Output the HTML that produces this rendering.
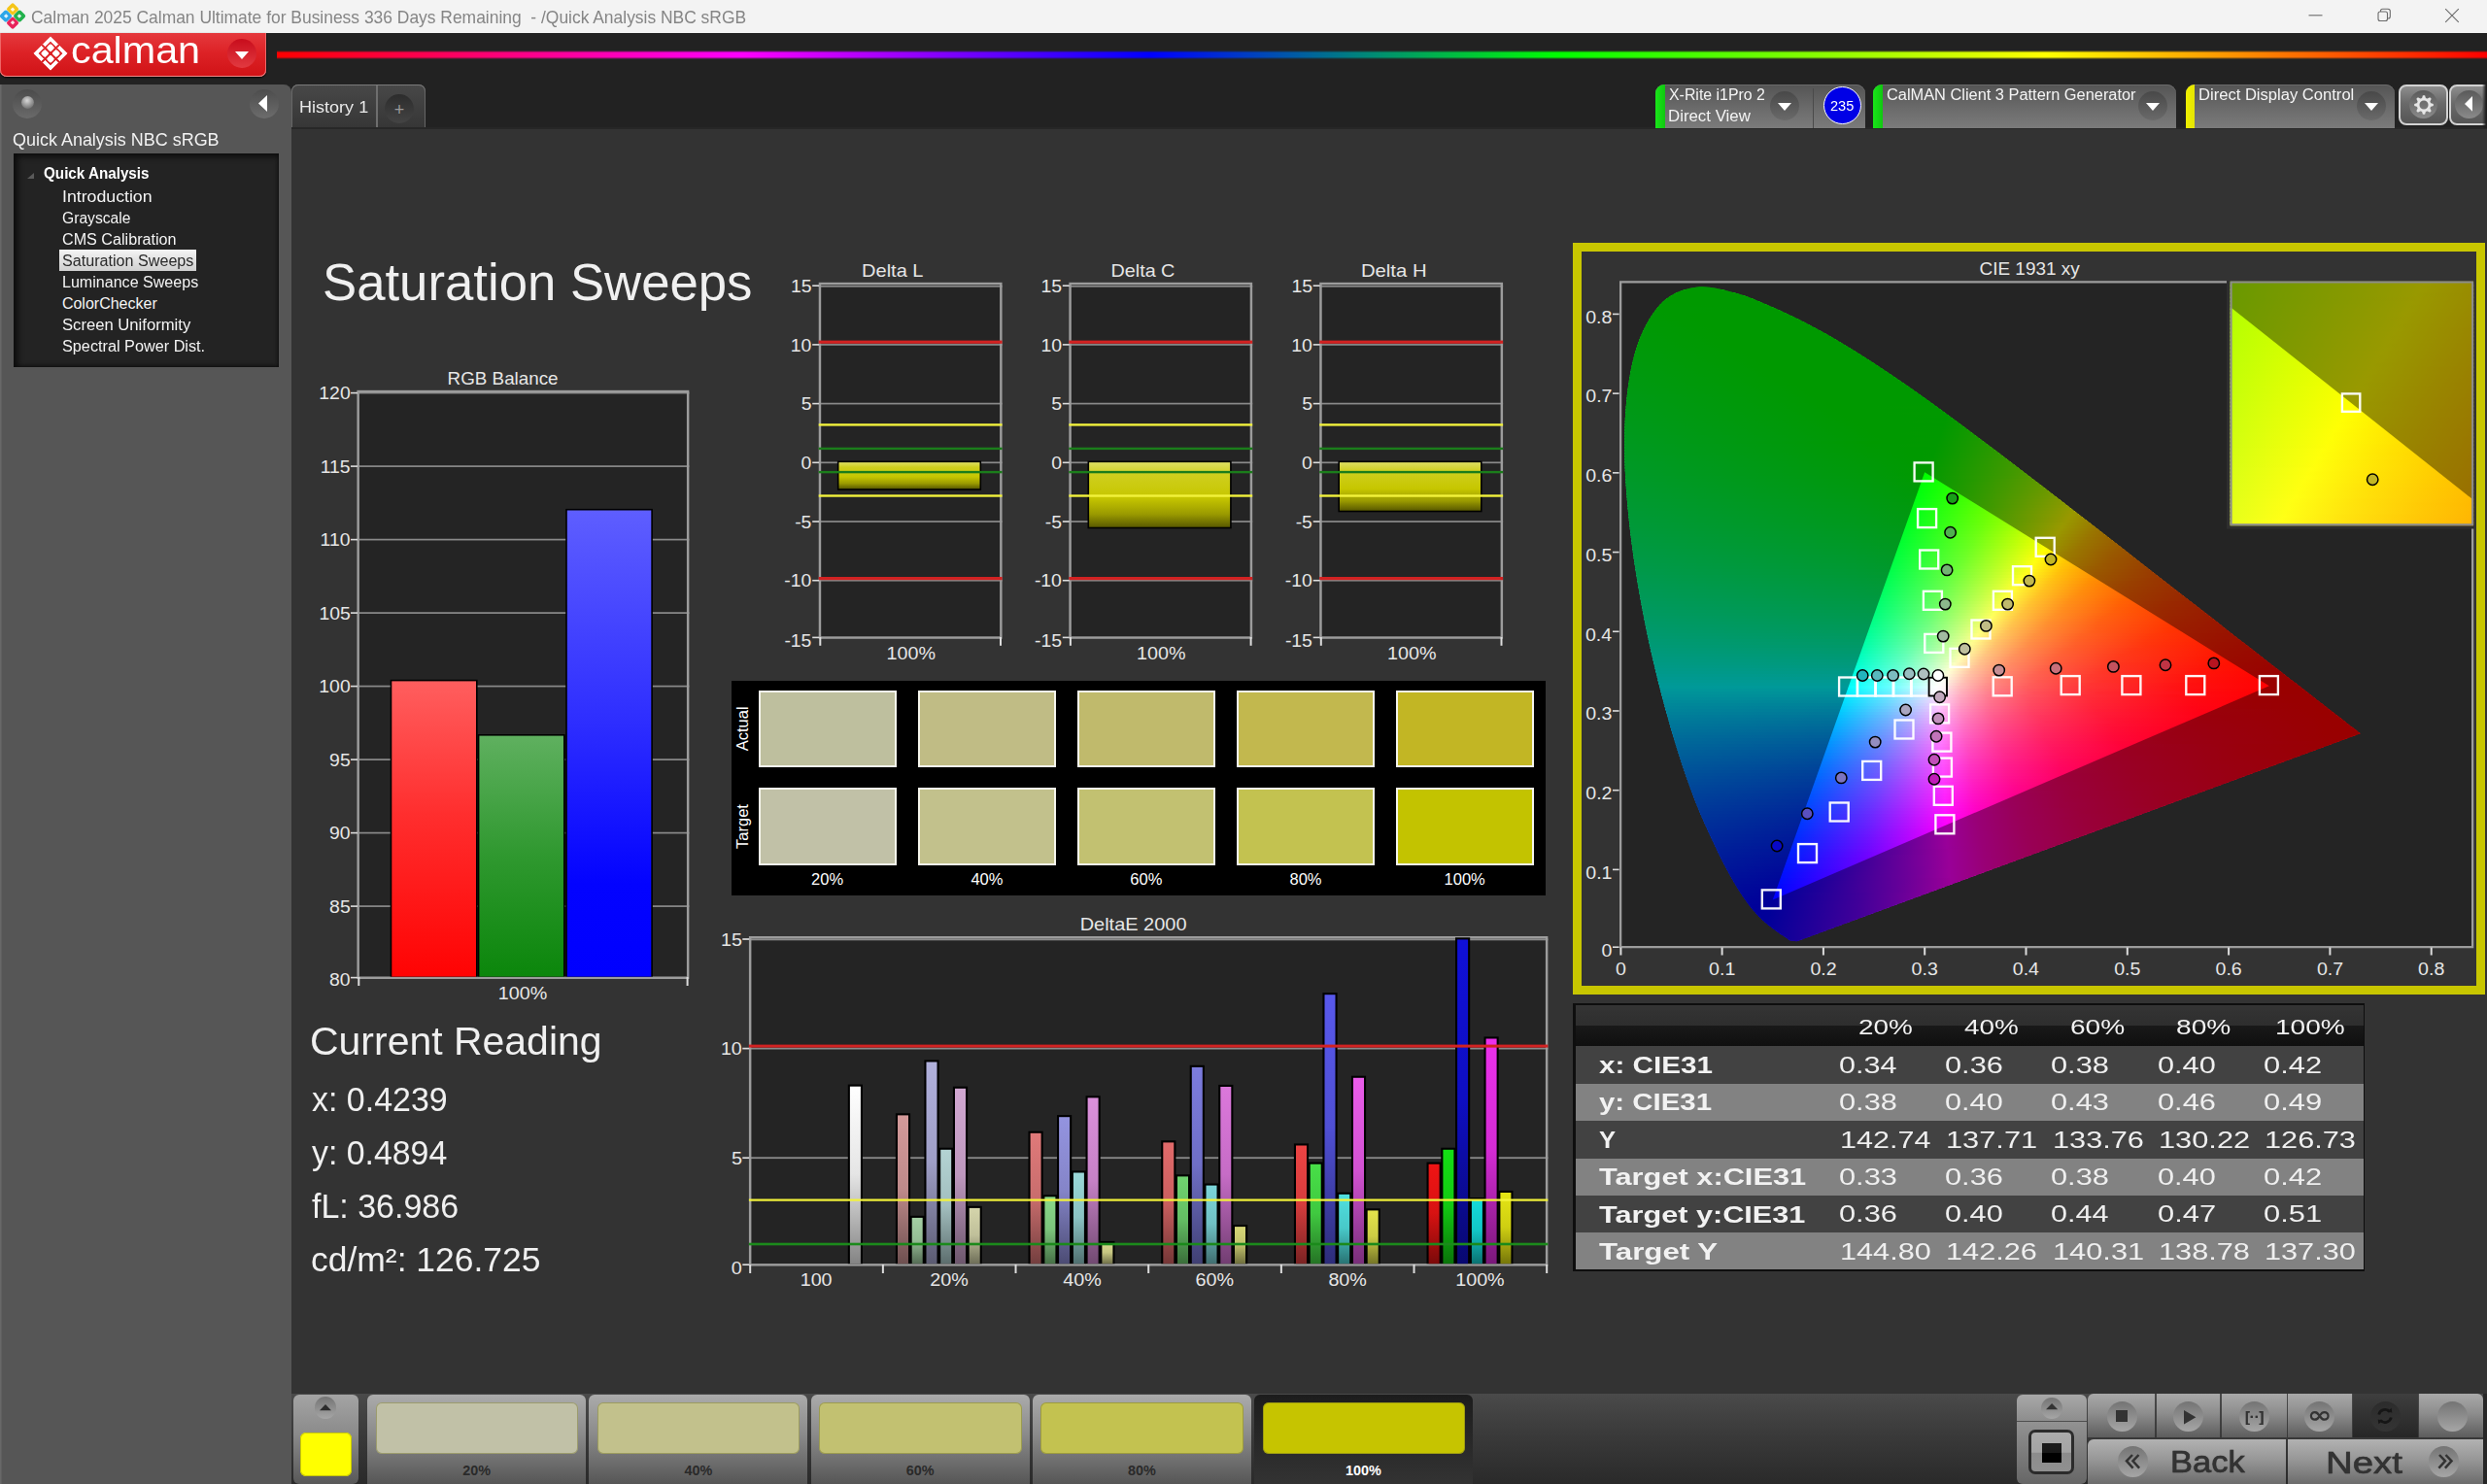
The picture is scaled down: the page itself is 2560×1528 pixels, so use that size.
<!DOCTYPE html>
<html lang="en"><head><meta charset="utf-8"><title>Calman 2025 - Quick Analysis NBC sRGB</title>
<style>
html,body{margin:0;padding:0;}
body{width:2560px;height:1528px;overflow:hidden;background:#333;font-family:"Liberation Sans",sans-serif;position:relative;}
div,.a,.t{position:absolute;box-sizing:border-box;}
.t{white-space:nowrap;transform-origin:0 50%;display:block;}
svg{overflow:visible;}
svg text{font-family:"Liberation Sans",sans-serif;}
</style></head><body>
<div style="left:0px;top:0px;width:2560px;height:34px;background:#f3f3f3;"></div>
<svg class="a" style="left:1px;top:4px" width="25" height="25" viewBox="0 0 28 28">
<g transform="translate(13.5,14) rotate(45)">
<rect x="-11" y="-11" width="10.8" height="10.8" rx="2.2" fill="#f5c518"/>
<rect x="0.2" y="-11" width="10.8" height="10.8" rx="2.2" fill="#22b14c"/>
<rect x="-11" y="0.2" width="10.8" height="10.8" rx="2.2" fill="#2ea6e8"/>
<rect x="0.2" y="0.2" width="10.8" height="10.8" rx="2.2" fill="#e8235a"/>
<rect x="-7.2" y="-7.2" width="3.6" height="3.6" fill="#fff" opacity=".85"/>
<rect x="3.6" y="-7.2" width="3.6" height="3.6" fill="#fff" opacity=".85"/>
<rect x="-7.2" y="3.6" width="3.6" height="3.6" fill="#fff" opacity=".85"/>
<rect x="3.6" y="3.6" width="3.6" height="3.6" fill="#fff" opacity=".85"/>
</g></svg>
<span class="t" style="left:32.1px;top:8.6px;font-size:18.5px;line-height:18.5px;color:#858585;transform:scaleX(0.942);white-space:pre;">Calman 2025 Calman Ultimate for Business 336 Days Remaining  - /Quick Analysis NBC sRGB</span>
<svg class="a" style="left:2360px;top:0" width="200" height="34" viewBox="0 0 200 34" fill="none" stroke="#6a6a6a" stroke-width="1.1">
<path d="M16.5 15.8h14"/>
<rect x="88" y="12" width="9.5" height="9.5" rx="2"/><path d="M90.5 12v-.8a2 2 0 0 1 2-2h5.5a2.3 2.3 0 0 1 2.3 2.3v5.5a2 2 0 0 1-2 2h-.8"/>
<path d="M157.2 9.2l13.6 13.6M170.8 9.2l-13.6 13.6"/></svg>
<div style="left:0px;top:34px;width:2560px;height:98px;background:#222;"></div>
<div style="left:285px;top:51.5px;width:2275px;height:9px;background:linear-gradient(90deg,#f00 0%,#f0f 21%,#00f 39.5%,#0f0 58%,#ff0 80%,#f00 100%);-webkit-mask-image:linear-gradient(180deg,transparent 0,#000 25%,#000 75%,transparent 100%);mask-image:linear-gradient(180deg,transparent 0,#000 25%,#000 75%,transparent 100%);"></div>
<div style="left:0px;top:34px;width:274px;height:44.5px;background:linear-gradient(180deg,#e5393d 0%,#dd2226 45%,#d01216 100%);border-radius:0 0 7px 7px;box-shadow:inset 0 -1px 0 #e88,inset 1px 0 0 #e66,inset -1px 0 0 #e66,0 1px 2px #000;"></div>
<svg class="a" style="left:31.7px;top:35.4px" width="40" height="40" viewBox="-20 -20 40 40"><g transform="rotate(45)" fill="#fff" stroke="#fff" stroke-width="0.9" stroke-linejoin="round"><path d="M-12.1 -12.1 L-1.3 -12.1 L-1.3 -9.1 L-9.1 -9.1 L-9.1 -1.3 L-12.1 -1.3z"/><rect x="-6.8" y="-6.8" width="5.5" height="5.5" rx="1.3"/><path d="M12.1 -12.1 L1.3 -12.1 L1.3 -9.1 L9.1 -9.1 L9.1 -1.3 L12.1 -1.3z"/><rect x="1.3" y="-6.8" width="5.5" height="5.5" rx="1.3"/><path d="M-12.1 12.1 L-1.3 12.1 L-1.3 9.1 L-9.1 9.1 L-9.1 1.3 L-12.1 1.3z"/><rect x="-6.8" y="1.3" width="5.5" height="5.5" rx="1.3"/><path d="M12.1 12.1 L1.3 12.1 L1.3 9.1 L9.1 9.1 L9.1 1.3 L12.1 1.3z"/><rect x="1.3" y="1.3" width="5.5" height="5.5" rx="1.3"/></g></svg>
<span class="t" style="left:72.9px;top:32.5px;font-size:38.8px;line-height:38.8px;color:#fff;transform:scaleX(1.064);letter-spacing:0;">calman</span>
<div style="left:234px;top:40px;width:30px;height:30px;border-radius:50%;background:linear-gradient(180deg,#c80d1c 0%,#e23a40 100%);"></div>
<svg class="a" style="left:242px;top:53px" width="14" height="8"><path d="M0 0h14l-7 8z" fill="#fff"/></svg>
<div style="left:0px;top:87px;width:300px;height:1441px;background:#565656;border-radius:0 8px 0 0;box-shadow:inset 1.5px 0 0 #686868;"></div>
<div style="left:13px;top:92px;width:30px;height:30px;border-radius:50%;background:linear-gradient(180deg,#4b4b4b,#6a6a6a);"></div>
<div style="left:21.5px;top:98.5px;width:13px;height:13px;border-radius:50%;background:radial-gradient(circle at 45% 35%,#d8d8d8 0,#9a9a9a 45%,#555 100%);"></div>
<div style="left:256.5px;top:92px;width:30px;height:30px;border-radius:50%;background:linear-gradient(180deg,#4d4d4d,#6c6c6c);"></div>
<svg class="a" style="left:266px;top:98px" width="9" height="17"><path d="M9 0v17l-9-8.5z" fill="#fff"/></svg>
<span class="t" style="left:13.2px;top:135.0px;font-size:18.6px;line-height:18.6px;color:#f2f2f2;transform:scaleX(0.966);">Quick Analysis NBC sRGB</span>
<div style="left:13.5px;top:157.5px;width:273.5px;height:220.5px;background:#232323;box-shadow:inset 3px 2px 6px 1px #0c0c0c,inset -1px -1px 3px 0 #141414;"></div>
<svg class="a" style="left:28px;top:178px" width="7" height="6"><path d="M7 0v6h-7z" fill="#5a5a5a"/></svg>
<span class="t" style="left:44.7px;top:171.2px;font-size:15.8px;line-height:15.8px;color:#fff;font-weight:700;transform:scaleX(0.963);">Quick Analysis</span>
<span class="t" style="left:64.0px;top:195.2px;font-size:16px;line-height:16px;color:#f4f4f4;transform:scaleX(1.107);">Introduction</span>
<span class="t" style="left:63.9px;top:217.1px;font-size:16px;line-height:16px;color:#f4f4f4;transform:scaleX(0.978);">Grayscale</span>
<span class="t" style="left:63.9px;top:239.0px;font-size:16px;line-height:16px;color:#f4f4f4;transform:scaleX(1.009);">CMS Calibration</span>
<div style="left:61px;top:257.3px;width:141px;height:22px;background:linear-gradient(180deg,#f4f4f4,#cfcfcf);"></div>
<span class="t" style="left:64.0px;top:260.9px;font-size:16px;line-height:16px;color:#2a2a2a;transform:scaleX(1.008);">Saturation Sweeps</span>
<span class="t" style="left:64.3px;top:282.9px;font-size:16px;line-height:16px;color:#f4f4f4;transform:scaleX(1.004);">Luminance Sweeps</span>
<span class="t" style="left:63.9px;top:304.8px;font-size:16px;line-height:16px;color:#f4f4f4;">ColorChecker</span>
<span class="t" style="left:64.0px;top:326.7px;font-size:16px;line-height:16px;color:#f4f4f4;transform:scaleX(1.040);">Screen Uniformity</span>
<span class="t" style="left:64.0px;top:348.7px;font-size:16px;line-height:16px;color:#f4f4f4;transform:scaleX(1.015);">Spectral Power Dist.</span>
<div style="left:300px;top:87px;width:138px;height:45px;background:linear-gradient(180deg,#484848,#363636);border-radius:7px 7px 0 0;box-shadow:inset 0 1px 0 #7a7a7a,inset 1px 0 0 #666,inset -1px 0 0 #666;"></div>
<div style="left:387px;top:88px;width:1.5px;height:44px;background:#6e6e6e;"></div>
<span class="t" style="left:308.4px;top:103.1px;font-size:16.8px;line-height:16.8px;color:#eaeaea;transform:scaleX(1.075);">History 1</span>
<div style="left:396px;top:97px;width:30px;height:30px;border-radius:50%;background:linear-gradient(180deg,#2c2c2c,#444);"></div>
<span class="t" style="left:405.8px;top:104.1px;font-size:18px;line-height:18px;color:#9a9a9a;">+</span>
<div style="left:300px;top:132.8px;width:2260px;height:1396px;background:#333;"></div>
<div style="left:300px;top:131.4px;width:2260px;height:1.5px;background:#272727;"></div>
<div style="left:1704px;top:87px;width:215.5px;height:45px;background:linear-gradient(180deg,#545454 0%,#6b6b6b 55%,#7b7b7b 100%);border-radius:9px 9px 0 0;box-shadow:inset 0 1px 0 #6a6a6a;overflow:hidden;"><div style="left:0;top:0;width:9.5px;height:45px;background:linear-gradient(90deg,#19e619,#10c810);"></div></div>
<span class="t" style="left:1718.4px;top:90.3px;font-size:16px;line-height:16px;color:#f4f4f4;transform:scaleX(0.993);">X-Rite i1Pro 2</span>
<span class="t" style="left:1717.4px;top:112.3px;font-size:16px;line-height:16px;color:#f4f4f4;transform:scaleX(1.052);">Direct View</span>
<div style="left:1821.8px;top:94px;width:30px;height:30px;border-radius:50%;background:linear-gradient(180deg,#484848,#6a6a6a);"></div>
<svg class="a" style="left:1829.8px;top:105.5px" width="14" height="8"><path d="M0 0h14l-7 8z" fill="#fff"/></svg>
<div style="left:1865.5px;top:91px;width:1.5px;height:41px;background:#4a4a4a;"></div>
<div style="left:1877px;top:89.3px;width:39px;height:39px;border-radius:50%;background:#0000e6;border:1.6px solid #fff;"></div>
<span class="t" style="left:1884.3px;top:102.0px;font-size:14.2px;line-height:14.2px;color:#fff;transform:scaleX(1.028);">235</span>
<div style="left:1928.2px;top:87px;width:311.8px;height:45px;background:linear-gradient(180deg,#545454 0%,#6b6b6b 55%,#7b7b7b 100%);border-radius:9px 9px 0 0;box-shadow:inset 0 1px 0 #6a6a6a;overflow:hidden;"><div style="left:0;top:0;width:9.5px;height:45px;background:linear-gradient(90deg,#19e619,#10c810);"></div></div>
<span class="t" style="left:1942.1px;top:90.3px;font-size:16px;line-height:16px;color:#f4f4f4;transform:scaleX(1.023);">CalMAN Client 3 Pattern Generator</span>
<div style="left:2200.7px;top:94px;width:30px;height:30px;border-radius:50%;background:linear-gradient(180deg,#484848,#6a6a6a);"></div>
<svg class="a" style="left:2208.7px;top:105.5px" width="14" height="8"><path d="M0 0h14l-7 8z" fill="#fff"/></svg>
<div style="left:2249.7px;top:87px;width:215px;height:45px;background:linear-gradient(180deg,#545454 0%,#6b6b6b 55%,#7b7b7b 100%);border-radius:9px 9px 0 0;box-shadow:inset 0 1px 0 #6a6a6a;overflow:hidden;"><div style="left:0;top:0;width:9.5px;height:45px;background:linear-gradient(90deg,#f0f000,#e6e600);"></div></div>
<span class="t" style="left:2263.1px;top:90.3px;font-size:16px;line-height:16px;color:#f4f4f4;transform:scaleX(1.036);">Direct Display Control</span>
<div style="left:2425.7px;top:94px;width:30px;height:30px;border-radius:50%;background:linear-gradient(180deg,#484848,#6a6a6a);"></div>
<svg class="a" style="left:2433.7px;top:105.5px" width="14" height="8"><path d="M0 0h14l-7 8z" fill="#fff"/></svg>
<div style="left:2469.2px;top:86.5px;width:51px;height:42.3px;background:linear-gradient(180deg,#8e8e8e 0%,#6a6a6a 45%,#555 100%);border:2px solid #d2d2d2;border-radius:8px;"></div>
<div style="left:2480.1px;top:93.3px;width:29px;height:29px;border-radius:50%;background:linear-gradient(180deg,#5a5a5a,#8a8a8a);"></div>
<svg class="a" style="left:2482.6px;top:95.5px" width="24" height="24" viewBox="-12 -12 24 24"><g fill="#e6e6e6"><path d="M-2.1 -6.6L-1.1 -9.8L1.1 -9.8L2.1 -6.6z" transform="rotate(0)"/><path d="M-2.1 -6.6L-1.1 -9.8L1.1 -9.8L2.1 -6.6z" transform="rotate(45)"/><path d="M-2.1 -6.6L-1.1 -9.8L1.1 -9.8L2.1 -6.6z" transform="rotate(90)"/><path d="M-2.1 -6.6L-1.1 -9.8L1.1 -9.8L2.1 -6.6z" transform="rotate(135)"/><path d="M-2.1 -6.6L-1.1 -9.8L1.1 -9.8L2.1 -6.6z" transform="rotate(180)"/><path d="M-2.1 -6.6L-1.1 -9.8L1.1 -9.8L2.1 -6.6z" transform="rotate(225)"/><path d="M-2.1 -6.6L-1.1 -9.8L1.1 -9.8L2.1 -6.6z" transform="rotate(270)"/><path d="M-2.1 -6.6L-1.1 -9.8L1.1 -9.8L2.1 -6.6z" transform="rotate(315)"/></g><circle r="5.9" fill="none" stroke="#e6e6e6" stroke-width="2.7"/></svg>
<div style="left:2520.6px;top:86.5px;width:45px;height:42.3px;background:linear-gradient(180deg,#8e8e8e 0%,#6a6a6a 45%,#555 100%);border:2px solid #d2d2d2;border-radius:8px;"></div>
<div style="left:2526.5px;top:93.3px;width:29px;height:29px;border-radius:50%;background:linear-gradient(180deg,#5a5a5a,#8a8a8a);"></div>
<svg class="a" style="left:2537.1px;top:99.1px" width="8" height="15.8"><path d="M8 0v15.8l-8-7.9z" fill="#fff"/></svg>
<div style="left:2555px;top:84px;width:5px;height:48px;background:linear-gradient(90deg,rgba(28,28,28,0),#1e1e1e 80%);"></div>
<span class="t" style="left:331.7px;top:264.3px;font-size:53.3px;line-height:53.3px;color:#f0f0f0;transform:scaleX(0.989);">Saturation Sweeps</span>
<span class="t" style="left:319.0px;top:1051.4px;font-size:41.5px;line-height:41.5px;color:#f0f0f0;transform:scaleX(0.987);">Current Reading</span>
<span class="t" style="left:320.7px;top:1114.6px;font-size:34.4px;line-height:34.4px;color:#f0f0f0;transform:scaleX(0.987);">x: 0.4239</span>
<span class="t" style="left:321.0px;top:1169.6px;font-size:34.4px;line-height:34.4px;color:#f0f0f0;transform:scaleX(0.984);">y: 0.4894</span>
<span class="t" style="left:320.7px;top:1224.6px;font-size:34.4px;line-height:34.4px;color:#f0f0f0;transform:scaleX(0.988);">fL: 36.986</span>
<span class="t" style="left:319.6px;top:1279.6px;font-size:34.4px;line-height:34.4px;color:#f0f0f0;transform:scaleX(1.031);">cd/m²: 126.725</span>
<svg class="a" style="left:310px;top:370px" width="420" height="680" viewBox="310 370 420 680"><defs>
<linearGradient id="gR" x1="0" y1="0" x2="0" y2="1"><stop offset="0" stop-color="#ff5e5e"/><stop offset="0.45" stop-color="#ff2e2e"/><stop offset="1" stop-color="#ff0303"/></linearGradient>
<linearGradient id="gG" x1="0" y1="0" x2="0" y2="1"><stop offset="0" stop-color="#5fb05f"/><stop offset="0.5" stop-color="#2f982f"/><stop offset="1" stop-color="#0b860b"/></linearGradient>
<linearGradient id="gB" x1="0" y1="0" x2="0" y2="1"><stop offset="0" stop-color="#5e5eff"/><stop offset="0.45" stop-color="#2e2eff"/><stop offset="0.8" stop-color="#0303ff"/><stop offset="1" stop-color="#0000ff"/></linearGradient>
</defs><rect x="367.4" y="401.8" width="342.0" height="606.2" fill="#242424"/><rect x="367.40" y="932.25" width="342.00" height="1.70" fill="#8a8a8a"/><rect x="367.40" y="856.75" width="342.00" height="1.70" fill="#8a8a8a"/><rect x="367.40" y="781.25" width="342.00" height="1.70" fill="#8a8a8a"/><rect x="367.40" y="705.75" width="342.00" height="1.70" fill="#8a8a8a"/><rect x="367.40" y="630.25" width="342.00" height="1.70" fill="#8a8a8a"/><rect x="367.40" y="554.75" width="342.00" height="1.70" fill="#8a8a8a"/><rect x="367.40" y="479.25" width="342.00" height="1.70" fill="#8a8a8a"/><rect x="367.40" y="403.75" width="342.00" height="1.70" fill="#8a8a8a"/><rect x="368.65" y="403.05" width="339.50" height="603.70" fill="none" stroke="#9c9c9c" stroke-width="2.5"/><rect x="401.7" y="699.8" width="89.9" height="305.8" fill="#000"/><rect x="403.3" y="701.4" width="86.7" height="304.2" fill="url(#gR)"/><rect x="491.8" y="756.0" width="89.8" height="249.6" fill="#000"/><rect x="493.4" y="757.6" width="86.6" height="248.0" fill="url(#gG)"/><rect x="582.2" y="523.9" width="89.7" height="481.7" fill="#000"/><rect x="583.8" y="525.5" width="86.5" height="480.1" fill="url(#gB)"/><rect x="361.00" y="1005.80" width="7.00" height="1.60" fill="#dcdcdc"/><text x="339.0" y="1015.1" font-size="18.3" fill="#e6e6e6" textLength="21.6" lengthAdjust="spacingAndGlyphs">80</text><rect x="361.00" y="932.30" width="7.00" height="1.60" fill="#dcdcdc"/><text x="339.1" y="939.6" font-size="18.3" fill="#e6e6e6" textLength="21.6" lengthAdjust="spacingAndGlyphs">85</text><rect x="361.00" y="856.80" width="7.00" height="1.60" fill="#dcdcdc"/><text x="339.0" y="864.1" font-size="18.3" fill="#e6e6e6" textLength="21.6" lengthAdjust="spacingAndGlyphs">90</text><rect x="361.00" y="781.30" width="7.00" height="1.60" fill="#dcdcdc"/><text x="339.1" y="788.6" font-size="18.3" fill="#e6e6e6" textLength="21.6" lengthAdjust="spacingAndGlyphs">95</text><rect x="361.00" y="705.80" width="7.00" height="1.60" fill="#dcdcdc"/><text x="328.3" y="713.1" font-size="18.3" fill="#e6e6e6" textLength="32.4" lengthAdjust="spacingAndGlyphs">100</text><rect x="361.00" y="630.30" width="7.00" height="1.60" fill="#dcdcdc"/><text x="328.4" y="637.6" font-size="18.3" fill="#e6e6e6" textLength="32.4" lengthAdjust="spacingAndGlyphs">105</text><rect x="361.00" y="554.80" width="7.00" height="1.60" fill="#dcdcdc"/><text x="329.6" y="562.1" font-size="18.3" fill="#e6e6e6" textLength="30.9" lengthAdjust="spacingAndGlyphs">110</text><rect x="361.00" y="479.30" width="7.00" height="1.60" fill="#dcdcdc"/><text x="329.7" y="486.6" font-size="18.3" fill="#e6e6e6" textLength="30.9" lengthAdjust="spacingAndGlyphs">115</text><rect x="361.00" y="403.80" width="7.00" height="1.60" fill="#dcdcdc"/><text x="328.3" y="411.1" font-size="18.3" fill="#e6e6e6" textLength="32.4" lengthAdjust="spacingAndGlyphs">120</text><rect x="368.30" y="1006.00" width="2.00" height="9.00" fill="#dcdcdc"/><rect x="706.60" y="1006.00" width="2.00" height="9.00" fill="#dcdcdc"/><text x="460.6" y="396.2" font-size="19" fill="#e6e6e6" textLength="114.0" lengthAdjust="spacingAndGlyphs">RGB Balance</text><text x="512.8" y="1028.5" font-size="18.6" fill="#e6e6e6" textLength="50.5" lengthAdjust="spacingAndGlyphs">100%</text></svg>
<svg class="a" style="left:797px;top:262px" width="250" height="430" viewBox="797 262 250 430"><defs><linearGradient id="dl" x1="0" y1="0" x2="0" y2="1"><stop offset="0" stop-color="#dede62"/><stop offset="0.18" stop-color="#cfcf1e"/><stop offset="0.55" stop-color="#c6c600"/><stop offset="0.8" stop-color="#9a9a00"/><stop offset="1" stop-color="#5a5a00"/></linearGradient></defs><rect x="842.7" y="290.8" width="188.9000000000001" height="366.99999999999994" fill="#242424"/><rect x="842.70" y="293.95" width="188.90" height="1.70" fill="#8a8a8a"/><rect x="842.70" y="354.05" width="188.90" height="1.70" fill="#8a8a8a"/><rect x="842.70" y="414.75" width="188.90" height="1.70" fill="#8a8a8a"/><rect x="842.70" y="475.45" width="188.90" height="1.70" fill="#8a8a8a"/><rect x="842.70" y="536.15" width="188.90" height="1.70" fill="#8a8a8a"/><rect x="842.70" y="596.85" width="188.90" height="1.70" fill="#8a8a8a"/><rect x="843.95" y="292.05" width="186.40" height="364.50" fill="none" stroke="#9c9c9c" stroke-width="2.5"/><rect x="861.9" y="474.6" width="148.2" height="30.2" fill="#000"/><rect x="863.5" y="476.1" width="145.0" height="27.1" fill="url(#dl)"/><rect x="842.70" y="350.60" width="188.90" height="3.20" fill="#d22222"/><rect x="842.70" y="594.00" width="188.90" height="3.20" fill="#d22222"/><rect x="842.70" y="436.20" width="188.90" height="2.40" fill="#f2f23c"/><rect x="842.70" y="509.30" width="188.90" height="2.40" fill="#f2f23c"/><rect x="842.70" y="460.70" width="188.90" height="2.40" fill="#1b7d1b"/><rect x="842.70" y="484.90" width="188.90" height="2.40" fill="#1b7d1b"/><rect x="836.20" y="293.40" width="6.90" height="1.60" fill="#dcdcdc"/><text x="813.9" y="300.8" font-size="18.3" fill="#e6e6e6" textLength="21.6" lengthAdjust="spacingAndGlyphs">15</text><rect x="836.20" y="354.10" width="6.90" height="1.60" fill="#dcdcdc"/><text x="813.8" y="361.5" font-size="18.3" fill="#e6e6e6" textLength="21.6" lengthAdjust="spacingAndGlyphs">10</text><rect x="836.20" y="414.80" width="6.90" height="1.60" fill="#dcdcdc"/><text x="824.7" y="422.2" font-size="18.3" fill="#e6e6e6" textLength="10.8" lengthAdjust="spacingAndGlyphs">5</text><rect x="836.20" y="475.50" width="6.90" height="1.60" fill="#dcdcdc"/><text x="824.6" y="482.9" font-size="18.3" fill="#e6e6e6" textLength="10.8" lengthAdjust="spacingAndGlyphs">0</text><rect x="836.20" y="536.20" width="6.90" height="1.60" fill="#dcdcdc"/><text x="818.2" y="543.6" font-size="18.3" fill="#e6e6e6" textLength="17.2" lengthAdjust="spacingAndGlyphs">-5</text><rect x="836.20" y="596.90" width="6.90" height="1.60" fill="#dcdcdc"/><text x="807.3" y="604.3" font-size="18.3" fill="#e6e6e6" textLength="28.0" lengthAdjust="spacingAndGlyphs">-10</text><rect x="836.20" y="655.60" width="6.90" height="1.60" fill="#dcdcdc"/><text x="807.4" y="665.6" font-size="18.3" fill="#e6e6e6" textLength="28.0" lengthAdjust="spacingAndGlyphs">-15</text><rect x="843.30" y="656.00" width="2.00" height="8.80" fill="#dcdcdc"/><rect x="1029.00" y="656.00" width="2.00" height="8.80" fill="#dcdcdc"/><text x="887.1" y="285.2" font-size="19" fill="#e6e6e6" textLength="63.4" lengthAdjust="spacingAndGlyphs">Delta L</text><text x="912.5" y="679.0" font-size="18.6" fill="#e6e6e6" textLength="50.5" lengthAdjust="spacingAndGlyphs">100%</text></svg>
<svg class="a" style="left:1055px;top:262px" width="250" height="430" viewBox="1055 262 250 430"><defs><linearGradient id="dc" x1="0" y1="0" x2="0" y2="1"><stop offset="0" stop-color="#dede62"/><stop offset="0.18" stop-color="#cfcf1e"/><stop offset="0.55" stop-color="#c6c600"/><stop offset="0.8" stop-color="#9a9a00"/><stop offset="1" stop-color="#5a5a00"/></linearGradient></defs><rect x="1100.3" y="290.8" width="188.9000000000001" height="366.99999999999994" fill="#242424"/><rect x="1100.30" y="293.95" width="188.90" height="1.70" fill="#8a8a8a"/><rect x="1100.30" y="354.05" width="188.90" height="1.70" fill="#8a8a8a"/><rect x="1100.30" y="414.75" width="188.90" height="1.70" fill="#8a8a8a"/><rect x="1100.30" y="475.45" width="188.90" height="1.70" fill="#8a8a8a"/><rect x="1100.30" y="536.15" width="188.90" height="1.70" fill="#8a8a8a"/><rect x="1100.30" y="596.85" width="188.90" height="1.70" fill="#8a8a8a"/><rect x="1101.55" y="292.05" width="186.40" height="364.50" fill="none" stroke="#9c9c9c" stroke-width="2.5"/><rect x="1119.5" y="474.6" width="148.2" height="69.7" fill="#000"/><rect x="1121.1" y="476.1" width="145.0" height="66.6" fill="url(#dc)"/><rect x="1100.30" y="350.60" width="188.90" height="3.20" fill="#d22222"/><rect x="1100.30" y="594.00" width="188.90" height="3.20" fill="#d22222"/><rect x="1100.30" y="436.20" width="188.90" height="2.40" fill="#f2f23c"/><rect x="1100.30" y="509.30" width="188.90" height="2.40" fill="#f2f23c"/><rect x="1100.30" y="460.70" width="188.90" height="2.40" fill="#1b7d1b"/><rect x="1100.30" y="484.90" width="188.90" height="2.40" fill="#1b7d1b"/><rect x="1093.80" y="293.40" width="6.90" height="1.60" fill="#dcdcdc"/><text x="1071.5" y="300.8" font-size="18.3" fill="#e6e6e6" textLength="21.6" lengthAdjust="spacingAndGlyphs">15</text><rect x="1093.80" y="354.10" width="6.90" height="1.60" fill="#dcdcdc"/><text x="1071.4" y="361.5" font-size="18.3" fill="#e6e6e6" textLength="21.6" lengthAdjust="spacingAndGlyphs">10</text><rect x="1093.80" y="414.80" width="6.90" height="1.60" fill="#dcdcdc"/><text x="1082.3" y="422.2" font-size="18.3" fill="#e6e6e6" textLength="10.8" lengthAdjust="spacingAndGlyphs">5</text><rect x="1093.80" y="475.50" width="6.90" height="1.60" fill="#dcdcdc"/><text x="1082.2" y="482.9" font-size="18.3" fill="#e6e6e6" textLength="10.8" lengthAdjust="spacingAndGlyphs">0</text><rect x="1093.80" y="536.20" width="6.90" height="1.60" fill="#dcdcdc"/><text x="1075.8" y="543.6" font-size="18.3" fill="#e6e6e6" textLength="17.2" lengthAdjust="spacingAndGlyphs">-5</text><rect x="1093.80" y="596.90" width="6.90" height="1.60" fill="#dcdcdc"/><text x="1064.9" y="604.3" font-size="18.3" fill="#e6e6e6" textLength="28.0" lengthAdjust="spacingAndGlyphs">-10</text><rect x="1093.80" y="655.60" width="6.90" height="1.60" fill="#dcdcdc"/><text x="1065.0" y="665.6" font-size="18.3" fill="#e6e6e6" textLength="28.0" lengthAdjust="spacingAndGlyphs">-15</text><rect x="1100.90" y="656.00" width="2.00" height="8.80" fill="#dcdcdc"/><rect x="1286.60" y="656.00" width="2.00" height="8.80" fill="#dcdcdc"/><text x="1143.5" y="285.2" font-size="19" fill="#e6e6e6" textLength="65.9" lengthAdjust="spacingAndGlyphs">Delta C</text><text x="1170.1" y="679.0" font-size="18.6" fill="#e6e6e6" textLength="50.5" lengthAdjust="spacingAndGlyphs">100%</text></svg>
<svg class="a" style="left:1313px;top:262px" width="250" height="430" viewBox="1313 262 250 430"><defs><linearGradient id="dh" x1="0" y1="0" x2="0" y2="1"><stop offset="0" stop-color="#dede62"/><stop offset="0.18" stop-color="#cfcf1e"/><stop offset="0.55" stop-color="#c6c600"/><stop offset="0.8" stop-color="#9a9a00"/><stop offset="1" stop-color="#5a5a00"/></linearGradient></defs><rect x="1358.2" y="290.8" width="188.9000000000001" height="366.99999999999994" fill="#242424"/><rect x="1358.20" y="293.95" width="188.90" height="1.70" fill="#8a8a8a"/><rect x="1358.20" y="354.05" width="188.90" height="1.70" fill="#8a8a8a"/><rect x="1358.20" y="414.75" width="188.90" height="1.70" fill="#8a8a8a"/><rect x="1358.20" y="475.45" width="188.90" height="1.70" fill="#8a8a8a"/><rect x="1358.20" y="536.15" width="188.90" height="1.70" fill="#8a8a8a"/><rect x="1358.20" y="596.85" width="188.90" height="1.70" fill="#8a8a8a"/><rect x="1359.45" y="292.05" width="186.40" height="364.50" fill="none" stroke="#9c9c9c" stroke-width="2.5"/><rect x="1377.4" y="474.6" width="148.2" height="52.7" fill="#000"/><rect x="1379.0" y="476.1" width="145.0" height="49.6" fill="url(#dh)"/><rect x="1358.20" y="350.60" width="188.90" height="3.20" fill="#d22222"/><rect x="1358.20" y="594.00" width="188.90" height="3.20" fill="#d22222"/><rect x="1358.20" y="436.20" width="188.90" height="2.40" fill="#f2f23c"/><rect x="1358.20" y="509.30" width="188.90" height="2.40" fill="#f2f23c"/><rect x="1358.20" y="460.70" width="188.90" height="2.40" fill="#1b7d1b"/><rect x="1358.20" y="484.90" width="188.90" height="2.40" fill="#1b7d1b"/><rect x="1351.70" y="293.40" width="6.90" height="1.60" fill="#dcdcdc"/><text x="1329.4" y="300.8" font-size="18.3" fill="#e6e6e6" textLength="21.6" lengthAdjust="spacingAndGlyphs">15</text><rect x="1351.70" y="354.10" width="6.90" height="1.60" fill="#dcdcdc"/><text x="1329.3" y="361.5" font-size="18.3" fill="#e6e6e6" textLength="21.6" lengthAdjust="spacingAndGlyphs">10</text><rect x="1351.70" y="414.80" width="6.90" height="1.60" fill="#dcdcdc"/><text x="1340.2" y="422.2" font-size="18.3" fill="#e6e6e6" textLength="10.8" lengthAdjust="spacingAndGlyphs">5</text><rect x="1351.70" y="475.50" width="6.90" height="1.60" fill="#dcdcdc"/><text x="1340.1" y="482.9" font-size="18.3" fill="#e6e6e6" textLength="10.8" lengthAdjust="spacingAndGlyphs">0</text><rect x="1351.70" y="536.20" width="6.90" height="1.60" fill="#dcdcdc"/><text x="1333.7" y="543.6" font-size="18.3" fill="#e6e6e6" textLength="17.2" lengthAdjust="spacingAndGlyphs">-5</text><rect x="1351.70" y="596.90" width="6.90" height="1.60" fill="#dcdcdc"/><text x="1322.8" y="604.3" font-size="18.3" fill="#e6e6e6" textLength="28.0" lengthAdjust="spacingAndGlyphs">-10</text><rect x="1351.70" y="655.60" width="6.90" height="1.60" fill="#dcdcdc"/><text x="1322.9" y="665.6" font-size="18.3" fill="#e6e6e6" textLength="28.0" lengthAdjust="spacingAndGlyphs">-15</text><rect x="1358.80" y="656.00" width="2.00" height="8.80" fill="#dcdcdc"/><rect x="1544.50" y="656.00" width="2.00" height="8.80" fill="#dcdcdc"/><text x="1400.9" y="285.2" font-size="19" fill="#e6e6e6" textLength="67.7" lengthAdjust="spacingAndGlyphs">Delta H</text><text x="1428.0" y="679.0" font-size="18.6" fill="#e6e6e6" textLength="50.5" lengthAdjust="spacingAndGlyphs">100%</text></svg>
<div style="left:752.8px;top:701px;width:838.6px;height:220.8px;background:#000;"></div>
<div style="left:780.8px;top:710.6px;width:141.8px;height:79.2px;background:#bebf9e;border:2px solid #f6f6ec;"></div>
<div style="left:780.8px;top:811px;width:141.8px;height:79.6px;background:#c1c1a7;border:2px solid #f6f6ec;"></div>
<span class="t" style="left:835.1px;top:897.0px;font-size:16.5px;line-height:16.5px;color:#fff;">20%</span>
<div style="left:944.9px;top:710.6px;width:141.8px;height:79.2px;background:#c0bc85;border:2px solid #f6f6ec;"></div>
<div style="left:944.9px;top:811px;width:141.8px;height:79.6px;background:#c2c18c;border:2px solid #f6f6ec;"></div>
<span class="t" style="left:999.4px;top:897.0px;font-size:16.5px;line-height:16.5px;color:#fff;">40%</span>
<div style="left:1109px;top:710.6px;width:141.8px;height:79.2px;background:#c0ba6c;border:2px solid #f6f6ec;"></div>
<div style="left:1109px;top:811px;width:141.8px;height:79.6px;background:#c2c171;border:2px solid #f6f6ec;"></div>
<span class="t" style="left:1163.3px;top:897.0px;font-size:16.5px;line-height:16.5px;color:#fff;">60%</span>
<div style="left:1273.1px;top:710.6px;width:141.8px;height:79.2px;background:#c2b84e;border:2px solid #f6f6ec;"></div>
<div style="left:1273.1px;top:811px;width:141.8px;height:79.6px;background:#c3c250;border:2px solid #f6f6ec;"></div>
<span class="t" style="left:1327.5px;top:897.0px;font-size:16.5px;line-height:16.5px;color:#fff;">80%</span>
<div style="left:1437.2px;top:710.6px;width:141.8px;height:79.2px;background:#c2b624;border:2px solid #f6f6ec;"></div>
<div style="left:1437.2px;top:811px;width:141.8px;height:79.6px;background:#c3c300;border:2px solid #f6f6ec;"></div>
<span class="t" style="left:1486.6px;top:897.0px;font-size:16.5px;line-height:16.5px;color:#fff;">100%</span>
<svg class="a" style="left:752px;top:701px" width="30" height="221" viewBox="752 701 30 221"><text transform="translate(770,750.3) rotate(-90)" text-anchor="middle" font-size="16.5" fill="#fff">Actual</text><text transform="translate(770,851) rotate(-90)" text-anchor="middle" font-size="16.5" fill="#fff">Target</text></svg>
<svg class="a" style="left:735px;top:905px" width="885" height="440" viewBox="735 905 885 440"><defs><linearGradient id="d0W" gradientUnits="userSpaceOnUse" x1="0" y1="1116.9" x2="0" y2="1301"><stop offset="0" stop-color="#ffffff"/><stop offset="0.5" stop-color="#e5e5e5"/><stop offset="1" stop-color="#848484"/></linearGradient><linearGradient id="d1R" gradientUnits="userSpaceOnUse" x1="0" y1="1146.6" x2="0" y2="1301"><stop offset="0" stop-color="#d49a9a"/><stop offset="0.5" stop-color="#be8a8a"/><stop offset="1" stop-color="#6e5050"/></linearGradient><linearGradient id="d1G" gradientUnits="userSpaceOnUse" x1="0" y1="1252.1" x2="0" y2="1301"><stop offset="0" stop-color="#a6d2a6"/><stop offset="0.5" stop-color="#95bd95"/><stop offset="1" stop-color="#566d56"/></linearGradient><linearGradient id="d1B" gradientUnits="userSpaceOnUse" x1="0" y1="1091.7" x2="0" y2="1301"><stop offset="0" stop-color="#b0b0dc"/><stop offset="0.5" stop-color="#9e9ec6"/><stop offset="1" stop-color="#5b5b72"/></linearGradient><linearGradient id="d1C" gradientUnits="userSpaceOnUse" x1="0" y1="1182.0" x2="0" y2="1301"><stop offset="0" stop-color="#b4d4d4"/><stop offset="0.5" stop-color="#a2bebe"/><stop offset="1" stop-color="#5d6e6e"/></linearGradient><linearGradient id="d1M" gradientUnits="userSpaceOnUse" x1="0" y1="1119.0" x2="0" y2="1301"><stop offset="0" stop-color="#d2a8d2"/><stop offset="0.5" stop-color="#bd97bd"/><stop offset="1" stop-color="#6d576d"/></linearGradient><linearGradient id="d1Y" gradientUnits="userSpaceOnUse" x1="0" y1="1242.1" x2="0" y2="1301"><stop offset="0" stop-color="#d6d6ac"/><stop offset="0.5" stop-color="#c0c09a"/><stop offset="1" stop-color="#6f6f59"/></linearGradient><linearGradient id="d2R" gradientUnits="userSpaceOnUse" x1="0" y1="1165.0" x2="0" y2="1301"><stop offset="0" stop-color="#e07a7a"/><stop offset="0.5" stop-color="#c96d6d"/><stop offset="1" stop-color="#743f3f"/></linearGradient><linearGradient id="d2G" gradientUnits="userSpaceOnUse" x1="0" y1="1230.5" x2="0" y2="1301"><stop offset="0" stop-color="#8ada8a"/><stop offset="0.5" stop-color="#7cc47c"/><stop offset="1" stop-color="#477147"/></linearGradient><linearGradient id="d2B" gradientUnits="userSpaceOnUse" x1="0" y1="1148.4" x2="0" y2="1301"><stop offset="0" stop-color="#9494e0"/><stop offset="0.5" stop-color="#8585c9"/><stop offset="1" stop-color="#4c4c74"/></linearGradient><linearGradient id="d2C" gradientUnits="userSpaceOnUse" x1="0" y1="1205.7" x2="0" y2="1301"><stop offset="0" stop-color="#9ad8d8"/><stop offset="0.5" stop-color="#8ac2c2"/><stop offset="1" stop-color="#507070"/></linearGradient><linearGradient id="d2M" gradientUnits="userSpaceOnUse" x1="0" y1="1128.6" x2="0" y2="1301"><stop offset="0" stop-color="#dc90dc"/><stop offset="0.5" stop-color="#c681c6"/><stop offset="1" stop-color="#724a72"/></linearGradient><linearGradient id="d2Y" gradientUnits="userSpaceOnUse" x1="0" y1="1278.2" x2="0" y2="1301"><stop offset="0" stop-color="#dcdc90"/><stop offset="0.5" stop-color="#c6c681"/><stop offset="1" stop-color="#72724a"/></linearGradient><linearGradient id="d3R" gradientUnits="userSpaceOnUse" x1="0" y1="1174.6" x2="0" y2="1301"><stop offset="0" stop-color="#e26a6a"/><stop offset="0.5" stop-color="#cb5f5f"/><stop offset="1" stop-color="#753737"/></linearGradient><linearGradient id="d3G" gradientUnits="userSpaceOnUse" x1="0" y1="1209.6" x2="0" y2="1301"><stop offset="0" stop-color="#70d470"/><stop offset="0.5" stop-color="#64be64"/><stop offset="1" stop-color="#3a6e3a"/></linearGradient><linearGradient id="d3B" gradientUnits="userSpaceOnUse" x1="0" y1="1097.1" x2="0" y2="1301"><stop offset="0" stop-color="#7c7cde"/><stop offset="0.5" stop-color="#6f6fc7"/><stop offset="1" stop-color="#404073"/></linearGradient><linearGradient id="d3C" gradientUnits="userSpaceOnUse" x1="0" y1="1218.8" x2="0" y2="1301"><stop offset="0" stop-color="#7cd6da"/><stop offset="0.5" stop-color="#6fc0c4"/><stop offset="1" stop-color="#406f71"/></linearGradient><linearGradient id="d3M" gradientUnits="userSpaceOnUse" x1="0" y1="1117.2" x2="0" y2="1301"><stop offset="0" stop-color="#dc78dc"/><stop offset="0.5" stop-color="#c66cc6"/><stop offset="1" stop-color="#723e72"/></linearGradient><linearGradient id="d3Y" gradientUnits="userSpaceOnUse" x1="0" y1="1261.3" x2="0" y2="1301"><stop offset="0" stop-color="#d8d878"/><stop offset="0.5" stop-color="#c2c26c"/><stop offset="1" stop-color="#70703e"/></linearGradient><linearGradient id="d4R" gradientUnits="userSpaceOnUse" x1="0" y1="1177.7" x2="0" y2="1301"><stop offset="0" stop-color="#ee4444"/><stop offset="0.5" stop-color="#d63d3d"/><stop offset="1" stop-color="#7b2323"/></linearGradient><linearGradient id="d4G" gradientUnits="userSpaceOnUse" x1="0" y1="1196.9" x2="0" y2="1301"><stop offset="0" stop-color="#48e048"/><stop offset="0.5" stop-color="#40c940"/><stop offset="1" stop-color="#257425"/></linearGradient><linearGradient id="d4B" gradientUnits="userSpaceOnUse" x1="0" y1="1022.4" x2="0" y2="1301"><stop offset="0" stop-color="#5858ec"/><stop offset="0.5" stop-color="#4f4fd4"/><stop offset="1" stop-color="#2d2d7a"/></linearGradient><linearGradient id="d4C" gradientUnits="userSpaceOnUse" x1="0" y1="1228.0" x2="0" y2="1301"><stop offset="0" stop-color="#50e0e0"/><stop offset="0.5" stop-color="#48c9c9"/><stop offset="1" stop-color="#297474"/></linearGradient><linearGradient id="d4M" gradientUnits="userSpaceOnUse" x1="0" y1="1108.0" x2="0" y2="1301"><stop offset="0" stop-color="#ea5cea"/><stop offset="0.5" stop-color="#d252d2"/><stop offset="1" stop-color="#792f79"/></linearGradient><linearGradient id="d4Y" gradientUnits="userSpaceOnUse" x1="0" y1="1244.6" x2="0" y2="1301"><stop offset="0" stop-color="#e4e44c"/><stop offset="0.5" stop-color="#cdcd44"/><stop offset="1" stop-color="#767627"/></linearGradient><linearGradient id="d5R" gradientUnits="userSpaceOnUse" x1="0" y1="1196.9" x2="0" y2="1301"><stop offset="0" stop-color="#f01414"/><stop offset="0.5" stop-color="#d81212"/><stop offset="1" stop-color="#7c0a0a"/></linearGradient><linearGradient id="d5G" gradientUnits="userSpaceOnUse" x1="0" y1="1182.0" x2="0" y2="1301"><stop offset="0" stop-color="#14e014"/><stop offset="0.5" stop-color="#12c912"/><stop offset="1" stop-color="#0a740a"/></linearGradient><linearGradient id="d5B" gradientUnits="userSpaceOnUse" x1="0" y1="962.5" x2="0" y2="1301"><stop offset="0" stop-color="#1010d8"/><stop offset="0.5" stop-color="#0e0ec2"/><stop offset="1" stop-color="#080870"/></linearGradient><linearGradient id="d5C" gradientUnits="userSpaceOnUse" x1="0" y1="1233.3" x2="0" y2="1301"><stop offset="0" stop-color="#14dcdc"/><stop offset="0.5" stop-color="#12c6c6"/><stop offset="1" stop-color="#0a7272"/></linearGradient><linearGradient id="d5M" gradientUnits="userSpaceOnUse" x1="0" y1="1067.7" x2="0" y2="1301"><stop offset="0" stop-color="#ec30ec"/><stop offset="0.5" stop-color="#d42bd4"/><stop offset="1" stop-color="#7a187a"/></linearGradient><linearGradient id="d5Y" gradientUnits="userSpaceOnUse" x1="0" y1="1226.2" x2="0" y2="1301"><stop offset="0" stop-color="#e6e614"/><stop offset="0.5" stop-color="#cfcf12"/><stop offset="1" stop-color="#77770a"/></linearGradient></defs><rect x="770.9" y="964.0" width="822.5000000000001" height="339.5999999999999" fill="#242424"/><rect x="770.90" y="1191.30" width="822.50" height="1.80" fill="#8a8a8a"/><rect x="770.90" y="1078.70" width="822.50" height="1.80" fill="#8a8a8a"/><rect x="770.90" y="966.50" width="822.50" height="1.80" fill="#8a8a8a"/><rect x="772.15" y="965.25" width="820.00" height="337.10" fill="none" stroke="#9c9c9c" stroke-width="2.5"/><rect x="872.8" y="1116.6" width="15.2" height="184.6" fill="#000"/><rect x="874.9" y="1118.7" width="11" height="182.5" fill="url(#d0W)"/><rect x="921.9" y="1146.3" width="15.2" height="154.9" fill="#000"/><rect x="924.0" y="1148.4" width="11" height="152.8" fill="url(#d1R)"/><rect x="936.6" y="1251.8" width="15.2" height="49.4" fill="#000"/><rect x="938.7" y="1253.9" width="11" height="47.3" fill="url(#d1G)"/><rect x="951.4" y="1091.4" width="15.2" height="209.8" fill="#000"/><rect x="953.5" y="1093.5" width="11" height="207.7" fill="url(#d1B)"/><rect x="966.1" y="1181.7" width="15.2" height="119.5" fill="#000"/><rect x="968.2" y="1183.8" width="11" height="117.4" fill="url(#d1C)"/><rect x="980.9" y="1118.7" width="15.2" height="182.5" fill="#000"/><rect x="983.0" y="1120.8" width="11" height="180.4" fill="url(#d1M)"/><rect x="995.6" y="1241.8" width="15.2" height="59.4" fill="#000"/><rect x="997.7" y="1243.9" width="11" height="57.3" fill="url(#d1Y)"/><rect x="1058.5" y="1164.7" width="15.2" height="136.5" fill="#000"/><rect x="1060.6" y="1166.8" width="11" height="134.4" fill="url(#d2R)"/><rect x="1073.3" y="1230.2" width="15.2" height="71.0" fill="#000"/><rect x="1075.4" y="1232.3" width="11" height="68.9" fill="url(#d2G)"/><rect x="1088.0" y="1148.1" width="15.2" height="153.1" fill="#000"/><rect x="1090.1" y="1150.2" width="11" height="151.0" fill="url(#d2B)"/><rect x="1102.8" y="1205.4" width="15.2" height="95.8" fill="#000"/><rect x="1104.9" y="1207.5" width="11" height="93.7" fill="url(#d2C)"/><rect x="1117.5" y="1128.3" width="15.2" height="172.9" fill="#000"/><rect x="1119.6" y="1130.4" width="11" height="170.8" fill="url(#d2M)"/><rect x="1132.3" y="1277.9" width="15.2" height="23.3" fill="#000"/><rect x="1134.4" y="1280.0" width="11" height="21.2" fill="url(#d2Y)"/><rect x="1195.2" y="1174.3" width="15.2" height="126.9" fill="#000"/><rect x="1197.3" y="1176.4" width="11" height="124.8" fill="url(#d3R)"/><rect x="1210.0" y="1209.3" width="15.2" height="91.9" fill="#000"/><rect x="1212.0" y="1211.4" width="11" height="89.8" fill="url(#d3G)"/><rect x="1224.7" y="1096.8" width="15.2" height="204.4" fill="#000"/><rect x="1226.8" y="1098.9" width="11" height="202.3" fill="url(#d3B)"/><rect x="1239.5" y="1218.5" width="15.2" height="82.7" fill="#000"/><rect x="1241.5" y="1220.6" width="11" height="80.6" fill="url(#d3C)"/><rect x="1254.2" y="1116.9" width="15.2" height="184.3" fill="#000"/><rect x="1256.3" y="1119.0" width="11" height="182.2" fill="url(#d3M)"/><rect x="1269.0" y="1261.0" width="15.2" height="40.2" fill="#000"/><rect x="1271.0" y="1263.1" width="11" height="38.1" fill="url(#d3Y)"/><rect x="1331.9" y="1177.4" width="15.2" height="123.8" fill="#000"/><rect x="1334.0" y="1179.5" width="11" height="121.7" fill="url(#d4R)"/><rect x="1346.6" y="1196.6" width="15.2" height="104.6" fill="#000"/><rect x="1348.7" y="1198.7" width="11" height="102.5" fill="url(#d4G)"/><rect x="1361.4" y="1022.1" width="15.2" height="279.1" fill="#000"/><rect x="1363.5" y="1024.2" width="11" height="277.0" fill="url(#d4B)"/><rect x="1376.1" y="1227.7" width="15.2" height="73.5" fill="#000"/><rect x="1378.2" y="1229.8" width="11" height="71.4" fill="url(#d4C)"/><rect x="1390.9" y="1107.7" width="15.2" height="193.5" fill="#000"/><rect x="1393.0" y="1109.8" width="11" height="191.4" fill="url(#d4M)"/><rect x="1405.6" y="1244.3" width="15.2" height="56.9" fill="#000"/><rect x="1407.7" y="1246.4" width="11" height="54.8" fill="url(#d4Y)"/><rect x="1468.5" y="1196.6" width="15.2" height="104.6" fill="#000"/><rect x="1470.6" y="1198.7" width="11" height="102.5" fill="url(#d5R)"/><rect x="1483.3" y="1181.7" width="15.2" height="119.5" fill="#000"/><rect x="1485.4" y="1183.8" width="11" height="117.4" fill="url(#d5G)"/><rect x="1498.0" y="965.3" width="15.2" height="335.9" fill="#000"/><rect x="1500.1" y="967.4" width="11" height="333.8" fill="url(#d5B)"/><rect x="1512.8" y="1233.0" width="15.2" height="68.2" fill="#000"/><rect x="1514.9" y="1235.1" width="11" height="66.1" fill="url(#d5C)"/><rect x="1527.5" y="1067.4" width="15.2" height="233.8" fill="#000"/><rect x="1529.6" y="1069.5" width="11" height="231.7" fill="url(#d5M)"/><rect x="1542.3" y="1225.9" width="15.2" height="75.3" fill="#000"/><rect x="1544.4" y="1228.0" width="11" height="73.2" fill="url(#d5Y)"/><rect x="770.90" y="1075.60" width="822.50" height="3.00" fill="#d22222"/><rect x="770.90" y="1234.50" width="822.50" height="2.20" fill="#f4f43a"/><rect x="770.90" y="1279.70" width="822.50" height="2.60" fill="#1b8a1b"/><rect x="764.30" y="1301.35" width="6.90" height="1.70" fill="#dcdcdc"/><text x="752.8" y="1311.5" font-size="18.6" fill="#e6e6e6" textLength="11.0" lengthAdjust="spacingAndGlyphs">0</text><rect x="764.30" y="1191.35" width="6.90" height="1.70" fill="#dcdcdc"/><text x="752.9" y="1198.9" font-size="18.6" fill="#e6e6e6" textLength="11.0" lengthAdjust="spacingAndGlyphs">5</text><rect x="764.30" y="1078.75" width="6.90" height="1.70" fill="#dcdcdc"/><text x="741.9" y="1086.3" font-size="18.6" fill="#e6e6e6" textLength="21.9" lengthAdjust="spacingAndGlyphs">10</text><rect x="764.30" y="966.15" width="6.90" height="1.70" fill="#dcdcdc"/><text x="742.0" y="973.7" font-size="18.6" fill="#e6e6e6" textLength="21.9" lengthAdjust="spacingAndGlyphs">15</text><rect x="771.20" y="1302.00" width="2.00" height="9.00" fill="#dcdcdc"/><rect x="907.87" y="1302.00" width="2.00" height="9.00" fill="#dcdcdc"/><rect x="1044.53" y="1302.00" width="2.00" height="9.00" fill="#dcdcdc"/><rect x="1181.20" y="1302.00" width="2.00" height="9.00" fill="#dcdcdc"/><rect x="1317.87" y="1302.00" width="2.00" height="9.00" fill="#dcdcdc"/><rect x="1454.53" y="1302.00" width="2.00" height="9.00" fill="#dcdcdc"/><rect x="1591.20" y="1302.00" width="2.00" height="9.00" fill="#dcdcdc"/><text x="823.7" y="1324.0" font-size="18.8" fill="#e6e6e6" textLength="32.9" lengthAdjust="spacingAndGlyphs">100</text><text x="957.3" y="1324.0" font-size="18.8" fill="#e6e6e6" textLength="39.5" lengthAdjust="spacingAndGlyphs">20%</text><text x="1094.3" y="1324.0" font-size="18.8" fill="#e6e6e6" textLength="39.5" lengthAdjust="spacingAndGlyphs">40%</text><text x="1230.6" y="1324.0" font-size="18.8" fill="#e6e6e6" textLength="39.5" lengthAdjust="spacingAndGlyphs">60%</text><text x="1367.4" y="1324.0" font-size="18.8" fill="#e6e6e6" textLength="39.5" lengthAdjust="spacingAndGlyphs">80%</text><text x="1498.2" y="1324.0" font-size="18.8" fill="#e6e6e6" textLength="50.5" lengthAdjust="spacingAndGlyphs">100%</text><text x="1111.7" y="957.5" font-size="19" fill="#e6e6e6" textLength="109.8" lengthAdjust="spacingAndGlyphs">DeltaE 2000</text></svg>
<div style="left:1618.7px;top:249.7px;width:939px;height:773.9px;border:9.5px solid #c8c600;background:#333;"></div>
<svg class="a" style="left:1628px;top:259px" width="921" height="756" viewBox="1628 259 921 756"><defs><clipPath id="loc"><path d="M1849.6 969.3C1848.9 969.2 1846.8 968.9 1845.6 968.8C1844.4 968.6 1843.4 968.7 1842.4 968.3C1841.4 967.9 1840.8 967.1 1839.8 966.4C1838.8 965.7 1837.7 965.0 1836.3 964.1C1835.0 963.1 1833.4 962.1 1831.6 960.9C1829.9 959.7 1828.0 958.4 1825.8 956.8C1823.6 955.2 1821.2 953.4 1818.5 951.1C1815.8 948.8 1813.1 946.6 1809.6 942.8C1806.2 939.0 1802.2 934.6 1797.7 928.2C1793.2 921.8 1788.3 914.7 1782.6 904.6C1776.9 894.4 1770.6 882.6 1763.5 867.1C1756.4 851.7 1747.9 833.8 1740.0 811.7C1732.0 789.7 1723.5 763.7 1715.7 734.9C1707.8 706.1 1699.3 672.0 1692.8 638.9C1686.3 605.9 1680.3 569.4 1676.9 536.5C1673.4 503.6 1671.4 470.4 1672.4 441.6C1673.4 412.9 1676.7 385.2 1682.8 363.9C1688.9 342.5 1698.4 324.9 1708.9 313.5C1719.4 302.2 1732.7 297.7 1745.8 295.8C1758.9 293.8 1773.4 298.2 1787.4 301.9C1801.4 305.7 1816.0 312.4 1829.7 318.5C1843.3 324.5 1856.5 331.3 1869.5 338.3C1882.5 345.3 1895.1 352.8 1907.8 360.5C1920.4 368.3 1933.0 376.6 1945.5 385.0C1958.0 393.4 1970.4 402.2 1982.9 411.1C1995.3 420.0 2007.7 429.1 2020.1 438.3C2032.5 447.5 2045.0 456.9 2057.4 466.3C2069.9 475.7 2082.2 485.3 2094.6 494.8C2106.9 504.3 2119.3 513.8 2131.5 523.2C2143.7 532.6 2155.8 542.1 2167.7 551.3C2179.6 560.6 2191.4 569.8 2202.8 578.7C2214.3 587.7 2225.6 596.5 2236.5 605.0C2247.4 613.4 2258.1 621.7 2268.2 629.6C2278.3 637.4 2288.1 645.1 2297.1 652.2C2306.1 659.2 2314.4 665.6 2322.3 671.7C2330.1 677.8 2337.6 683.7 2344.4 688.9C2351.1 694.1 2357.2 698.8 2362.7 703.1C2368.3 707.4 2373.2 711.3 2377.6 714.7C2382.1 718.2 2386.0 721.3 2389.5 724.0C2393.1 726.8 2396.2 729.2 2399.0 731.4C2401.9 733.6 2404.3 735.5 2406.6 737.3C2409.0 739.1 2411.1 740.8 2413.0 742.3C2414.9 743.8 2416.7 745.2 2418.2 746.4C2419.8 747.6 2421.2 748.6 2422.4 749.5C2423.6 750.5 2424.6 751.3 2425.5 752.0C2426.4 752.7 2427.2 753.3 2427.9 753.9C2428.6 754.4 2429.4 755.0 2429.7 755.2Z"/></clipPath><linearGradient id="c0" gradientUnits="userSpaceOnUse" x1="1726.0" x2="1776.0" y1="0" y2="0"><stop offset="0.0000" stop-color="#00ff00"/><stop offset="1.0000" stop-color="#00ff00"/></linearGradient><linearGradient id="c1" gradientUnits="userSpaceOnUse" x1="1720.0" x2="1796.0" y1="0" y2="0"><stop offset="0.0000" stop-color="#00ff00"/><stop offset="1.0000" stop-color="#00ff00"/></linearGradient><linearGradient id="c2" gradientUnits="userSpaceOnUse" x1="1714.0" x2="1808.0" y1="0" y2="0"><stop offset="0.0000" stop-color="#00ff00"/><stop offset="1.0000" stop-color="#00ff00"/></linearGradient><linearGradient id="c3" gradientUnits="userSpaceOnUse" x1="1708.0" x2="1816.0" y1="0" y2="0"><stop offset="0.0000" stop-color="#00ff00"/><stop offset="1.0000" stop-color="#00ff00"/></linearGradient><linearGradient id="c4" gradientUnits="userSpaceOnUse" x1="1702.0" x2="1822.0" y1="0" y2="0"><stop offset="0.0000" stop-color="#00ff00"/><stop offset="1.0000" stop-color="#00ff00"/></linearGradient><linearGradient id="c5" gradientUnits="userSpaceOnUse" x1="1694.0" x2="1830.0" y1="0" y2="0"><stop offset="0.0000" stop-color="#00ff01"/><stop offset="1.0000" stop-color="#00ff00"/></linearGradient><linearGradient id="c6" gradientUnits="userSpaceOnUse" x1="1692.0" x2="1838.0" y1="0" y2="0"><stop offset="0.0000" stop-color="#00ff02"/><stop offset="1.0000" stop-color="#00ff00"/></linearGradient><linearGradient id="c7" gradientUnits="userSpaceOnUse" x1="1692.0" x2="1846.0" y1="0" y2="0"><stop offset="0.0000" stop-color="#00ff03"/><stop offset="1.0000" stop-color="#00ff00"/></linearGradient><linearGradient id="c8" gradientUnits="userSpaceOnUse" x1="1690.0" x2="1852.0" y1="0" y2="0"><stop offset="0.0000" stop-color="#00ff04"/><stop offset="0.6173" stop-color="#00ff00"/><stop offset="1.0000" stop-color="#00ff00"/></linearGradient><linearGradient id="c9" gradientUnits="userSpaceOnUse" x1="1688.0" x2="1858.0" y1="0" y2="0"><stop offset="0.0000" stop-color="#00ff05"/><stop offset="0.4588" stop-color="#00ff00"/><stop offset="1.0000" stop-color="#00ff00"/></linearGradient><linearGradient id="c10" gradientUnits="userSpaceOnUse" x1="1686.0" x2="1864.0" y1="0" y2="0"><stop offset="0.0000" stop-color="#00ff06"/><stop offset="0.4045" stop-color="#00ff00"/><stop offset="1.0000" stop-color="#00ff00"/></linearGradient><linearGradient id="c11" gradientUnits="userSpaceOnUse" x1="1684.0" x2="1870.0" y1="0" y2="0"><stop offset="0.0000" stop-color="#00ff07"/><stop offset="0.3978" stop-color="#00ff00"/><stop offset="1.0000" stop-color="#00ff00"/></linearGradient><linearGradient id="c12" gradientUnits="userSpaceOnUse" x1="1684.0" x2="1876.0" y1="0" y2="0"><stop offset="0.0000" stop-color="#00ff08"/><stop offset="0.4062" stop-color="#00ff00"/><stop offset="1.0000" stop-color="#00ff00"/></linearGradient><linearGradient id="c13" gradientUnits="userSpaceOnUse" x1="1682.0" x2="1882.0" y1="0" y2="0"><stop offset="0.0000" stop-color="#00ff09"/><stop offset="0.4100" stop-color="#00ff00"/><stop offset="1.0000" stop-color="#00ff00"/></linearGradient><linearGradient id="c14" gradientUnits="userSpaceOnUse" x1="1680.0" x2="1888.0" y1="0" y2="0"><stop offset="0.0000" stop-color="#00ff0b"/><stop offset="0.4231" stop-color="#00ff00"/><stop offset="1.0000" stop-color="#00ff00"/></linearGradient><linearGradient id="c15" gradientUnits="userSpaceOnUse" x1="1678.0" x2="1892.0" y1="0" y2="0"><stop offset="0.0000" stop-color="#00ff0c"/><stop offset="0.4393" stop-color="#00ff00"/><stop offset="1.0000" stop-color="#00ff00"/></linearGradient><linearGradient id="c16" gradientUnits="userSpaceOnUse" x1="1678.0" x2="1898.0" y1="0" y2="0"><stop offset="0.0000" stop-color="#00ff0d"/><stop offset="0.4455" stop-color="#00ff00"/><stop offset="1.0000" stop-color="#00ff00"/></linearGradient><linearGradient id="c17" gradientUnits="userSpaceOnUse" x1="1676.0" x2="1902.0" y1="0" y2="0"><stop offset="0.0000" stop-color="#00ff0e"/><stop offset="0.4602" stop-color="#00ff00"/><stop offset="1.0000" stop-color="#00ff00"/></linearGradient><linearGradient id="c18" gradientUnits="userSpaceOnUse" x1="1674.0" x2="1908.0" y1="0" y2="0"><stop offset="0.0000" stop-color="#00ff0f"/><stop offset="0.4701" stop-color="#00ff00"/><stop offset="1.0000" stop-color="#00ff00"/></linearGradient><linearGradient id="c19" gradientUnits="userSpaceOnUse" x1="1672.0" x2="1914.0" y1="0" y2="0"><stop offset="0.0000" stop-color="#00ff10"/><stop offset="0.4793" stop-color="#00ff00"/><stop offset="1.0000" stop-color="#00ff00"/></linearGradient><linearGradient id="c20" gradientUnits="userSpaceOnUse" x1="1670.0" x2="1918.0" y1="0" y2="0"><stop offset="0.0000" stop-color="#00ff11"/><stop offset="0.4919" stop-color="#00ff00"/><stop offset="1.0000" stop-color="#00ff00"/></linearGradient><linearGradient id="c21" gradientUnits="userSpaceOnUse" x1="1670.0" x2="1924.0" y1="0" y2="0"><stop offset="0.0000" stop-color="#00ff12"/><stop offset="0.5039" stop-color="#00ff00"/><stop offset="1.0000" stop-color="#00ff00"/></linearGradient><linearGradient id="c22" gradientUnits="userSpaceOnUse" x1="1668.0" x2="1928.0" y1="0" y2="0"><stop offset="0.0000" stop-color="#00ff14"/><stop offset="0.5154" stop-color="#00ff00"/><stop offset="1.0000" stop-color="#00ff00"/></linearGradient><linearGradient id="c23" gradientUnits="userSpaceOnUse" x1="1668.0" x2="1932.0" y1="0" y2="0"><stop offset="0.0000" stop-color="#00ff15"/><stop offset="0.5227" stop-color="#00ff00"/><stop offset="1.0000" stop-color="#00ff00"/></linearGradient><linearGradient id="c24" gradientUnits="userSpaceOnUse" x1="1668.0" x2="1938.0" y1="0" y2="0"><stop offset="0.0000" stop-color="#00ff15"/><stop offset="0.5259" stop-color="#00ff00"/><stop offset="1.0000" stop-color="#00ff00"/></linearGradient><linearGradient id="c25" gradientUnits="userSpaceOnUse" x1="1668.0" x2="1942.0" y1="0" y2="0"><stop offset="0.0000" stop-color="#00ff16"/><stop offset="0.5401" stop-color="#00ff00"/><stop offset="1.0000" stop-color="#00ff00"/></linearGradient><linearGradient id="c26" gradientUnits="userSpaceOnUse" x1="1668.0" x2="1946.0" y1="0" y2="0"><stop offset="0.0000" stop-color="#00ff17"/><stop offset="0.5468" stop-color="#00ff00"/><stop offset="1.0000" stop-color="#00ff00"/></linearGradient><linearGradient id="c27" gradientUnits="userSpaceOnUse" x1="1668.0" x2="1952.0" y1="0" y2="0"><stop offset="0.0000" stop-color="#00ff18"/><stop offset="0.5493" stop-color="#00ff00"/><stop offset="1.0000" stop-color="#00ff00"/></linearGradient><linearGradient id="c28" gradientUnits="userSpaceOnUse" x1="1668.0" x2="1956.0" y1="0" y2="0"><stop offset="0.0000" stop-color="#00ff19"/><stop offset="0.5625" stop-color="#00ff00"/><stop offset="1.0000" stop-color="#00ff00"/></linearGradient><linearGradient id="c29" gradientUnits="userSpaceOnUse" x1="1668.0" x2="1960.0" y1="0" y2="0"><stop offset="0.0000" stop-color="#00ff1a"/><stop offset="0.5685" stop-color="#00ff00"/><stop offset="1.0000" stop-color="#00ff00"/></linearGradient><linearGradient id="c30" gradientUnits="userSpaceOnUse" x1="1668.0" x2="1964.0" y1="0" y2="0"><stop offset="0.0000" stop-color="#00ff1b"/><stop offset="0.5743" stop-color="#00ff00"/><stop offset="1.0000" stop-color="#00ff00"/></linearGradient><linearGradient id="c31" gradientUnits="userSpaceOnUse" x1="1668.0" x2="1970.0" y1="0" y2="0"><stop offset="0.0000" stop-color="#00ff1c"/><stop offset="0.5828" stop-color="#00ff00"/><stop offset="1.0000" stop-color="#00ff00"/></linearGradient><linearGradient id="c32" gradientUnits="userSpaceOnUse" x1="1668.0" x2="1974.0" y1="0" y2="0"><stop offset="0.0000" stop-color="#00ff1d"/><stop offset="0.5882" stop-color="#00ff00"/><stop offset="1.0000" stop-color="#00ff00"/></linearGradient><linearGradient id="c33" gradientUnits="userSpaceOnUse" x1="1668.0" x2="1978.0" y1="0" y2="0"><stop offset="0.0000" stop-color="#00ff1e"/><stop offset="0.5935" stop-color="#00ff00"/><stop offset="1.0000" stop-color="#00ff00"/></linearGradient><linearGradient id="c34" gradientUnits="userSpaceOnUse" x1="1668.0" x2="1982.0" y1="0" y2="0"><stop offset="0.0000" stop-color="#00ff1f"/><stop offset="0.6051" stop-color="#00ff00"/><stop offset="1.0000" stop-color="#00ff00"/></linearGradient><linearGradient id="c35" gradientUnits="userSpaceOnUse" x1="1668.0" x2="1986.0" y1="0" y2="0"><stop offset="0.0000" stop-color="#00ff20"/><stop offset="0.6101" stop-color="#00ff00"/><stop offset="1.0000" stop-color="#00ff00"/></linearGradient><linearGradient id="c36" gradientUnits="userSpaceOnUse" x1="1668.0" x2="1990.0" y1="0" y2="0"><stop offset="0.0000" stop-color="#00ff21"/><stop offset="0.6149" stop-color="#00ff00"/><stop offset="1.0000" stop-color="#00ff00"/></linearGradient><linearGradient id="c37" gradientUnits="userSpaceOnUse" x1="1668.0" x2="1994.0" y1="0" y2="0"><stop offset="0.0000" stop-color="#00ff23"/><stop offset="0.6196" stop-color="#00ff00"/><stop offset="1.0000" stop-color="#00ff00"/></linearGradient><linearGradient id="c38" gradientUnits="userSpaceOnUse" x1="1668.0" x2="2000.0" y1="0" y2="0"><stop offset="0.0000" stop-color="#00ff24"/><stop offset="0.6265" stop-color="#00ff00"/><stop offset="1.0000" stop-color="#00ff00"/></linearGradient><linearGradient id="c39" gradientUnits="userSpaceOnUse" x1="1668.0" x2="2004.0" y1="0" y2="0"><stop offset="0.0000" stop-color="#00ff25"/><stop offset="0.6310" stop-color="#00ff00"/><stop offset="1.0000" stop-color="#00ff00"/></linearGradient><linearGradient id="c40" gradientUnits="userSpaceOnUse" x1="1668.0" x2="2008.0" y1="0" y2="0"><stop offset="0.0000" stop-color="#00ff26"/><stop offset="0.6412" stop-color="#00ff00"/><stop offset="1.0000" stop-color="#02ff00"/></linearGradient><linearGradient id="c41" gradientUnits="userSpaceOnUse" x1="1668.0" x2="2012.0" y1="0" y2="0"><stop offset="0.0000" stop-color="#00ff27"/><stop offset="0.6453" stop-color="#00ff00"/><stop offset="0.9884" stop-color="#03ff00"/><stop offset="1.0000" stop-color="#07ff00"/></linearGradient><linearGradient id="c42" gradientUnits="userSpaceOnUse" x1="1668.0" x2="2016.0" y1="0" y2="0"><stop offset="0.0000" stop-color="#00ff28"/><stop offset="0.6494" stop-color="#00ff00"/><stop offset="0.9713" stop-color="#02ff00"/><stop offset="1.0000" stop-color="#0cff00"/></linearGradient><linearGradient id="c43" gradientUnits="userSpaceOnUse" x1="1668.0" x2="2020.0" y1="0" y2="0"><stop offset="0.0000" stop-color="#00ff29"/><stop offset="0.6591" stop-color="#00ff00"/><stop offset="0.9602" stop-color="#03ff00"/><stop offset="1.0000" stop-color="#11ff00"/></linearGradient><linearGradient id="c44" gradientUnits="userSpaceOnUse" x1="1668.0" x2="2024.0" y1="0" y2="0"><stop offset="0.0000" stop-color="#00ff2a"/><stop offset="0.6629" stop-color="#00ff00"/><stop offset="0.9438" stop-color="#02ff00"/><stop offset="1.0000" stop-color="#16ff00"/></linearGradient><linearGradient id="c45" gradientUnits="userSpaceOnUse" x1="1668.0" x2="2028.0" y1="0" y2="0"><stop offset="0.0000" stop-color="#00ff2b"/><stop offset="0.6667" stop-color="#00ff00"/><stop offset="0.9278" stop-color="#01ff00"/><stop offset="1.0000" stop-color="#1bff00"/></linearGradient><linearGradient id="c46" gradientUnits="userSpaceOnUse" x1="1668.0" x2="2032.0" y1="0" y2="0"><stop offset="0.0000" stop-color="#00ff2d"/><stop offset="0.6758" stop-color="#00ff00"/><stop offset="0.9176" stop-color="#02ff00"/><stop offset="1.0000" stop-color="#21ff00"/></linearGradient><linearGradient id="c47" gradientUnits="userSpaceOnUse" x1="1668.0" x2="2036.0" y1="0" y2="0"><stop offset="0.0000" stop-color="#00ff2e"/><stop offset="0.6793" stop-color="#00ff00"/><stop offset="0.9022" stop-color="#01ff00"/><stop offset="1.0000" stop-color="#26ff00"/></linearGradient><linearGradient id="c48" gradientUnits="userSpaceOnUse" x1="1668.0" x2="2040.0" y1="0" y2="0"><stop offset="0.0000" stop-color="#00ff2f"/><stop offset="0.6882" stop-color="#00ff00"/><stop offset="0.8925" stop-color="#02ff00"/><stop offset="1.0000" stop-color="#2cff00"/></linearGradient><linearGradient id="c49" gradientUnits="userSpaceOnUse" x1="1668.0" x2="2044.0" y1="0" y2="0"><stop offset="0.0000" stop-color="#00ff30"/><stop offset="0.6915" stop-color="#00ff00"/><stop offset="0.8777" stop-color="#02ff00"/><stop offset="1.0000" stop-color="#32ff00"/></linearGradient><linearGradient id="c50" gradientUnits="userSpaceOnUse" x1="1668.0" x2="2048.0" y1="0" y2="0"><stop offset="0.0000" stop-color="#00ff31"/><stop offset="0.6947" stop-color="#00ff00"/><stop offset="0.8684" stop-color="#03ff00"/><stop offset="1.0000" stop-color="#38ff00"/></linearGradient><linearGradient id="c51" gradientUnits="userSpaceOnUse" x1="1668.0" x2="2052.0" y1="0" y2="0"><stop offset="0.0000" stop-color="#00ff33"/><stop offset="0.6979" stop-color="#00ff00"/><stop offset="0.8542" stop-color="#02ff00"/><stop offset="1.0000" stop-color="#3eff00"/></linearGradient><linearGradient id="c52" gradientUnits="userSpaceOnUse" x1="1668.0" x2="2056.0" y1="0" y2="0"><stop offset="0.0000" stop-color="#00ff34"/><stop offset="0.7062" stop-color="#00ff00"/><stop offset="0.8454" stop-color="#03ff00"/><stop offset="1.0000" stop-color="#44ff00"/></linearGradient><linearGradient id="c53" gradientUnits="userSpaceOnUse" x1="1668.0" x2="2060.0" y1="0" y2="0"><stop offset="0.0000" stop-color="#00ff35"/><stop offset="0.6582" stop-color="#00ff01"/><stop offset="0.8316" stop-color="#02ff00"/><stop offset="1.0000" stop-color="#4bff00"/></linearGradient><linearGradient id="c54" gradientUnits="userSpaceOnUse" x1="1668.0" x2="2064.0" y1="0" y2="0"><stop offset="0.0000" stop-color="#00ff37"/><stop offset="0.6465" stop-color="#00ff03"/><stop offset="0.8232" stop-color="#03ff00"/><stop offset="1.0000" stop-color="#51ff00"/></linearGradient><linearGradient id="c55" gradientUnits="userSpaceOnUse" x1="1668.0" x2="2068.0" y1="0" y2="0"><stop offset="0.0000" stop-color="#00ff38"/><stop offset="0.6400" stop-color="#00ff04"/><stop offset="0.7750" stop-color="#00ff00"/><stop offset="0.8100" stop-color="#02ff00"/><stop offset="1.0000" stop-color="#58ff00"/></linearGradient><linearGradient id="c56" gradientUnits="userSpaceOnUse" x1="1668.0" x2="2072.0" y1="0" y2="0"><stop offset="0.0000" stop-color="#00ff39"/><stop offset="0.6337" stop-color="#00ff06"/><stop offset="0.7475" stop-color="#00ff00"/><stop offset="0.8020" stop-color="#03ff00"/><stop offset="1.0000" stop-color="#5fff00"/></linearGradient><linearGradient id="c57" gradientUnits="userSpaceOnUse" x1="1668.0" x2="2076.0" y1="0" y2="0"><stop offset="0.0000" stop-color="#00ff3a"/><stop offset="0.6225" stop-color="#00ff08"/><stop offset="0.7402" stop-color="#00ff00"/><stop offset="0.7892" stop-color="#02ff00"/><stop offset="1.0000" stop-color="#66ff00"/></linearGradient><linearGradient id="c58" gradientUnits="userSpaceOnUse" x1="1668.0" x2="2080.0" y1="0" y2="0"><stop offset="0.0000" stop-color="#00ff3c"/><stop offset="0.6165" stop-color="#00ff09"/><stop offset="0.7379" stop-color="#00ff00"/><stop offset="0.7816" stop-color="#03ff00"/><stop offset="1.0000" stop-color="#6dff00"/></linearGradient><linearGradient id="c59" gradientUnits="userSpaceOnUse" x1="1668.0" x2="2084.0" y1="0" y2="0"><stop offset="0.0000" stop-color="#00ff3d"/><stop offset="0.6058" stop-color="#00ff0b"/><stop offset="0.7404" stop-color="#00ff00"/><stop offset="0.7740" stop-color="#05ff00"/><stop offset="0.9904" stop-color="#70ff00"/><stop offset="1.0000" stop-color="#75ff00"/></linearGradient><linearGradient id="c60" gradientUnits="userSpaceOnUse" x1="1668.0" x2="2088.0" y1="0" y2="0"><stop offset="0.0000" stop-color="#00ff3f"/><stop offset="0.6000" stop-color="#00ff0c"/><stop offset="0.7429" stop-color="#00ff00"/><stop offset="0.7762" stop-color="#0aff00"/><stop offset="0.9905" stop-color="#77ff00"/><stop offset="1.0000" stop-color="#7dff00"/></linearGradient><linearGradient id="c61" gradientUnits="userSpaceOnUse" x1="1668.0" x2="2092.0" y1="0" y2="0"><stop offset="0.0000" stop-color="#00ff40"/><stop offset="0.5943" stop-color="#00ff0d"/><stop offset="0.7453" stop-color="#00ff00"/><stop offset="0.9575" stop-color="#6cff00"/><stop offset="1.0000" stop-color="#85ff00"/></linearGradient><linearGradient id="c62" gradientUnits="userSpaceOnUse" x1="1668.0" x2="2096.0" y1="0" y2="0"><stop offset="0.0000" stop-color="#00ff41"/><stop offset="0.5841" stop-color="#00ff0f"/><stop offset="0.7383" stop-color="#02ff00"/><stop offset="0.9486" stop-color="#6eff00"/><stop offset="1.0000" stop-color="#8dff00"/></linearGradient><linearGradient id="c63" gradientUnits="userSpaceOnUse" x1="1668.0" x2="2100.0" y1="0" y2="0"><stop offset="0.0000" stop-color="#00ff43"/><stop offset="0.5787" stop-color="#00ff11"/><stop offset="0.7315" stop-color="#03ff00"/><stop offset="0.9352" stop-color="#6eff00"/><stop offset="1.0000" stop-color="#95ff00"/></linearGradient><linearGradient id="c64" gradientUnits="userSpaceOnUse" x1="1668.0" x2="2104.0" y1="0" y2="0"><stop offset="0.0000" stop-color="#00ff44"/><stop offset="0.5734" stop-color="#00ff12"/><stop offset="0.7202" stop-color="#02ff01"/><stop offset="0.9220" stop-color="#6dff00"/><stop offset="1.0000" stop-color="#9eff00"/></linearGradient><linearGradient id="c65" gradientUnits="userSpaceOnUse" x1="1668.0" x2="2108.0" y1="0" y2="0"><stop offset="0.0000" stop-color="#00ff46"/><stop offset="0.5636" stop-color="#00ff14"/><stop offset="0.7136" stop-color="#03ff02"/><stop offset="0.9136" stop-color="#70ff00"/><stop offset="1.0000" stop-color="#a7ff00"/></linearGradient><linearGradient id="c66" gradientUnits="userSpaceOnUse" x1="1668.0" x2="2112.0" y1="0" y2="0"><stop offset="0.0000" stop-color="#00ff47"/><stop offset="0.5586" stop-color="#00ff16"/><stop offset="0.7027" stop-color="#02ff04"/><stop offset="0.8153" stop-color="#3dff00"/><stop offset="0.9955" stop-color="#adff00"/><stop offset="1.0000" stop-color="#b0ff00"/></linearGradient><linearGradient id="c67" gradientUnits="userSpaceOnUse" x1="1668.0" x2="2116.0" y1="0" y2="0"><stop offset="0.0000" stop-color="#00ff49"/><stop offset="0.5536" stop-color="#00ff17"/><stop offset="0.6964" stop-color="#03ff06"/><stop offset="0.7857" stop-color="#32ff00"/><stop offset="0.9643" stop-color="#a1ff00"/><stop offset="1.0000" stop-color="#baff00"/></linearGradient><linearGradient id="c68" gradientUnits="userSpaceOnUse" x1="1668.0" x2="2118.0" y1="0" y2="0"><stop offset="0.0000" stop-color="#00ff4a"/><stop offset="0.5467" stop-color="#00ff19"/><stop offset="0.6889" stop-color="#02ff08"/><stop offset="0.7822" stop-color="#34ff00"/><stop offset="0.9600" stop-color="#a4ff00"/><stop offset="1.0000" stop-color="#c0ff00"/></linearGradient><linearGradient id="c69" gradientUnits="userSpaceOnUse" x1="1668.0" x2="2122.0" y1="0" y2="0"><stop offset="0.0000" stop-color="#00ff4c"/><stop offset="0.5419" stop-color="#00ff1b"/><stop offset="0.6784" stop-color="#01ff0a"/><stop offset="0.7797" stop-color="#38ff00"/><stop offset="0.9515" stop-color="#a7ff00"/><stop offset="1.0000" stop-color="#caff00"/></linearGradient><linearGradient id="c70" gradientUnits="userSpaceOnUse" x1="1668.0" x2="2126.0" y1="0" y2="0"><stop offset="0.0000" stop-color="#00ff4d"/><stop offset="0.5371" stop-color="#00ff1c"/><stop offset="0.6725" stop-color="#02ff0c"/><stop offset="0.7817" stop-color="#3fff00"/><stop offset="0.9520" stop-color="#b0ff00"/><stop offset="1.0000" stop-color="#d5ff00"/></linearGradient><linearGradient id="c71" gradientUnits="userSpaceOnUse" x1="1668.0" x2="2130.0" y1="0" y2="0"><stop offset="0.0000" stop-color="#00ff4f"/><stop offset="0.5325" stop-color="#00ff1e"/><stop offset="0.6623" stop-color="#01ff0e"/><stop offset="0.7835" stop-color="#47ff00"/><stop offset="0.9481" stop-color="#b7ff00"/><stop offset="1.0000" stop-color="#dfff00"/></linearGradient><linearGradient id="c72" gradientUnits="userSpaceOnUse" x1="1668.0" x2="2134.0" y1="0" y2="0"><stop offset="0.0000" stop-color="#00ff50"/><stop offset="0.5236" stop-color="#00ff20"/><stop offset="0.6567" stop-color="#02ff0f"/><stop offset="0.7897" stop-color="#51ff00"/><stop offset="0.9485" stop-color="#c1ff00"/><stop offset="1.0000" stop-color="#ebff00"/></linearGradient><linearGradient id="c73" gradientUnits="userSpaceOnUse" x1="1668.0" x2="2138.0" y1="0" y2="0"><stop offset="0.0000" stop-color="#00ff52"/><stop offset="0.5191" stop-color="#00ff22"/><stop offset="0.6468" stop-color="#01ff12"/><stop offset="0.7872" stop-color="#56ff00"/><stop offset="0.9447" stop-color="#c8ff00"/><stop offset="1.0000" stop-color="#f6ff00"/></linearGradient><linearGradient id="c74" gradientUnits="userSpaceOnUse" x1="1668.0" x2="2142.0" y1="0" y2="0"><stop offset="0.0000" stop-color="#00ff54"/><stop offset="0.5148" stop-color="#00ff24"/><stop offset="0.6414" stop-color="#03ff13"/><stop offset="0.7932" stop-color="#60ff00"/><stop offset="0.9451" stop-color="#d2ff00"/><stop offset="1.0000" stop-color="#fffc00"/></linearGradient><linearGradient id="c75" gradientUnits="userSpaceOnUse" x1="1668.0" x2="2146.0" y1="0" y2="0"><stop offset="0.0000" stop-color="#00ff55"/><stop offset="0.5063" stop-color="#00ff26"/><stop offset="0.6318" stop-color="#02ff16"/><stop offset="0.7950" stop-color="#68ff00"/><stop offset="0.9414" stop-color="#daff00"/><stop offset="0.9833" stop-color="#ffff00"/><stop offset="1.0000" stop-color="#fff100"/></linearGradient><linearGradient id="c76" gradientUnits="userSpaceOnUse" x1="1668.0" x2="2150.0" y1="0" y2="0"><stop offset="0.0000" stop-color="#00ff57"/><stop offset="0.5021" stop-color="#00ff28"/><stop offset="0.6266" stop-color="#03ff17"/><stop offset="0.7925" stop-color="#6eff00"/><stop offset="0.9336" stop-color="#deff00"/><stop offset="0.9710" stop-color="#ffff00"/><stop offset="1.0000" stop-color="#ffe600"/></linearGradient><linearGradient id="c77" gradientUnits="userSpaceOnUse" x1="1668.0" x2="2154.0" y1="0" y2="0"><stop offset="0.0000" stop-color="#00ff59"/><stop offset="0.4979" stop-color="#00ff29"/><stop offset="0.6173" stop-color="#02ff1a"/><stop offset="0.7819" stop-color="#6dff00"/><stop offset="0.9218" stop-color="#deff00"/><stop offset="0.9588" stop-color="#fffe00"/><stop offset="1.0000" stop-color="#ffdc00"/></linearGradient><linearGradient id="c78" gradientUnits="userSpaceOnUse" x1="1668.0" x2="2158.0" y1="0" y2="0"><stop offset="0.0000" stop-color="#00ff5a"/><stop offset="0.4939" stop-color="#00ff2b"/><stop offset="0.6122" stop-color="#03ff1b"/><stop offset="0.7755" stop-color="#70ff02"/><stop offset="0.9143" stop-color="#e2ff00"/><stop offset="0.9469" stop-color="#fffd00"/><stop offset="1.0000" stop-color="#ffd200"/></linearGradient><linearGradient id="c79" gradientUnits="userSpaceOnUse" x1="1668.0" x2="2162.0" y1="0" y2="0"><stop offset="0.0000" stop-color="#00ff5c"/><stop offset="0.4858" stop-color="#00ff2d"/><stop offset="0.6032" stop-color="#02ff1e"/><stop offset="0.7652" stop-color="#6fff04"/><stop offset="0.8543" stop-color="#b7ff00"/><stop offset="0.9352" stop-color="#fffd00"/><stop offset="1.0000" stop-color="#ffc900"/></linearGradient><linearGradient id="c80" gradientUnits="userSpaceOnUse" x1="1668.0" x2="2166.0" y1="0" y2="0"><stop offset="0.0000" stop-color="#00ff5e"/><stop offset="0.4819" stop-color="#00ff2f"/><stop offset="0.5944" stop-color="#01ff20"/><stop offset="0.7510" stop-color="#6cff07"/><stop offset="0.8193" stop-color="#a2ff00"/><stop offset="0.9237" stop-color="#fffc00"/><stop offset="0.9960" stop-color="#ffc300"/><stop offset="1.0000" stop-color="#ffc000"/></linearGradient><linearGradient id="c81" gradientUnits="userSpaceOnUse" x1="1668.0" x2="2170.0" y1="0" y2="0"><stop offset="0.0000" stop-color="#00ff60"/><stop offset="0.4781" stop-color="#00ff31"/><stop offset="0.5896" stop-color="#02ff22"/><stop offset="0.7450" stop-color="#6eff09"/><stop offset="0.8167" stop-color="#a9ff00"/><stop offset="0.9084" stop-color="#feff00"/><stop offset="0.9841" stop-color="#ffc200"/><stop offset="1.0000" stop-color="#ffb800"/></linearGradient><linearGradient id="c82" gradientUnits="userSpaceOnUse" x1="1668.0" x2="2174.0" y1="0" y2="0"><stop offset="0.0000" stop-color="#00ff61"/><stop offset="0.4743" stop-color="#00ff33"/><stop offset="0.5810" stop-color="#01ff25"/><stop offset="0.7352" stop-color="#6eff0c"/><stop offset="0.8182" stop-color="#b4ff00"/><stop offset="0.8972" stop-color="#ffff00"/><stop offset="0.9684" stop-color="#ffc400"/><stop offset="1.0000" stop-color="#ffb000"/></linearGradient><linearGradient id="c83" gradientUnits="userSpaceOnUse" x1="1668.0" x2="2178.0" y1="0" y2="0"><stop offset="0.0000" stop-color="#00ff63"/><stop offset="0.4667" stop-color="#00ff36"/><stop offset="0.5765" stop-color="#02ff27"/><stop offset="0.7255" stop-color="#6dff0f"/><stop offset="0.8196" stop-color="#beff00"/><stop offset="0.8863" stop-color="#fffe00"/><stop offset="0.9529" stop-color="#ffc600"/><stop offset="1.0000" stop-color="#ffa800"/></linearGradient><linearGradient id="c84" gradientUnits="userSpaceOnUse" x1="1668.0" x2="2180.0" y1="0" y2="0"><stop offset="0.0000" stop-color="#00ff65"/><stop offset="0.4648" stop-color="#00ff38"/><stop offset="0.5703" stop-color="#01ff29"/><stop offset="0.7188" stop-color="#6dff11"/><stop offset="0.8242" stop-color="#caff00"/><stop offset="0.8789" stop-color="#fffe00"/><stop offset="0.9453" stop-color="#ffc500"/><stop offset="1.0000" stop-color="#ffa300"/></linearGradient><linearGradient id="c85" gradientUnits="userSpaceOnUse" x1="1668.0" x2="2184.0" y1="0" y2="0"><stop offset="0.0000" stop-color="#00ff67"/><stop offset="0.4612" stop-color="#00ff3a"/><stop offset="0.5659" stop-color="#03ff2b"/><stop offset="0.7132" stop-color="#70ff13"/><stop offset="0.8256" stop-color="#d5ff00"/><stop offset="0.8682" stop-color="#fffd00"/><stop offset="0.9341" stop-color="#ffc400"/><stop offset="1.0000" stop-color="#ff9c00"/></linearGradient><linearGradient id="c86" gradientUnits="userSpaceOnUse" x1="1668.0" x2="2188.0" y1="0" y2="0"><stop offset="0.0000" stop-color="#00ff69"/><stop offset="0.4577" stop-color="#00ff3c"/><stop offset="0.5577" stop-color="#01ff2e"/><stop offset="0.7000" stop-color="#6cff17"/><stop offset="0.8231" stop-color="#ddff00"/><stop offset="0.8577" stop-color="#fffc00"/><stop offset="0.9231" stop-color="#ffc300"/><stop offset="1.0000" stop-color="#ff9500"/></linearGradient><linearGradient id="c87" gradientUnits="userSpaceOnUse" x1="1668.0" x2="2192.0" y1="0" y2="0"><stop offset="0.0000" stop-color="#00ff6b"/><stop offset="0.4542" stop-color="#00ff3e"/><stop offset="0.5534" stop-color="#03ff30"/><stop offset="0.6947" stop-color="#6fff19"/><stop offset="0.8168" stop-color="#e2ff00"/><stop offset="0.8435" stop-color="#feff00"/><stop offset="0.9122" stop-color="#ffc200"/><stop offset="1.0000" stop-color="#ff8f00"/></linearGradient><linearGradient id="c88" gradientUnits="userSpaceOnUse" x1="1668.0" x2="2196.0" y1="0" y2="0"><stop offset="0.0000" stop-color="#00ff6d"/><stop offset="0.4470" stop-color="#00ff41"/><stop offset="0.5455" stop-color="#02ff33"/><stop offset="0.6856" stop-color="#6eff1c"/><stop offset="0.8030" stop-color="#deff04"/><stop offset="0.8333" stop-color="#ffff00"/><stop offset="0.8977" stop-color="#ffc400"/><stop offset="0.9848" stop-color="#ff9000"/><stop offset="1.0000" stop-color="#ff8900"/></linearGradient><linearGradient id="c89" gradientUnits="userSpaceOnUse" x1="1668.0" x2="2200.0" y1="0" y2="0"><stop offset="0.0000" stop-color="#00ff6f"/><stop offset="0.4436" stop-color="#00ff43"/><stop offset="0.5414" stop-color="#03ff35"/><stop offset="0.6767" stop-color="#6dff1f"/><stop offset="0.7932" stop-color="#deff07"/><stop offset="0.8233" stop-color="#fffe00"/><stop offset="0.8872" stop-color="#ffc300"/><stop offset="0.9737" stop-color="#ff8f00"/><stop offset="1.0000" stop-color="#ff8300"/></linearGradient><linearGradient id="c90" gradientUnits="userSpaceOnUse" x1="1668.0" x2="2204.0" y1="0" y2="0"><stop offset="0.0000" stop-color="#00ff71"/><stop offset="0.4403" stop-color="#00ff45"/><stop offset="0.5336" stop-color="#02ff38"/><stop offset="0.6679" stop-color="#6dff22"/><stop offset="0.7836" stop-color="#dfff0a"/><stop offset="0.8134" stop-color="#fffe03"/><stop offset="0.8769" stop-color="#ffc200"/><stop offset="0.9627" stop-color="#ff8e00"/><stop offset="1.0000" stop-color="#ff7d00"/></linearGradient><linearGradient id="c91" gradientUnits="userSpaceOnUse" x1="1668.0" x2="2208.0" y1="0" y2="0"><stop offset="0.0000" stop-color="#00ff73"/><stop offset="0.4370" stop-color="#00ff47"/><stop offset="0.5296" stop-color="#03ff3a"/><stop offset="0.6630" stop-color="#70ff24"/><stop offset="0.7741" stop-color="#dfff0d"/><stop offset="0.8037" stop-color="#fffd06"/><stop offset="0.8519" stop-color="#ffcd00"/><stop offset="0.9296" stop-color="#ff9900"/><stop offset="1.0000" stop-color="#ff7800"/></linearGradient><linearGradient id="c92" gradientUnits="userSpaceOnUse" x1="1668.0" x2="2212.0" y1="0" y2="0"><stop offset="0.0000" stop-color="#00ff75"/><stop offset="0.4338" stop-color="#00ff4a"/><stop offset="0.5221" stop-color="#02ff3d"/><stop offset="0.6544" stop-color="#6fff27"/><stop offset="0.7647" stop-color="#e0ff10"/><stop offset="0.7941" stop-color="#fffc09"/><stop offset="0.8456" stop-color="#ffca00"/><stop offset="0.9265" stop-color="#ff9400"/><stop offset="1.0000" stop-color="#ff7300"/></linearGradient><linearGradient id="c93" gradientUnits="userSpaceOnUse" x1="1668.0" x2="2216.0" y1="0" y2="0"><stop offset="0.0000" stop-color="#00ff77"/><stop offset="0.4307" stop-color="#00ff4c"/><stop offset="0.5146" stop-color="#01ff40"/><stop offset="0.6423" stop-color="#6bff2b"/><stop offset="0.7518" stop-color="#dcff14"/><stop offset="0.7810" stop-color="#feff0d"/><stop offset="0.8431" stop-color="#ffc300"/><stop offset="0.9234" stop-color="#ff8f00"/><stop offset="1.0000" stop-color="#ff6e00"/></linearGradient><linearGradient id="c94" gradientUnits="userSpaceOnUse" x1="1668.0" x2="2220.0" y1="0" y2="0"><stop offset="0.0000" stop-color="#00ff79"/><stop offset="0.4275" stop-color="#00ff4e"/><stop offset="0.5109" stop-color="#02ff43"/><stop offset="0.6377" stop-color="#6eff2d"/><stop offset="0.7464" stop-color="#e1ff17"/><stop offset="0.7717" stop-color="#ffff11"/><stop offset="0.8297" stop-color="#ffc501"/><stop offset="0.9094" stop-color="#ff9000"/><stop offset="1.0000" stop-color="#ff6900"/></linearGradient><linearGradient id="c95" gradientUnits="userSpaceOnUse" x1="1668.0" x2="2224.0" y1="0" y2="0"><stop offset="0.0000" stop-color="#00ff7b"/><stop offset="0.4245" stop-color="#00ff51"/><stop offset="0.5036" stop-color="#01ff46"/><stop offset="0.6295" stop-color="#6eff30"/><stop offset="0.7374" stop-color="#e1ff1a"/><stop offset="0.7626" stop-color="#fffe14"/><stop offset="0.8201" stop-color="#ffc404"/><stop offset="0.8993" stop-color="#ff8f00"/><stop offset="1.0000" stop-color="#ff6400"/></linearGradient><linearGradient id="c96" gradientUnits="userSpaceOnUse" x1="1670.0" x2="2228.0" y1="0" y2="0"><stop offset="0.0000" stop-color="#00ff7d"/><stop offset="0.4194" stop-color="#00ff53"/><stop offset="0.4982" stop-color="#02ff48"/><stop offset="0.6201" stop-color="#6dff34"/><stop offset="0.7240" stop-color="#ddff1e"/><stop offset="0.7527" stop-color="#fffe18"/><stop offset="0.8100" stop-color="#ffc307"/><stop offset="0.8674" stop-color="#ff9a00"/><stop offset="0.9713" stop-color="#ff6a00"/><stop offset="1.0000" stop-color="#ff6000"/></linearGradient><linearGradient id="c97" gradientUnits="userSpaceOnUse" x1="1670.0" x2="2232.0" y1="0" y2="0"><stop offset="0.0000" stop-color="#00ff7f"/><stop offset="0.4164" stop-color="#00ff56"/><stop offset="0.4911" stop-color="#01ff4b"/><stop offset="0.6121" stop-color="#6dff37"/><stop offset="0.7153" stop-color="#ddff22"/><stop offset="0.7438" stop-color="#fffd1b"/><stop offset="0.8007" stop-color="#ffc209"/><stop offset="0.8612" stop-color="#ff9700"/><stop offset="0.9644" stop-color="#ff6700"/><stop offset="1.0000" stop-color="#ff5b00"/></linearGradient><linearGradient id="c98" gradientUnits="userSpaceOnUse" x1="1670.0" x2="2234.0" y1="0" y2="0"><stop offset="0.0000" stop-color="#00ff81"/><stop offset="0.4149" stop-color="#00ff58"/><stop offset="0.4894" stop-color="#03ff4e"/><stop offset="0.6099" stop-color="#6fff3a"/><stop offset="0.7128" stop-color="#e2ff25"/><stop offset="0.7376" stop-color="#fffc1e"/><stop offset="0.7943" stop-color="#ffc10c"/><stop offset="0.8652" stop-color="#ff9000"/><stop offset="0.9716" stop-color="#ff6100"/><stop offset="1.0000" stop-color="#ff5800"/></linearGradient><linearGradient id="c99" gradientUnits="userSpaceOnUse" x1="1670.0" x2="2238.0" y1="0" y2="0"><stop offset="0.0000" stop-color="#00ff84"/><stop offset="0.4120" stop-color="#00ff5b"/><stop offset="0.4824" stop-color="#01ff51"/><stop offset="0.5986" stop-color="#6bff3e"/><stop offset="0.7007" stop-color="#deff29"/><stop offset="0.7254" stop-color="#feff23"/><stop offset="0.7852" stop-color="#ffc00f"/><stop offset="0.8627" stop-color="#ff8b00"/><stop offset="0.9718" stop-color="#ff5d00"/><stop offset="1.0000" stop-color="#ff5400"/></linearGradient><linearGradient id="c100" gradientUnits="userSpaceOnUse" x1="1670.0" x2="2242.0" y1="0" y2="0"><stop offset="0.0000" stop-color="#00ff86"/><stop offset="0.4091" stop-color="#00ff5e"/><stop offset="0.4790" stop-color="#03ff54"/><stop offset="0.5944" stop-color="#6eff41"/><stop offset="0.6923" stop-color="#dfff2d"/><stop offset="0.7168" stop-color="#ffff27"/><stop offset="0.7692" stop-color="#ffc514"/><stop offset="0.8427" stop-color="#ff9002"/><stop offset="0.9476" stop-color="#ff6100"/><stop offset="1.0000" stop-color="#ff5000"/></linearGradient><linearGradient id="c101" gradientUnits="userSpaceOnUse" x1="1672.0" x2="2246.0" y1="0" y2="0"><stop offset="0.0000" stop-color="#00ff88"/><stop offset="0.4077" stop-color="#00ff60"/><stop offset="0.4704" stop-color="#02ff57"/><stop offset="0.5854" stop-color="#6eff44"/><stop offset="0.6829" stop-color="#dfff30"/><stop offset="0.7073" stop-color="#ffff2b"/><stop offset="0.7596" stop-color="#ffc417"/><stop offset="0.8328" stop-color="#ff8f04"/><stop offset="0.9059" stop-color="#ff6c00"/><stop offset="1.0000" stop-color="#ff4c00"/></linearGradient><linearGradient id="c102" gradientUnits="userSpaceOnUse" x1="1672.0" x2="2250.0" y1="0" y2="0"><stop offset="0.0000" stop-color="#00ff8b"/><stop offset="0.4048" stop-color="#00ff63"/><stop offset="0.4671" stop-color="#03ff5a"/><stop offset="0.5779" stop-color="#6dff48"/><stop offset="0.6747" stop-color="#e0ff34"/><stop offset="0.6990" stop-color="#fffe2e"/><stop offset="0.7509" stop-color="#ffc31a"/><stop offset="0.8201" stop-color="#ff9007"/><stop offset="0.8858" stop-color="#ff6f00"/><stop offset="1.0000" stop-color="#ff4900"/></linearGradient><linearGradient id="c103" gradientUnits="userSpaceOnUse" x1="1672.0" x2="2254.0" y1="0" y2="0"><stop offset="0.0000" stop-color="#00ff8d"/><stop offset="0.4021" stop-color="#00ff66"/><stop offset="0.4605" stop-color="#02ff5e"/><stop offset="0.5704" stop-color="#6dff4c"/><stop offset="0.6632" stop-color="#dcff39"/><stop offset="0.6907" stop-color="#fffd32"/><stop offset="0.7423" stop-color="#ffc31d"/><stop offset="0.8110" stop-color="#ff8f0a"/><stop offset="0.8832" stop-color="#ff6b00"/><stop offset="1.0000" stop-color="#ff4500"/></linearGradient><linearGradient id="c104" gradientUnits="userSpaceOnUse" x1="1672.0" x2="2258.0" y1="0" y2="0"><stop offset="0.0000" stop-color="#00ff90"/><stop offset="0.3993" stop-color="#00ff69"/><stop offset="0.4573" stop-color="#03ff61"/><stop offset="0.5666" stop-color="#70ff4f"/><stop offset="0.6587" stop-color="#e1ff3c"/><stop offset="0.6826" stop-color="#fffc36"/><stop offset="0.7338" stop-color="#ffc220"/><stop offset="0.8020" stop-color="#ff8e0c"/><stop offset="0.8840" stop-color="#ff6600"/><stop offset="1.0000" stop-color="#ff4200"/></linearGradient><linearGradient id="c105" gradientUnits="userSpaceOnUse" x1="1674.0" x2="2262.0" y1="0" y2="0"><stop offset="0.0000" stop-color="#00ff92"/><stop offset="0.3980" stop-color="#00ff6b"/><stop offset="0.4490" stop-color="#02ff64"/><stop offset="0.5578" stop-color="#6fff53"/><stop offset="0.6497" stop-color="#e1ff40"/><stop offset="0.6701" stop-color="#feff3c"/><stop offset="0.7245" stop-color="#ffc123"/><stop offset="0.7925" stop-color="#ff8d0e"/><stop offset="0.8844" stop-color="#ff6100"/><stop offset="1.0000" stop-color="#ff3e00"/></linearGradient><linearGradient id="c106" gradientUnits="userSpaceOnUse" x1="1674.0" x2="2266.0" y1="0" y2="0"><stop offset="0.0000" stop-color="#00ff94"/><stop offset="0.3953" stop-color="#00ff6e"/><stop offset="0.4426" stop-color="#01ff68"/><stop offset="0.5473" stop-color="#6bff57"/><stop offset="0.6385" stop-color="#ddff45"/><stop offset="0.6622" stop-color="#ffff40"/><stop offset="0.7128" stop-color="#ffc327"/><stop offset="0.7804" stop-color="#ff8e12"/><stop offset="0.8750" stop-color="#ff6000"/><stop offset="1.0000" stop-color="#ff3b00"/></linearGradient><linearGradient id="c107" gradientUnits="userSpaceOnUse" x1="1674.0" x2="2270.0" y1="0" y2="0"><stop offset="0.0000" stop-color="#00ff97"/><stop offset="0.3926" stop-color="#00ff71"/><stop offset="0.4396" stop-color="#02ff6b"/><stop offset="0.5436" stop-color="#6eff5a"/><stop offset="0.6309" stop-color="#ddff49"/><stop offset="0.6544" stop-color="#ffff44"/><stop offset="0.7013" stop-color="#ffc52c"/><stop offset="0.7651" stop-color="#ff9116"/><stop offset="0.8557" stop-color="#ff6302"/><stop offset="0.9933" stop-color="#ff3900"/><stop offset="1.0000" stop-color="#ff3800"/></linearGradient><linearGradient id="c108" gradientUnits="userSpaceOnUse" x1="1674.0" x2="2274.0" y1="0" y2="0"><stop offset="0.0000" stop-color="#00ff9a"/><stop offset="0.3933" stop-color="#00ff74"/><stop offset="0.4333" stop-color="#01ff6f"/><stop offset="0.5367" stop-color="#6dff5e"/><stop offset="0.6233" stop-color="#deff4e"/><stop offset="0.6467" stop-color="#fffe48"/><stop offset="0.6933" stop-color="#ffc42f"/><stop offset="0.7567" stop-color="#ff9018"/><stop offset="0.8467" stop-color="#ff6204"/><stop offset="0.9367" stop-color="#ff4400"/><stop offset="1.0000" stop-color="#ff3500"/></linearGradient><linearGradient id="c109" gradientUnits="userSpaceOnUse" x1="1676.0" x2="2278.0" y1="0" y2="0"><stop offset="0.0000" stop-color="#00ff9c"/><stop offset="0.3920" stop-color="#00ff77"/><stop offset="0.4286" stop-color="#02ff72"/><stop offset="0.5282" stop-color="#6dff63"/><stop offset="0.6146" stop-color="#deff52"/><stop offset="0.6379" stop-color="#fffd4c"/><stop offset="0.6844" stop-color="#ffc332"/><stop offset="0.7475" stop-color="#ff8f1b"/><stop offset="0.8372" stop-color="#ff6106"/><stop offset="0.9103" stop-color="#ff4800"/><stop offset="1.0000" stop-color="#ff3200"/></linearGradient><linearGradient id="c110" gradientUnits="userSpaceOnUse" x1="1676.0" x2="2282.0" y1="0" y2="0"><stop offset="0.0000" stop-color="#00ff9f"/><stop offset="0.3894" stop-color="#00ff7a"/><stop offset="0.4224" stop-color="#01ff76"/><stop offset="0.5215" stop-color="#6cff67"/><stop offset="0.6073" stop-color="#dfff56"/><stop offset="0.6304" stop-color="#fffc50"/><stop offset="0.6766" stop-color="#ffc236"/><stop offset="0.7393" stop-color="#ff8e1d"/><stop offset="0.8284" stop-color="#ff6008"/><stop offset="0.9043" stop-color="#ff4600"/><stop offset="1.0000" stop-color="#ff2f00"/></linearGradient><linearGradient id="c111" gradientUnits="userSpaceOnUse" x1="1676.0" x2="2286.0" y1="0" y2="0"><stop offset="0.0000" stop-color="#00ffa2"/><stop offset="0.3869" stop-color="#00ff7e"/><stop offset="0.4197" stop-color="#03ff79"/><stop offset="0.5180" stop-color="#6fff6a"/><stop offset="0.6000" stop-color="#dfff5b"/><stop offset="0.6197" stop-color="#fdff57"/><stop offset="0.6689" stop-color="#ffc139"/><stop offset="0.7311" stop-color="#ff8d20"/><stop offset="0.8197" stop-color="#ff5f0a"/><stop offset="0.9016" stop-color="#ff4300"/><stop offset="1.0000" stop-color="#ff2c00"/></linearGradient><linearGradient id="c112" gradientUnits="userSpaceOnUse" x1="1676.0" x2="2288.0" y1="0" y2="0"><stop offset="0.0000" stop-color="#00ffa4"/><stop offset="0.3889" stop-color="#00ff81"/><stop offset="0.4150" stop-color="#01ff7e"/><stop offset="0.5098" stop-color="#6bff6f"/><stop offset="0.5915" stop-color="#dbff60"/><stop offset="0.6144" stop-color="#feff5b"/><stop offset="0.6601" stop-color="#ffc33e"/><stop offset="0.7222" stop-color="#ff8e24"/><stop offset="0.8105" stop-color="#ff5f0d"/><stop offset="0.9052" stop-color="#ff4000"/><stop offset="1.0000" stop-color="#ff2a00"/></linearGradient><linearGradient id="c113" gradientUnits="userSpaceOnUse" x1="1678.0" x2="2292.0" y1="0" y2="0"><stop offset="0.0000" stop-color="#00ffa7"/><stop offset="0.3876" stop-color="#00ff84"/><stop offset="0.4104" stop-color="#03ff81"/><stop offset="0.5049" stop-color="#6eff73"/><stop offset="0.5863" stop-color="#e0ff64"/><stop offset="0.6059" stop-color="#ffff60"/><stop offset="0.6482" stop-color="#ffc643"/><stop offset="0.7068" stop-color="#ff9229"/><stop offset="0.7915" stop-color="#ff6211"/><stop offset="0.9055" stop-color="#ff3c00"/><stop offset="1.0000" stop-color="#ff2800"/></linearGradient><linearGradient id="c114" gradientUnits="userSpaceOnUse" x1="1678.0" x2="2296.0" y1="0" y2="0"><stop offset="0.0000" stop-color="#00ffaa"/><stop offset="0.3883" stop-color="#00ff87"/><stop offset="0.4045" stop-color="#02ff85"/><stop offset="0.4984" stop-color="#6dff78"/><stop offset="0.5793" stop-color="#e1ff69"/><stop offset="0.5987" stop-color="#fffe65"/><stop offset="0.6408" stop-color="#ffc547"/><stop offset="0.6990" stop-color="#ff912b"/><stop offset="0.7832" stop-color="#ff6113"/><stop offset="0.9061" stop-color="#ff3900"/><stop offset="1.0000" stop-color="#ff2500"/></linearGradient><linearGradient id="c115" gradientUnits="userSpaceOnUse" x1="1678.0" x2="2300.0" y1="0" y2="0"><stop offset="0.0000" stop-color="#00ffad"/><stop offset="0.3859" stop-color="#00ff8b"/><stop offset="0.4019" stop-color="#03ff89"/><stop offset="0.4920" stop-color="#6dff7c"/><stop offset="0.5691" stop-color="#dcff6f"/><stop offset="0.5916" stop-color="#fffd69"/><stop offset="0.6334" stop-color="#ffc44b"/><stop offset="0.6913" stop-color="#ff8f2e"/><stop offset="0.7749" stop-color="#ff6015"/><stop offset="0.9003" stop-color="#ff3700"/><stop offset="1.0000" stop-color="#ff2200"/></linearGradient><linearGradient id="c116" gradientUnits="userSpaceOnUse" x1="1678.0" x2="2304.0" y1="0" y2="0"><stop offset="0.0000" stop-color="#00ffb0"/><stop offset="0.3866" stop-color="#00ff8f"/><stop offset="0.3994" stop-color="#05ff8d"/><stop offset="0.4888" stop-color="#70ff81"/><stop offset="0.5655" stop-color="#e2ff73"/><stop offset="0.5847" stop-color="#fffc6e"/><stop offset="0.6262" stop-color="#ffc34e"/><stop offset="0.6837" stop-color="#ff8e31"/><stop offset="0.7668" stop-color="#ff5f17"/><stop offset="0.8914" stop-color="#ff3600"/><stop offset="1.0000" stop-color="#ff2000"/></linearGradient><linearGradient id="c117" gradientUnits="userSpaceOnUse" x1="1680.0" x2="2308.0" y1="0" y2="0"><stop offset="0.0000" stop-color="#00ffb3"/><stop offset="0.3854" stop-color="#00ff92"/><stop offset="0.4140" stop-color="#1dff8f"/><stop offset="0.5000" stop-color="#8aff82"/><stop offset="0.5732" stop-color="#fdff75"/><stop offset="0.6210" stop-color="#ffbe50"/><stop offset="0.6783" stop-color="#ff8b33"/><stop offset="0.7611" stop-color="#ff5d18"/><stop offset="0.8854" stop-color="#ff3401"/><stop offset="1.0000" stop-color="#ff1e00"/></linearGradient><linearGradient id="c118" gradientUnits="userSpaceOnUse" x1="1680.0" x2="2312.0" y1="0" y2="0"><stop offset="0.0000" stop-color="#00ffb6"/><stop offset="0.3861" stop-color="#02ff96"/><stop offset="0.4747" stop-color="#6fff8a"/><stop offset="0.5475" stop-color="#ddff7e"/><stop offset="0.5665" stop-color="#feff7b"/><stop offset="0.6108" stop-color="#ffc056"/><stop offset="0.6677" stop-color="#ff8c37"/><stop offset="0.7500" stop-color="#ff5d1b"/><stop offset="0.8734" stop-color="#ff3403"/><stop offset="1.0000" stop-color="#ff1b00"/></linearGradient><linearGradient id="c119" gradientUnits="userSpaceOnUse" x1="1680.0" x2="2316.0" y1="0" y2="0"><stop offset="0.0000" stop-color="#00ffb9"/><stop offset="0.3805" stop-color="#00ff9b"/><stop offset="0.4654" stop-color="#6aff90"/><stop offset="0.5377" stop-color="#d9ff84"/><stop offset="0.5597" stop-color="#ffff80"/><stop offset="0.5975" stop-color="#ffc75e"/><stop offset="0.6509" stop-color="#ff923e"/><stop offset="0.7264" stop-color="#ff6322"/><stop offset="0.8396" stop-color="#ff3a09"/><stop offset="0.9277" stop-color="#ff2500"/><stop offset="1.0000" stop-color="#ff1900"/></linearGradient><linearGradient id="c120" gradientUnits="userSpaceOnUse" x1="1682.0" x2="2320.0" y1="0" y2="0"><stop offset="0.0000" stop-color="#00ffbc"/><stop offset="0.3762" stop-color="#02ff9f"/><stop offset="0.4608" stop-color="#6eff94"/><stop offset="0.5329" stop-color="#deff89"/><stop offset="0.5517" stop-color="#fffe86"/><stop offset="0.5893" stop-color="#ffc662"/><stop offset="0.6426" stop-color="#ff9141"/><stop offset="0.7179" stop-color="#ff6224"/><stop offset="0.8307" stop-color="#ff390a"/><stop offset="0.9279" stop-color="#ff2300"/><stop offset="1.0000" stop-color="#ff1700"/></linearGradient><linearGradient id="c121" gradientUnits="userSpaceOnUse" x1="1682.0" x2="2324.0" y1="0" y2="0"><stop offset="0.0000" stop-color="#00ffc0"/><stop offset="0.3707" stop-color="#01ffa4"/><stop offset="0.4548" stop-color="#6dff9a"/><stop offset="0.5265" stop-color="#dfff8f"/><stop offset="0.5452" stop-color="#fffd8b"/><stop offset="0.5826" stop-color="#ffc466"/><stop offset="0.6355" stop-color="#ff9044"/><stop offset="0.7103" stop-color="#ff6126"/><stop offset="0.8224" stop-color="#ff380c"/><stop offset="0.9252" stop-color="#ff2100"/><stop offset="1.0000" stop-color="#ff1500"/></linearGradient><linearGradient id="c122" gradientUnits="userSpaceOnUse" x1="1684.0" x2="2328.0" y1="0" y2="0"><stop offset="0.0000" stop-color="#00ffc3"/><stop offset="0.3665" stop-color="#03ffa8"/><stop offset="0.4472" stop-color="#6cff9f"/><stop offset="0.5186" stop-color="#dfff95"/><stop offset="0.5373" stop-color="#fffc90"/><stop offset="0.5745" stop-color="#ffc36a"/><stop offset="0.6273" stop-color="#ff8e47"/><stop offset="0.7019" stop-color="#ff6029"/><stop offset="0.8137" stop-color="#ff370d"/><stop offset="0.9255" stop-color="#ff1e00"/><stop offset="1.0000" stop-color="#ff1200"/></linearGradient><linearGradient id="c123" gradientUnits="userSpaceOnUse" x1="1684.0" x2="2332.0" y1="0" y2="0"><stop offset="0.0000" stop-color="#00ffc6"/><stop offset="0.3611" stop-color="#01ffad"/><stop offset="0.4414" stop-color="#6bffa4"/><stop offset="0.5093" stop-color="#daff9b"/><stop offset="0.5278" stop-color="#fdff98"/><stop offset="0.5710" stop-color="#ffbe6c"/><stop offset="0.6235" stop-color="#ff8b49"/><stop offset="0.6975" stop-color="#ff5d2a"/><stop offset="0.8117" stop-color="#ff340e"/><stop offset="0.9290" stop-color="#ff1b00"/><stop offset="1.0000" stop-color="#ff1000"/></linearGradient><linearGradient id="c124" gradientUnits="userSpaceOnUse" x1="1684.0" x2="2336.0" y1="0" y2="0"><stop offset="0.0000" stop-color="#00ffca"/><stop offset="0.3589" stop-color="#03ffb2"/><stop offset="0.4387" stop-color="#6fffaa"/><stop offset="0.5061" stop-color="#e1ffa1"/><stop offset="0.5215" stop-color="#feff9f"/><stop offset="0.5613" stop-color="#ffc173"/><stop offset="0.6104" stop-color="#ff8e50"/><stop offset="0.6810" stop-color="#ff602f"/><stop offset="0.7883" stop-color="#ff3713"/><stop offset="0.9264" stop-color="#ff1900"/><stop offset="1.0000" stop-color="#ff0e00"/></linearGradient><linearGradient id="c125" gradientUnits="userSpaceOnUse" x1="1686.0" x2="2338.0" y1="0" y2="0"><stop offset="0.0000" stop-color="#00ffcd"/><stop offset="0.3528" stop-color="#01ffb7"/><stop offset="0.4325" stop-color="#6fffaf"/><stop offset="0.5000" stop-color="#e1ffa7"/><stop offset="0.5153" stop-color="#ffffa5"/><stop offset="0.5521" stop-color="#ffc47a"/><stop offset="0.6012" stop-color="#ff9055"/><stop offset="0.6718" stop-color="#ff6133"/><stop offset="0.7761" stop-color="#ff3816"/><stop offset="0.9264" stop-color="#ff1700"/><stop offset="1.0000" stop-color="#ff0d00"/></linearGradient><linearGradient id="c126" gradientUnits="userSpaceOnUse" x1="1686.0" x2="2342.0" y1="0" y2="0"><stop offset="0.0000" stop-color="#00ffd1"/><stop offset="0.3476" stop-color="#00ffbd"/><stop offset="0.4207" stop-color="#64ffb6"/><stop offset="0.4878" stop-color="#d6ffae"/><stop offset="0.5091" stop-color="#fffeab"/><stop offset="0.5427" stop-color="#ffc782"/><stop offset="0.5915" stop-color="#ff915a"/><stop offset="0.6585" stop-color="#ff6338"/><stop offset="0.7591" stop-color="#ff3a19"/><stop offset="0.9207" stop-color="#ff1600"/><stop offset="1.0000" stop-color="#ff0b00"/></linearGradient><linearGradient id="c127" gradientUnits="userSpaceOnUse" x1="1686.0" x2="2346.0" y1="0" y2="0"><stop offset="0.0000" stop-color="#00ffd5"/><stop offset="0.3455" stop-color="#01ffc2"/><stop offset="0.4212" stop-color="#6dffbb"/><stop offset="0.4848" stop-color="#dcffb4"/><stop offset="0.5030" stop-color="#fffdb1"/><stop offset="0.5364" stop-color="#ffc586"/><stop offset="0.5818" stop-color="#ff9260"/><stop offset="0.6485" stop-color="#ff633c"/><stop offset="0.7485" stop-color="#ff3a1c"/><stop offset="0.9061" stop-color="#ff1601"/><stop offset="1.0000" stop-color="#ff0900"/></linearGradient><linearGradient id="c128" gradientUnits="userSpaceOnUse" x1="1688.0" x2="2350.0" y1="0" y2="0"><stop offset="0.0000" stop-color="#00ffd8"/><stop offset="0.3384" stop-color="#00ffc8"/><stop offset="0.4109" stop-color="#68ffc2"/><stop offset="0.4743" stop-color="#d7ffbb"/><stop offset="0.4955" stop-color="#fffcb7"/><stop offset="0.5287" stop-color="#ffc48b"/><stop offset="0.5740" stop-color="#ff9163"/><stop offset="0.6405" stop-color="#ff623e"/><stop offset="0.7402" stop-color="#ff391e"/><stop offset="0.9003" stop-color="#ff1502"/><stop offset="1.0000" stop-color="#ff0700"/></linearGradient><linearGradient id="c129" gradientUnits="userSpaceOnUse" x1="1688.0" x2="2354.0" y1="0" y2="0"><stop offset="0.0000" stop-color="#00ffdc"/><stop offset="0.3363" stop-color="#02ffcd"/><stop offset="0.4084" stop-color="#6cffc8"/><stop offset="0.4715" stop-color="#deffc2"/><stop offset="0.4865" stop-color="#fdffc0"/><stop offset="0.5255" stop-color="#ffbf8c"/><stop offset="0.5736" stop-color="#ff8a62"/><stop offset="0.6426" stop-color="#ff5c3d"/><stop offset="0.7447" stop-color="#ff341d"/><stop offset="0.9099" stop-color="#ff1101"/><stop offset="1.0000" stop-color="#ff0500"/></linearGradient><linearGradient id="c130" gradientUnits="userSpaceOnUse" x1="1688.0" x2="2358.0" y1="0" y2="0"><stop offset="0.0000" stop-color="#00ffe0"/><stop offset="0.3313" stop-color="#00ffd3"/><stop offset="0.4030" stop-color="#6bffce"/><stop offset="0.4627" stop-color="#d8ffc9"/><stop offset="0.4806" stop-color="#feffc8"/><stop offset="0.5164" stop-color="#ffc195"/><stop offset="0.5612" stop-color="#ff8e6a"/><stop offset="0.6269" stop-color="#ff5f44"/><stop offset="0.7254" stop-color="#ff3622"/><stop offset="0.8836" stop-color="#ff1304"/><stop offset="0.9940" stop-color="#ff0400"/><stop offset="1.0000" stop-color="#ff0400"/></linearGradient><linearGradient id="c131" gradientUnits="userSpaceOnUse" x1="1690.0" x2="2362.0" y1="0" y2="0"><stop offset="0.0000" stop-color="#00ffe4"/><stop offset="0.3274" stop-color="#02ffd9"/><stop offset="0.3988" stop-color="#6fffd4"/><stop offset="0.4583" stop-color="#dfffd0"/><stop offset="0.4732" stop-color="#ffffcf"/><stop offset="0.5060" stop-color="#ffc49d"/><stop offset="0.5506" stop-color="#ff9070"/><stop offset="0.6131" stop-color="#ff6249"/><stop offset="0.7083" stop-color="#ff3826"/><stop offset="0.8601" stop-color="#ff1508"/><stop offset="0.9583" stop-color="#ff0700"/><stop offset="1.0000" stop-color="#ff0200"/></linearGradient><linearGradient id="c132" gradientUnits="userSpaceOnUse" x1="1690.0" x2="2366.0" y1="0" y2="0"><stop offset="0.0000" stop-color="#00ffe8"/><stop offset="0.3225" stop-color="#00ffdf"/><stop offset="0.3905" stop-color="#69ffdb"/><stop offset="0.4497" stop-color="#d9ffd8"/><stop offset="0.4675" stop-color="#fffed6"/><stop offset="0.5000" stop-color="#ffc3a2"/><stop offset="0.5444" stop-color="#ff8e74"/><stop offset="0.6065" stop-color="#ff604c"/><stop offset="0.7012" stop-color="#ff3728"/><stop offset="0.8521" stop-color="#ff1409"/><stop offset="0.9556" stop-color="#ff0500"/><stop offset="1.0000" stop-color="#ff0000"/></linearGradient><linearGradient id="c133" gradientUnits="userSpaceOnUse" x1="1690.0" x2="2370.0" y1="0" y2="0"><stop offset="0.0000" stop-color="#00ffed"/><stop offset="0.3206" stop-color="#02ffe5"/><stop offset="0.3882" stop-color="#6dffe2"/><stop offset="0.4471" stop-color="#e0ffdf"/><stop offset="0.4618" stop-color="#fffddd"/><stop offset="0.4912" stop-color="#ffc6ac"/><stop offset="0.5324" stop-color="#ff937d"/><stop offset="0.5912" stop-color="#ff6453"/><stop offset="0.6794" stop-color="#ff3b2e"/><stop offset="0.8206" stop-color="#ff170e"/><stop offset="0.9500" stop-color="#ff0400"/><stop offset="1.0000" stop-color="#ff0000"/></linearGradient><linearGradient id="c134" gradientUnits="userSpaceOnUse" x1="1692.0" x2="2374.0" y1="0" y2="0"><stop offset="0.0000" stop-color="#00fff1"/><stop offset="0.3138" stop-color="#00ffeb"/><stop offset="0.3812" stop-color="#6cffe9"/><stop offset="0.4370" stop-color="#daffe7"/><stop offset="0.4545" stop-color="#fffce4"/><stop offset="0.4839" stop-color="#ffc5b1"/><stop offset="0.5249" stop-color="#ff9181"/><stop offset="0.5836" stop-color="#ff6356"/><stop offset="0.6716" stop-color="#ff3a30"/><stop offset="0.8123" stop-color="#ff160f"/><stop offset="0.9501" stop-color="#ff0200"/><stop offset="1.0000" stop-color="#ff0000"/></linearGradient><linearGradient id="c135" gradientUnits="userSpaceOnUse" x1="1692.0" x2="2378.0" y1="0" y2="0"><stop offset="0.0000" stop-color="#00fff5"/><stop offset="0.3120" stop-color="#03fff2"/><stop offset="0.3761" stop-color="#6cfff0"/><stop offset="0.4315" stop-color="#dbffef"/><stop offset="0.4461" stop-color="#fcffef"/><stop offset="0.4840" stop-color="#ffbbae"/><stop offset="0.5277" stop-color="#ff877d"/><stop offset="0.5918" stop-color="#ff5951"/><stop offset="0.6880" stop-color="#ff312b"/><stop offset="0.8426" stop-color="#ff0f0b"/><stop offset="0.9592" stop-color="#ff0000"/><stop offset="1.0000" stop-color="#ff0000"/></linearGradient><linearGradient id="c136" gradientUnits="userSpaceOnUse" x1="1694.0" x2="2382.0" y1="0" y2="0"><stop offset="0.0000" stop-color="#00fffa"/><stop offset="0.3052" stop-color="#01fff8"/><stop offset="0.3692" stop-color="#6bfff8"/><stop offset="0.4244" stop-color="#dbfff7"/><stop offset="0.4390" stop-color="#fdfff7"/><stop offset="0.4738" stop-color="#ffbeb8"/><stop offset="0.5145" stop-color="#ff8c87"/><stop offset="0.5756" stop-color="#ff5d59"/><stop offset="0.6657" stop-color="#ff3432"/><stop offset="0.8110" stop-color="#ff1110"/><stop offset="0.9535" stop-color="#ff0000"/><stop offset="1.0000" stop-color="#ff0000"/></linearGradient><linearGradient id="c137" gradientUnits="userSpaceOnUse" x1="1694.0" x2="2386.0" y1="0" y2="0"><stop offset="0.0000" stop-color="#00fffe"/><stop offset="0.3006" stop-color="#00ffff"/><stop offset="0.3584" stop-color="#5ffeff"/><stop offset="0.4133" stop-color="#cefeff"/><stop offset="0.4335" stop-color="#fdfeff"/><stop offset="0.4653" stop-color="#ffc1c2"/><stop offset="0.5058" stop-color="#ff8d8e"/><stop offset="0.5636" stop-color="#ff5f5f"/><stop offset="0.6503" stop-color="#ff3637"/><stop offset="0.7890" stop-color="#ff1314"/><stop offset="0.9451" stop-color="#ff0000"/><stop offset="1.0000" stop-color="#ff0000"/></linearGradient><linearGradient id="c138" gradientUnits="userSpaceOnUse" x1="1694.0" x2="2390.0" y1="0" y2="0"><stop offset="0.0000" stop-color="#00fbff"/><stop offset="0.2989" stop-color="#01f8ff"/><stop offset="0.3621" stop-color="#6bf7ff"/><stop offset="0.4167" stop-color="#dbf6ff"/><stop offset="0.4310" stop-color="#fdf5ff"/><stop offset="0.4655" stop-color="#ffb6be"/><stop offset="0.5057" stop-color="#ff868c"/><stop offset="0.5661" stop-color="#ff585d"/><stop offset="0.6552" stop-color="#ff3135"/><stop offset="0.7989" stop-color="#ff0f12"/><stop offset="0.9339" stop-color="#ff0000"/><stop offset="1.0000" stop-color="#ff0000"/></linearGradient><linearGradient id="c139" gradientUnits="userSpaceOnUse" x1="1696.0" x2="2392.0" y1="0" y2="0"><stop offset="0.0000" stop-color="#00f6ff"/><stop offset="0.2931" stop-color="#00f1ff"/><stop offset="0.3534" stop-color="#62f0ff"/><stop offset="0.4109" stop-color="#d5eeff"/><stop offset="0.4282" stop-color="#fcedff"/><stop offset="0.4655" stop-color="#ffadbb"/><stop offset="0.5086" stop-color="#ff7c88"/><stop offset="0.5718" stop-color="#ff5059"/><stop offset="0.6667" stop-color="#ff2a31"/><stop offset="0.8218" stop-color="#ff0a0f"/><stop offset="0.9282" stop-color="#ff0001"/><stop offset="1.0000" stop-color="#ff0000"/></linearGradient><linearGradient id="c140" gradientUnits="userSpaceOnUse" x1="1696.0" x2="2396.0" y1="0" y2="0"><stop offset="0.0000" stop-color="#00f2ff"/><stop offset="0.2914" stop-color="#01ebff"/><stop offset="0.3571" stop-color="#6de8ff"/><stop offset="0.4114" stop-color="#dbe5ff"/><stop offset="0.4286" stop-color="#ffe2fc"/><stop offset="0.4571" stop-color="#ffafc5"/><stop offset="0.4971" stop-color="#ff8092"/><stop offset="0.5543" stop-color="#ff5563"/><stop offset="0.6400" stop-color="#ff2f3a"/><stop offset="0.7771" stop-color="#ff0f16"/><stop offset="0.9057" stop-color="#ff0004"/><stop offset="1.0000" stop-color="#ff0000"/></linearGradient><linearGradient id="c141" gradientUnits="userSpaceOnUse" x1="1696.0" x2="2400.0" y1="0" y2="0"><stop offset="0.0000" stop-color="#00edff"/><stop offset="0.2869" stop-color="#00e4ff"/><stop offset="0.3494" stop-color="#64e1ff"/><stop offset="0.4062" stop-color="#d4deff"/><stop offset="0.4261" stop-color="#ffdafc"/><stop offset="0.4574" stop-color="#ffa5c1"/><stop offset="0.5000" stop-color="#ff778d"/><stop offset="0.5597" stop-color="#ff4d5f"/><stop offset="0.6506" stop-color="#ff2936"/><stop offset="0.7955" stop-color="#ff0a13"/><stop offset="0.8977" stop-color="#ff0005"/><stop offset="1.0000" stop-color="#ff0000"/></linearGradient><linearGradient id="c142" gradientUnits="userSpaceOnUse" x1="1698.0" x2="2404.0" y1="0" y2="0"><stop offset="0.0000" stop-color="#00e9ff"/><stop offset="0.2833" stop-color="#02deff"/><stop offset="0.3484" stop-color="#6bdaff"/><stop offset="0.4051" stop-color="#dbd6ff"/><stop offset="0.4221" stop-color="#ffd3fd"/><stop offset="0.4533" stop-color="#ffa0c2"/><stop offset="0.4958" stop-color="#ff728e"/><stop offset="0.5552" stop-color="#ff4b60"/><stop offset="0.6459" stop-color="#ff2737"/><stop offset="0.7904" stop-color="#ff0814"/><stop offset="0.8839" stop-color="#ff0006"/><stop offset="0.9887" stop-color="#ff0000"/><stop offset="1.0000" stop-color="#ff0000"/></linearGradient><linearGradient id="c143" gradientUnits="userSpaceOnUse" x1="1698.0" x2="2408.0" y1="0" y2="0"><stop offset="0.0000" stop-color="#00e4ff"/><stop offset="0.2789" stop-color="#00d8ff"/><stop offset="0.3437" stop-color="#67d4ff"/><stop offset="0.4000" stop-color="#d4cfff"/><stop offset="0.4197" stop-color="#ffccfe"/><stop offset="0.4507" stop-color="#ff9bc3"/><stop offset="0.4930" stop-color="#ff6f8f"/><stop offset="0.5521" stop-color="#ff4861"/><stop offset="0.6423" stop-color="#ff2538"/><stop offset="0.7859" stop-color="#ff0715"/><stop offset="0.8761" stop-color="#ff0008"/><stop offset="0.9859" stop-color="#ff0000"/><stop offset="1.0000" stop-color="#ff0000"/></linearGradient><linearGradient id="c144" gradientUnits="userSpaceOnUse" x1="1698.0" x2="2412.0" y1="0" y2="0"><stop offset="0.0000" stop-color="#00e0ff"/><stop offset="0.2773" stop-color="#02d2ff"/><stop offset="0.3445" stop-color="#6dcdff"/><stop offset="0.4034" stop-color="#e0c7ff"/><stop offset="0.4174" stop-color="#ffc5fe"/><stop offset="0.4482" stop-color="#ff95c4"/><stop offset="0.4902" stop-color="#ff6b91"/><stop offset="0.5490" stop-color="#ff4563"/><stop offset="0.6387" stop-color="#ff2339"/><stop offset="0.7815" stop-color="#ff0516"/><stop offset="0.8711" stop-color="#ff0008"/><stop offset="0.9832" stop-color="#ff0000"/><stop offset="1.0000" stop-color="#ff0000"/></linearGradient><linearGradient id="c145" gradientUnits="userSpaceOnUse" x1="1700.0" x2="2416.0" y1="0" y2="0"><stop offset="0.0000" stop-color="#00dcff"/><stop offset="0.2709" stop-color="#00cdff"/><stop offset="0.3380" stop-color="#69c7ff"/><stop offset="0.3966" stop-color="#dac1ff"/><stop offset="0.4134" stop-color="#ffbeff"/><stop offset="0.4441" stop-color="#ff90c5"/><stop offset="0.4860" stop-color="#ff6792"/><stop offset="0.5475" stop-color="#ff4162"/><stop offset="0.6397" stop-color="#ff1f38"/><stop offset="0.7849" stop-color="#ff0315"/><stop offset="0.9665" stop-color="#ff0000"/><stop offset="1.0000" stop-color="#ff0000"/></linearGradient><linearGradient id="c146" gradientUnits="userSpaceOnUse" x1="1700.0" x2="2420.0" y1="0" y2="0"><stop offset="0.0000" stop-color="#00d8ff"/><stop offset="0.2694" stop-color="#02c7ff"/><stop offset="0.3389" stop-color="#6fc0ff"/><stop offset="0.3972" stop-color="#e0b9ff"/><stop offset="0.4111" stop-color="#ffb7ff"/><stop offset="0.4417" stop-color="#ff8bc6"/><stop offset="0.4833" stop-color="#ff6393"/><stop offset="0.5444" stop-color="#ff3e63"/><stop offset="0.6361" stop-color="#ff1d3a"/><stop offset="0.7806" stop-color="#ff0216"/><stop offset="0.9667" stop-color="#ff0000"/><stop offset="1.0000" stop-color="#ff0000"/></linearGradient><linearGradient id="c147" gradientUnits="userSpaceOnUse" x1="1702.0" x2="2424.0" y1="0" y2="0"><stop offset="0.0000" stop-color="#00d3ff"/><stop offset="0.2632" stop-color="#00c2ff"/><stop offset="0.3324" stop-color="#6bbaff"/><stop offset="0.3906" stop-color="#dab3ff"/><stop offset="0.4072" stop-color="#feb1ff"/><stop offset="0.4404" stop-color="#ff83c3"/><stop offset="0.4848" stop-color="#ff5b8e"/><stop offset="0.5485" stop-color="#ff375f"/><stop offset="0.6427" stop-color="#ff1937"/><stop offset="0.7895" stop-color="#ff0014"/><stop offset="0.9695" stop-color="#ff0000"/><stop offset="1.0000" stop-color="#ff0000"/></linearGradient><linearGradient id="c148" gradientUnits="userSpaceOnUse" x1="1702.0" x2="2428.0" y1="0" y2="0"><stop offset="0.0000" stop-color="#00cfff"/><stop offset="0.2617" stop-color="#02bcff"/><stop offset="0.3306" stop-color="#6db4ff"/><stop offset="0.3912" stop-color="#e0acff"/><stop offset="0.4050" stop-color="#feaaff"/><stop offset="0.4408" stop-color="#ff7bc0"/><stop offset="0.4848" stop-color="#ff568d"/><stop offset="0.5482" stop-color="#ff345f"/><stop offset="0.6446" stop-color="#ff1536"/><stop offset="0.7796" stop-color="#ff0016"/><stop offset="0.9697" stop-color="#ff0000"/><stop offset="1.0000" stop-color="#ff0000"/></linearGradient><linearGradient id="c149" gradientUnits="userSpaceOnUse" x1="1702.0" x2="2432.0" y1="0" y2="0"><stop offset="0.0000" stop-color="#00cbff"/><stop offset="0.2575" stop-color="#00b7ff"/><stop offset="0.3288" stop-color="#6eaeff"/><stop offset="0.3890" stop-color="#e0a6ff"/><stop offset="0.4027" stop-color="#fda3ff"/><stop offset="0.4411" stop-color="#ff74bd"/><stop offset="0.4877" stop-color="#ff4f89"/><stop offset="0.5534" stop-color="#ff2e5b"/><stop offset="0.6548" stop-color="#ff1133"/><stop offset="0.7699" stop-color="#ff0018"/><stop offset="0.9671" stop-color="#ff0000"/><stop offset="1.0000" stop-color="#ff0000"/></linearGradient><linearGradient id="c150" gradientUnits="userSpaceOnUse" x1="1704.0" x2="2436.0" y1="0" y2="0"><stop offset="0.0000" stop-color="#00c7ff"/><stop offset="0.2541" stop-color="#02b2ff"/><stop offset="0.3251" stop-color="#6fa9ff"/><stop offset="0.3852" stop-color="#df9fff"/><stop offset="0.4016" stop-color="#ff9afc"/><stop offset="0.4344" stop-color="#ff72c2"/><stop offset="0.4781" stop-color="#ff4f8f"/><stop offset="0.5410" stop-color="#ff2f61"/><stop offset="0.6366" stop-color="#ff1238"/><stop offset="0.7541" stop-color="#ff001b"/><stop offset="0.9617" stop-color="#ff0000"/><stop offset="1.0000" stop-color="#ff0000"/></linearGradient><linearGradient id="c151" gradientUnits="userSpaceOnUse" x1="1704.0" x2="2440.0" y1="0" y2="0"><stop offset="0.0000" stop-color="#00c3ff"/><stop offset="0.2500" stop-color="#01adff"/><stop offset="0.3207" stop-color="#6ba4ff"/><stop offset="0.3804" stop-color="#da9aff"/><stop offset="0.3995" stop-color="#ff94fc"/><stop offset="0.4321" stop-color="#ff6ec3"/><stop offset="0.4783" stop-color="#ff4a8e"/><stop offset="0.5435" stop-color="#ff2a5f"/><stop offset="0.6413" stop-color="#ff0e36"/><stop offset="0.7418" stop-color="#ff001d"/><stop offset="0.9565" stop-color="#ff0000"/><stop offset="1.0000" stop-color="#ff0000"/></linearGradient><linearGradient id="c152" gradientUnits="userSpaceOnUse" x1="1706.0" x2="2440.0" y1="0" y2="0"><stop offset="0.0000" stop-color="#00bfff"/><stop offset="0.2480" stop-color="#03a8ff"/><stop offset="0.3188" stop-color="#6c9eff"/><stop offset="0.3815" stop-color="#df93ff"/><stop offset="0.3978" stop-color="#ff8ffd"/><stop offset="0.4305" stop-color="#ff69c4"/><stop offset="0.4768" stop-color="#ff468f"/><stop offset="0.5422" stop-color="#ff2860"/><stop offset="0.6403" stop-color="#ff0d37"/><stop offset="0.7330" stop-color="#ff0020"/><stop offset="0.9564" stop-color="#ff0000"/><stop offset="1.0000" stop-color="#ff0000"/></linearGradient><linearGradient id="c153" gradientUnits="userSpaceOnUse" x1="1706.0" x2="2440.0" y1="0" y2="0"><stop offset="0.0000" stop-color="#00bbff"/><stop offset="0.2452" stop-color="#01a3ff"/><stop offset="0.3188" stop-color="#6d99ff"/><stop offset="0.3815" stop-color="#df8dff"/><stop offset="0.3978" stop-color="#ff89fd"/><stop offset="0.4305" stop-color="#ff65c5"/><stop offset="0.4768" stop-color="#ff4390"/><stop offset="0.5422" stop-color="#ff2561"/><stop offset="0.6403" stop-color="#ff0b38"/><stop offset="0.7248" stop-color="#ff0022"/><stop offset="0.9428" stop-color="#ff0002"/><stop offset="1.0000" stop-color="#ff0000"/></linearGradient><linearGradient id="c154" gradientUnits="userSpaceOnUse" x1="1708.0" x2="2440.0" y1="0" y2="0"><stop offset="0.0000" stop-color="#00b7ff"/><stop offset="0.2432" stop-color="#039eff"/><stop offset="0.3169" stop-color="#6e93ff"/><stop offset="0.3798" stop-color="#df88ff"/><stop offset="0.3962" stop-color="#ff84fe"/><stop offset="0.4290" stop-color="#ff61c6"/><stop offset="0.4754" stop-color="#ff4091"/><stop offset="0.5410" stop-color="#ff2362"/><stop offset="0.6393" stop-color="#ff0939"/><stop offset="0.7186" stop-color="#ff0024"/><stop offset="0.9317" stop-color="#ff0004"/><stop offset="1.0000" stop-color="#ff0000"/></linearGradient><linearGradient id="c155" gradientUnits="userSpaceOnUse" x1="1708.0" x2="2432.0" y1="0" y2="0"><stop offset="0.0000" stop-color="#00b3ff"/><stop offset="0.2431" stop-color="#019aff"/><stop offset="0.3177" stop-color="#6b8fff"/><stop offset="0.3812" stop-color="#d983ff"/><stop offset="0.4006" stop-color="#ff7efe"/><stop offset="0.4337" stop-color="#ff5cc6"/><stop offset="0.4807" stop-color="#ff3d92"/><stop offset="0.5470" stop-color="#ff2063"/><stop offset="0.6464" stop-color="#ff083a"/><stop offset="0.7182" stop-color="#ff0027"/><stop offset="0.9282" stop-color="#ff0006"/><stop offset="1.0000" stop-color="#ff0000"/></linearGradient><linearGradient id="c156" gradientUnits="userSpaceOnUse" x1="1710.0" x2="2424.0" y1="0" y2="0"><stop offset="0.0000" stop-color="#00b0ff"/><stop offset="0.2437" stop-color="#0395ff"/><stop offset="0.3221" stop-color="#7089ff"/><stop offset="0.3894" stop-color="#e47cff"/><stop offset="0.4034" stop-color="#ff79ff"/><stop offset="0.4398" stop-color="#ff56c3"/><stop offset="0.4874" stop-color="#ff3890"/><stop offset="0.5574" stop-color="#ff1c61"/><stop offset="0.6611" stop-color="#ff0438"/><stop offset="0.7507" stop-color="#ff0022"/><stop offset="0.9804" stop-color="#ff0003"/><stop offset="1.0000" stop-color="#ff0001"/></linearGradient><linearGradient id="c157" gradientUnits="userSpaceOnUse" x1="1710.0" x2="2416.0" y1="0" y2="0"><stop offset="0.0000" stop-color="#00acff"/><stop offset="0.2436" stop-color="#0191ff"/><stop offset="0.3229" stop-color="#6d85ff"/><stop offset="0.3909" stop-color="#de77ff"/><stop offset="0.4079" stop-color="#ff74ff"/><stop offset="0.4448" stop-color="#ff52c4"/><stop offset="0.4958" stop-color="#ff348f"/><stop offset="0.5666" stop-color="#ff1961"/><stop offset="0.6742" stop-color="#ff0238"/><stop offset="0.8470" stop-color="#ff0014"/><stop offset="1.0000" stop-color="#ff0002"/></linearGradient><linearGradient id="c158" gradientUnits="userSpaceOnUse" x1="1712.0" x2="2408.0" y1="0" y2="0"><stop offset="0.0000" stop-color="#00a8ff"/><stop offset="0.2414" stop-color="#008dff"/><stop offset="0.3218" stop-color="#6a80ff"/><stop offset="0.3908" stop-color="#d973ff"/><stop offset="0.4109" stop-color="#fe6eff"/><stop offset="0.4511" stop-color="#ff4cc2"/><stop offset="0.5029" stop-color="#ff2f8e"/><stop offset="0.5776" stop-color="#ff155f"/><stop offset="0.6897" stop-color="#ff0036"/><stop offset="0.8707" stop-color="#ff0013"/><stop offset="1.0000" stop-color="#ff0004"/></linearGradient><linearGradient id="c159" gradientUnits="userSpaceOnUse" x1="1712.0" x2="2400.0" y1="0" y2="0"><stop offset="0.0000" stop-color="#00a4ff"/><stop offset="0.2442" stop-color="#0289ff"/><stop offset="0.3285" stop-color="#6f7bff"/><stop offset="0.3983" stop-color="#de6dff"/><stop offset="0.4157" stop-color="#fe69ff"/><stop offset="0.4564" stop-color="#ff48c2"/><stop offset="0.5087" stop-color="#ff2c8f"/><stop offset="0.5843" stop-color="#ff1360"/><stop offset="0.6948" stop-color="#ff0038"/><stop offset="0.8750" stop-color="#ff0014"/><stop offset="1.0000" stop-color="#ff0006"/></linearGradient><linearGradient id="c160" gradientUnits="userSpaceOnUse" x1="1714.0" x2="2392.0" y1="0" y2="0"><stop offset="0.0000" stop-color="#00a1ff"/><stop offset="0.2419" stop-color="#0085ff"/><stop offset="0.3274" stop-color="#6c77ff"/><stop offset="0.4012" stop-color="#de68ff"/><stop offset="0.4189" stop-color="#fd64ff"/><stop offset="0.4631" stop-color="#ff43c0"/><stop offset="0.5192" stop-color="#ff278b"/><stop offset="0.5988" stop-color="#ff0f5d"/><stop offset="0.6962" stop-color="#ff003a"/><stop offset="0.8761" stop-color="#ff0016"/><stop offset="1.0000" stop-color="#ff0008"/></linearGradient><linearGradient id="c161" gradientUnits="userSpaceOnUse" x1="1714.0" x2="2384.0" y1="0" y2="0"><stop offset="0.0000" stop-color="#009dff"/><stop offset="0.2448" stop-color="#0281ff"/><stop offset="0.3313" stop-color="#6d72ff"/><stop offset="0.4060" stop-color="#de63ff"/><stop offset="0.4269" stop-color="#ff5dfc"/><stop offset="0.4657" stop-color="#ff41c4"/><stop offset="0.5194" stop-color="#ff2791"/><stop offset="0.5970" stop-color="#ff0f62"/><stop offset="0.6925" stop-color="#ff003f"/><stop offset="0.8657" stop-color="#ff001a"/><stop offset="1.0000" stop-color="#ff0009"/></linearGradient><linearGradient id="c162" gradientUnits="userSpaceOnUse" x1="1716.0" x2="2374.0" y1="0" y2="0"><stop offset="0.0000" stop-color="#009aff"/><stop offset="0.2432" stop-color="#007dff"/><stop offset="0.3343" stop-color="#6d6eff"/><stop offset="0.4103" stop-color="#de5eff"/><stop offset="0.4316" stop-color="#ff58fc"/><stop offset="0.4742" stop-color="#ff3bc1"/><stop offset="0.5319" stop-color="#ff228d"/><stop offset="0.6140" stop-color="#ff0b5f"/><stop offset="0.6930" stop-color="#ff0042"/><stop offset="0.8632" stop-color="#ff001d"/><stop offset="1.0000" stop-color="#ff000c"/></linearGradient><linearGradient id="c163" gradientUnits="userSpaceOnUse" x1="1716.0" x2="2366.0" y1="0" y2="0"><stop offset="0.0000" stop-color="#0096ff"/><stop offset="0.2462" stop-color="#0279ff"/><stop offset="0.3385" stop-color="#6e69ff"/><stop offset="0.4154" stop-color="#de5aff"/><stop offset="0.4369" stop-color="#ff54fd"/><stop offset="0.4800" stop-color="#ff38c2"/><stop offset="0.5385" stop-color="#ff1f8e"/><stop offset="0.6215" stop-color="#ff0960"/><stop offset="0.6954" stop-color="#ff0045"/><stop offset="0.8646" stop-color="#ff001f"/><stop offset="1.0000" stop-color="#ff000e"/></linearGradient><linearGradient id="c164" gradientUnits="userSpaceOnUse" x1="1718.0" x2="2358.0" y1="0" y2="0"><stop offset="0.0000" stop-color="#0092ff"/><stop offset="0.2437" stop-color="#0075ff"/><stop offset="0.3375" stop-color="#6b66ff"/><stop offset="0.4188" stop-color="#de55ff"/><stop offset="0.4406" stop-color="#ff4ffd"/><stop offset="0.4844" stop-color="#ff34c3"/><stop offset="0.5437" stop-color="#ff1c8f"/><stop offset="0.6281" stop-color="#ff0761"/><stop offset="0.6969" stop-color="#ff0048"/><stop offset="0.8656" stop-color="#ff0022"/><stop offset="1.0000" stop-color="#ff0010"/></linearGradient><linearGradient id="c165" gradientUnits="userSpaceOnUse" x1="1718.0" x2="2350.0" y1="0" y2="0"><stop offset="0.0000" stop-color="#008fff"/><stop offset="0.2468" stop-color="#0271ff"/><stop offset="0.3418" stop-color="#6c61ff"/><stop offset="0.4241" stop-color="#dd50ff"/><stop offset="0.4462" stop-color="#ff4bfe"/><stop offset="0.4905" stop-color="#ff31c4"/><stop offset="0.5506" stop-color="#ff1a90"/><stop offset="0.6361" stop-color="#ff0562"/><stop offset="0.7057" stop-color="#ff0048"/><stop offset="0.8766" stop-color="#ff0022"/><stop offset="1.0000" stop-color="#ff0012"/></linearGradient><linearGradient id="c166" gradientUnits="userSpaceOnUse" x1="1720.0" x2="2342.0" y1="0" y2="0"><stop offset="0.0000" stop-color="#008cff"/><stop offset="0.2444" stop-color="#016eff"/><stop offset="0.3441" stop-color="#6d5dff"/><stop offset="0.4277" stop-color="#dd4cff"/><stop offset="0.4502" stop-color="#ff46fe"/><stop offset="0.4952" stop-color="#ff2dc4"/><stop offset="0.5563" stop-color="#ff1791"/><stop offset="0.6431" stop-color="#ff0362"/><stop offset="0.7749" stop-color="#ff0039"/><stop offset="0.9871" stop-color="#ff0015"/><stop offset="1.0000" stop-color="#ff0014"/></linearGradient><linearGradient id="c167" gradientUnits="userSpaceOnUse" x1="1720.0" x2="2334.0" y1="0" y2="0"><stop offset="0.0000" stop-color="#0088ff"/><stop offset="0.2476" stop-color="#026aff"/><stop offset="0.3485" stop-color="#6e59ff"/><stop offset="0.4332" stop-color="#dd48ff"/><stop offset="0.4560" stop-color="#ff42ff"/><stop offset="0.5016" stop-color="#ff2ac5"/><stop offset="0.5635" stop-color="#ff1592"/><stop offset="0.6547" stop-color="#ff0162"/><stop offset="0.7915" stop-color="#ff0038"/><stop offset="1.0000" stop-color="#ff0016"/></linearGradient><linearGradient id="c168" gradientUnits="userSpaceOnUse" x1="1720.0" x2="2326.0" y1="0" y2="0"><stop offset="0.0000" stop-color="#0085ff"/><stop offset="0.2475" stop-color="#0167ff"/><stop offset="0.3498" stop-color="#6b56ff"/><stop offset="0.4389" stop-color="#dd43ff"/><stop offset="0.4620" stop-color="#ff3eff"/><stop offset="0.5083" stop-color="#ff27c6"/><stop offset="0.5710" stop-color="#ff1293"/><stop offset="0.6634" stop-color="#ff0063"/><stop offset="0.8020" stop-color="#ff0039"/><stop offset="1.0000" stop-color="#ff0018"/></linearGradient><linearGradient id="c169" gradientUnits="userSpaceOnUse" x1="1722.0" x2="2318.0" y1="0" y2="0"><stop offset="0.0000" stop-color="#0082ff"/><stop offset="0.2483" stop-color="#0263ff"/><stop offset="0.3557" stop-color="#7051ff"/><stop offset="0.4463" stop-color="#e23eff"/><stop offset="0.4664" stop-color="#fe3aff"/><stop offset="0.5168" stop-color="#ff22c3"/><stop offset="0.5839" stop-color="#ff0e8f"/><stop offset="0.6678" stop-color="#ff0065"/><stop offset="0.8054" stop-color="#ff003b"/><stop offset="1.0000" stop-color="#ff001a"/></linearGradient><linearGradient id="c170" gradientUnits="userSpaceOnUse" x1="1722.0" x2="2310.0" y1="0" y2="0"><stop offset="0.0000" stop-color="#007fff"/><stop offset="0.2483" stop-color="#0160ff"/><stop offset="0.3571" stop-color="#6d4eff"/><stop offset="0.4490" stop-color="#dd3bff"/><stop offset="0.4728" stop-color="#fe35ff"/><stop offset="0.5272" stop-color="#ff1ec1"/><stop offset="0.5952" stop-color="#ff0b8e"/><stop offset="0.6701" stop-color="#ff0069"/><stop offset="0.8061" stop-color="#ff003f"/><stop offset="1.0000" stop-color="#ff001d"/></linearGradient><linearGradient id="c171" gradientUnits="userSpaceOnUse" x1="1724.0" x2="2302.0" y1="0" y2="0"><stop offset="0.0000" stop-color="#007bff"/><stop offset="0.2491" stop-color="#035dff"/><stop offset="0.3599" stop-color="#6e4aff"/><stop offset="0.4567" stop-color="#e136ff"/><stop offset="0.4810" stop-color="#ff30fc"/><stop offset="0.5329" stop-color="#ff1bc2"/><stop offset="0.6055" stop-color="#ff078d"/><stop offset="0.6678" stop-color="#ff006e"/><stop offset="0.8028" stop-color="#ff0043"/><stop offset="1.0000" stop-color="#ff001f"/></linearGradient><linearGradient id="c172" gradientUnits="userSpaceOnUse" x1="1724.0" x2="2294.0" y1="0" y2="0"><stop offset="0.0000" stop-color="#0078ff"/><stop offset="0.2491" stop-color="#015aff"/><stop offset="0.3649" stop-color="#6f46ff"/><stop offset="0.4632" stop-color="#e132ff"/><stop offset="0.4877" stop-color="#ff2cfc"/><stop offset="0.5404" stop-color="#ff18c2"/><stop offset="0.6140" stop-color="#ff058e"/><stop offset="0.6807" stop-color="#ff006d"/><stop offset="0.8175" stop-color="#ff0043"/><stop offset="1.0000" stop-color="#ff0022"/></linearGradient><linearGradient id="c173" gradientUnits="userSpaceOnUse" x1="1726.0" x2="2286.0" y1="0" y2="0"><stop offset="0.0000" stop-color="#0075ff"/><stop offset="0.2500" stop-color="#0356ff"/><stop offset="0.3679" stop-color="#6f43ff"/><stop offset="0.4679" stop-color="#e12eff"/><stop offset="0.4929" stop-color="#ff28fd"/><stop offset="0.5464" stop-color="#ff15c3"/><stop offset="0.6214" stop-color="#ff038e"/><stop offset="0.7286" stop-color="#ff0060"/><stop offset="0.8893" stop-color="#ff0037"/><stop offset="1.0000" stop-color="#ff0025"/></linearGradient><linearGradient id="c174" gradientUnits="userSpaceOnUse" x1="1728.0" x2="2278.0" y1="0" y2="0"><stop offset="0.0000" stop-color="#0071ff"/><stop offset="0.2473" stop-color="#0153ff"/><stop offset="0.3673" stop-color="#6d40ff"/><stop offset="0.4691" stop-color="#dd2bff"/><stop offset="0.4982" stop-color="#ff24fd"/><stop offset="0.5527" stop-color="#ff12c4"/><stop offset="0.6291" stop-color="#ff008f"/><stop offset="0.7382" stop-color="#ff0060"/><stop offset="0.9018" stop-color="#ff0037"/><stop offset="1.0000" stop-color="#ff0027"/></linearGradient><linearGradient id="c175" gradientUnits="userSpaceOnUse" x1="1728.0" x2="2270.0" y1="0" y2="0"><stop offset="0.0000" stop-color="#006eff"/><stop offset="0.2509" stop-color="#0350ff"/><stop offset="0.3727" stop-color="#6d3cff"/><stop offset="0.4797" stop-color="#e127ff"/><stop offset="0.5055" stop-color="#ff21fd"/><stop offset="0.5609" stop-color="#ff0fc5"/><stop offset="0.6384" stop-color="#ff0090"/><stop offset="0.7491" stop-color="#ff0061"/><stop offset="0.9151" stop-color="#ff0038"/><stop offset="1.0000" stop-color="#ff002a"/></linearGradient><linearGradient id="c176" gradientUnits="userSpaceOnUse" x1="1730.0" x2="2262.0" y1="0" y2="0"><stop offset="0.0000" stop-color="#006bff"/><stop offset="0.2481" stop-color="#014dff"/><stop offset="0.3759" stop-color="#6e39ff"/><stop offset="0.4850" stop-color="#e123ff"/><stop offset="0.5113" stop-color="#ff1dfe"/><stop offset="0.5677" stop-color="#ff0cc5"/><stop offset="0.6391" stop-color="#ff0095"/><stop offset="0.7481" stop-color="#ff0066"/><stop offset="0.9135" stop-color="#ff003c"/><stop offset="1.0000" stop-color="#ff002d"/></linearGradient><linearGradient id="c177" gradientUnits="userSpaceOnUse" x1="1732.0" x2="2252.0" y1="0" y2="0"><stop offset="0.0000" stop-color="#0068ff"/><stop offset="0.2500" stop-color="#034aff"/><stop offset="0.3808" stop-color="#6f35ff"/><stop offset="0.4923" stop-color="#e120ff"/><stop offset="0.5192" stop-color="#ff19fe"/><stop offset="0.5769" stop-color="#ff09c6"/><stop offset="0.6423" stop-color="#ff009a"/><stop offset="0.7500" stop-color="#ff006b"/><stop offset="0.9115" stop-color="#ff0040"/><stop offset="1.0000" stop-color="#ff0031"/></linearGradient><linearGradient id="c178" gradientUnits="userSpaceOnUse" x1="1732.0" x2="2244.0" y1="0" y2="0"><stop offset="0.0000" stop-color="#0065ff"/><stop offset="0.2500" stop-color="#0247ff"/><stop offset="0.3828" stop-color="#6c33ff"/><stop offset="0.4961" stop-color="#dc1dff"/><stop offset="0.5273" stop-color="#ff16ff"/><stop offset="0.5898" stop-color="#ff05c4"/><stop offset="0.6523" stop-color="#ff009b"/><stop offset="0.7617" stop-color="#ff006b"/><stop offset="0.9258" stop-color="#ff0041"/><stop offset="1.0000" stop-color="#ff0034"/></linearGradient><linearGradient id="c179" gradientUnits="userSpaceOnUse" x1="1734.0" x2="2236.0" y1="0" y2="0"><stop offset="0.0000" stop-color="#0062ff"/><stop offset="0.2470" stop-color="#0045ff"/><stop offset="0.3865" stop-color="#6d2fff"/><stop offset="0.5060" stop-color="#e018ff"/><stop offset="0.5339" stop-color="#ff12ff"/><stop offset="0.5976" stop-color="#ff03c4"/><stop offset="0.6853" stop-color="#ff0090"/><stop offset="0.8088" stop-color="#ff0061"/><stop offset="0.9960" stop-color="#ff0038"/><stop offset="1.0000" stop-color="#ff0037"/></linearGradient><linearGradient id="c180" gradientUnits="userSpaceOnUse" x1="1734.0" x2="2228.0" y1="0" y2="0"><stop offset="0.0000" stop-color="#005fff"/><stop offset="0.2510" stop-color="#0242ff"/><stop offset="0.3927" stop-color="#6e2cff"/><stop offset="0.5142" stop-color="#e015ff"/><stop offset="0.5425" stop-color="#fe0fff"/><stop offset="0.6113" stop-color="#ff00c2"/><stop offset="0.7004" stop-color="#ff008e"/><stop offset="0.8300" stop-color="#ff005f"/><stop offset="1.0000" stop-color="#ff003a"/></linearGradient><linearGradient id="c181" gradientUnits="userSpaceOnUse" x1="1736.0" x2="2220.0" y1="0" y2="0"><stop offset="0.0000" stop-color="#005cff"/><stop offset="0.2479" stop-color="#003fff"/><stop offset="0.3926" stop-color="#6b29ff"/><stop offset="0.5165" stop-color="#dc13ff"/><stop offset="0.5496" stop-color="#fe0cff"/><stop offset="0.6157" stop-color="#ff00c6"/><stop offset="0.7066" stop-color="#ff0091"/><stop offset="0.8347" stop-color="#ff0063"/><stop offset="1.0000" stop-color="#ff003e"/></linearGradient><linearGradient id="c182" gradientUnits="userSpaceOnUse" x1="1738.0" x2="2212.0" y1="0" y2="0"><stop offset="0.0000" stop-color="#0059ff"/><stop offset="0.2489" stop-color="#023cff"/><stop offset="0.4008" stop-color="#6f26ff"/><stop offset="0.5274" stop-color="#e00eff"/><stop offset="0.5612" stop-color="#ff07fc"/><stop offset="0.6160" stop-color="#ff00cc"/><stop offset="0.7046" stop-color="#ff0098"/><stop offset="0.8312" stop-color="#ff0068"/><stop offset="1.0000" stop-color="#ff0042"/></linearGradient><linearGradient id="c183" gradientUnits="userSpaceOnUse" x1="1738.0" x2="2204.0" y1="0" y2="0"><stop offset="0.0000" stop-color="#0056ff"/><stop offset="0.2489" stop-color="#013aff"/><stop offset="0.4034" stop-color="#6d23ff"/><stop offset="0.5365" stop-color="#e00bff"/><stop offset="0.5708" stop-color="#ff04fc"/><stop offset="0.6395" stop-color="#ff00c4"/><stop offset="0.7382" stop-color="#ff008f"/><stop offset="0.8798" stop-color="#ff0060"/><stop offset="1.0000" stop-color="#ff0045"/></linearGradient><linearGradient id="c184" gradientUnits="userSpaceOnUse" x1="1740.0" x2="2196.0" y1="0" y2="0"><stop offset="0.0000" stop-color="#0053ff"/><stop offset="0.2500" stop-color="#0237ff"/><stop offset="0.4079" stop-color="#6e20ff"/><stop offset="0.5439" stop-color="#e008ff"/><stop offset="0.5789" stop-color="#ff01fd"/><stop offset="0.6535" stop-color="#ff00c2"/><stop offset="0.7544" stop-color="#ff008e"/><stop offset="0.8991" stop-color="#ff005f"/><stop offset="1.0000" stop-color="#ff0049"/></linearGradient><linearGradient id="c185" gradientUnits="userSpaceOnUse" x1="1742.0" x2="2188.0" y1="0" y2="0"><stop offset="0.0000" stop-color="#0050ff"/><stop offset="0.2466" stop-color="#0135ff"/><stop offset="0.4126" stop-color="#6e1dff"/><stop offset="0.5516" stop-color="#e005ff"/><stop offset="0.5874" stop-color="#ff00fd"/><stop offset="0.6637" stop-color="#ff00c3"/><stop offset="0.7668" stop-color="#ff008f"/><stop offset="0.9148" stop-color="#ff0060"/><stop offset="1.0000" stop-color="#ff004d"/></linearGradient><linearGradient id="c186" gradientUnits="userSpaceOnUse" x1="1742.0" x2="2180.0" y1="0" y2="0"><stop offset="0.0000" stop-color="#004dff"/><stop offset="0.2511" stop-color="#0232ff"/><stop offset="0.4201" stop-color="#6f1aff"/><stop offset="0.5616" stop-color="#df02ff"/><stop offset="0.5982" stop-color="#ff00fe"/><stop offset="0.6758" stop-color="#ff00c3"/><stop offset="0.7808" stop-color="#ff008f"/><stop offset="0.9315" stop-color="#ff0061"/><stop offset="1.0000" stop-color="#ff0052"/></linearGradient><linearGradient id="c187" gradientUnits="userSpaceOnUse" x1="1744.0" x2="2172.0" y1="0" y2="0"><stop offset="0.0000" stop-color="#004aff"/><stop offset="0.2477" stop-color="#0130ff"/><stop offset="0.4206" stop-color="#6d18ff"/><stop offset="0.5701" stop-color="#df00ff"/><stop offset="0.6075" stop-color="#ff00fe"/><stop offset="0.6869" stop-color="#ff00c4"/><stop offset="0.7944" stop-color="#ff0090"/><stop offset="0.9486" stop-color="#ff0062"/><stop offset="1.0000" stop-color="#ff0056"/></linearGradient><linearGradient id="c188" gradientUnits="userSpaceOnUse" x1="1746.0" x2="2164.0" y1="0" y2="0"><stop offset="0.0000" stop-color="#0047ff"/><stop offset="0.2488" stop-color="#022dff"/><stop offset="0.4258" stop-color="#6d15ff"/><stop offset="0.5742" stop-color="#db00ff"/><stop offset="0.6172" stop-color="#ff00fe"/><stop offset="0.6986" stop-color="#ff00c5"/><stop offset="0.8086" stop-color="#ff0091"/><stop offset="0.9665" stop-color="#ff0062"/><stop offset="1.0000" stop-color="#ff005b"/></linearGradient><linearGradient id="c189" gradientUnits="userSpaceOnUse" x1="1746.0" x2="2156.0" y1="0" y2="0"><stop offset="0.0000" stop-color="#0045ff"/><stop offset="0.2488" stop-color="#012bff"/><stop offset="0.4341" stop-color="#6e12ff"/><stop offset="0.5707" stop-color="#d000ff"/><stop offset="0.6293" stop-color="#ff00ff"/><stop offset="0.7122" stop-color="#ff00c5"/><stop offset="0.8293" stop-color="#ff0090"/><stop offset="0.9951" stop-color="#ff0061"/><stop offset="1.0000" stop-color="#ff0060"/></linearGradient><linearGradient id="c190" gradientUnits="userSpaceOnUse" x1="1748.0" x2="2148.0" y1="0" y2="0"><stop offset="0.0000" stop-color="#0042ff"/><stop offset="0.2500" stop-color="#0228ff"/><stop offset="0.4400" stop-color="#6f0fff"/><stop offset="0.5600" stop-color="#c100ff"/><stop offset="0.6400" stop-color="#ff00ff"/><stop offset="0.7250" stop-color="#ff00c6"/><stop offset="0.8450" stop-color="#ff0091"/><stop offset="1.0000" stop-color="#ff0065"/></linearGradient><linearGradient id="c191" gradientUnits="userSpaceOnUse" x1="1748.0" x2="2140.0" y1="0" y2="0"><stop offset="0.0000" stop-color="#003fff"/><stop offset="0.2500" stop-color="#0126ff"/><stop offset="0.4439" stop-color="#6c0dff"/><stop offset="0.5561" stop-color="#b600ff"/><stop offset="0.6531" stop-color="#ff00ff"/><stop offset="0.7449" stop-color="#ff00c4"/><stop offset="0.8673" stop-color="#ff0090"/><stop offset="1.0000" stop-color="#ff006a"/></linearGradient><linearGradient id="c192" gradientUnits="userSpaceOnUse" x1="1750.0" x2="2130.0" y1="0" y2="0"><stop offset="0.0000" stop-color="#003cff"/><stop offset="0.2526" stop-color="#0323ff"/><stop offset="0.4579" stop-color="#700aff"/><stop offset="0.5526" stop-color="#ac00ff"/><stop offset="0.6684" stop-color="#fe00ff"/><stop offset="0.7684" stop-color="#ff00c2"/><stop offset="0.9000" stop-color="#ff008d"/><stop offset="1.0000" stop-color="#ff0071"/></linearGradient><linearGradient id="c193" gradientUnits="userSpaceOnUse" x1="1752.0" x2="2122.0" y1="0" y2="0"><stop offset="0.0000" stop-color="#0039ff"/><stop offset="0.2486" stop-color="#0121ff"/><stop offset="0.4595" stop-color="#6e08ff"/><stop offset="0.5514" stop-color="#a500ff"/><stop offset="0.6865" stop-color="#ff00fc"/><stop offset="0.7838" stop-color="#ff00c2"/><stop offset="0.9189" stop-color="#ff008e"/><stop offset="1.0000" stop-color="#ff0077"/></linearGradient><linearGradient id="c194" gradientUnits="userSpaceOnUse" x1="1754.0" x2="2114.0" y1="0" y2="0"><stop offset="0.0000" stop-color="#0037ff"/><stop offset="0.2500" stop-color="#031fff"/><stop offset="0.4667" stop-color="#6e05ff"/><stop offset="0.5556" stop-color="#a200ff"/><stop offset="0.7000" stop-color="#ff00fd"/><stop offset="0.8000" stop-color="#ff00c3"/><stop offset="0.9389" stop-color="#ff008e"/><stop offset="1.0000" stop-color="#ff007d"/></linearGradient><linearGradient id="c195" gradientUnits="userSpaceOnUse" x1="1756.0" x2="2106.0" y1="0" y2="0"><stop offset="0.0000" stop-color="#0034ff"/><stop offset="0.2457" stop-color="#021dff"/><stop offset="0.4743" stop-color="#6f03ff"/><stop offset="0.6686" stop-color="#e200ff"/><stop offset="0.7143" stop-color="#ff00fd"/><stop offset="0.8171" stop-color="#ff00c3"/><stop offset="0.9600" stop-color="#ff008f"/><stop offset="1.0000" stop-color="#ff0084"/></linearGradient><linearGradient id="c196" gradientUnits="userSpaceOnUse" x1="1756.0" x2="2098.0" y1="0" y2="0"><stop offset="0.0000" stop-color="#0031ff"/><stop offset="0.2515" stop-color="#031aff"/><stop offset="0.4854" stop-color="#7000ff"/><stop offset="0.6842" stop-color="#e200ff"/><stop offset="0.7310" stop-color="#ff00fd"/><stop offset="0.8363" stop-color="#ff00c4"/><stop offset="0.9825" stop-color="#ff0090"/><stop offset="1.0000" stop-color="#ff008b"/></linearGradient><linearGradient id="c197" gradientUnits="userSpaceOnUse" x1="1758.0" x2="2090.0" y1="0" y2="0"><stop offset="0.0000" stop-color="#002eff"/><stop offset="0.2470" stop-color="#0219ff"/><stop offset="0.4880" stop-color="#6e00ff"/><stop offset="0.6928" stop-color="#de00ff"/><stop offset="0.7470" stop-color="#ff00fe"/><stop offset="0.8554" stop-color="#ff00c5"/><stop offset="1.0000" stop-color="#ff0092"/></linearGradient><linearGradient id="c198" gradientUnits="userSpaceOnUse" x1="1760.0" x2="2082.0" y1="0" y2="0"><stop offset="0.0000" stop-color="#002cff"/><stop offset="0.2484" stop-color="#0316ff"/><stop offset="0.4907" stop-color="#6b00ff"/><stop offset="0.7081" stop-color="#de00ff"/><stop offset="0.7640" stop-color="#ff00fe"/><stop offset="0.8758" stop-color="#ff00c5"/><stop offset="1.0000" stop-color="#ff009a"/></linearGradient><linearGradient id="c199" gradientUnits="userSpaceOnUse" x1="1762.0" x2="2074.0" y1="0" y2="0"><stop offset="0.0000" stop-color="#0029ff"/><stop offset="0.2436" stop-color="#0214ff"/><stop offset="0.4808" stop-color="#6300ff"/><stop offset="0.7051" stop-color="#d300ff"/><stop offset="0.7821" stop-color="#ff00fe"/><stop offset="0.9038" stop-color="#ff00c3"/><stop offset="1.0000" stop-color="#ff00a2"/></linearGradient><linearGradient id="c200" gradientUnits="userSpaceOnUse" x1="1762.0" x2="2066.0" y1="0" y2="0"><stop offset="0.0000" stop-color="#0027ff"/><stop offset="0.2500" stop-color="#0312ff"/><stop offset="0.4671" stop-color="#5800ff"/><stop offset="0.7039" stop-color="#c900ff"/><stop offset="0.8026" stop-color="#ff00ff"/><stop offset="0.9276" stop-color="#ff00c4"/><stop offset="1.0000" stop-color="#ff00ab"/></linearGradient><linearGradient id="c201" gradientUnits="userSpaceOnUse" x1="1764.0" x2="2058.0" y1="0" y2="0"><stop offset="0.0000" stop-color="#0024ff"/><stop offset="0.2449" stop-color="#0210ff"/><stop offset="0.4558" stop-color="#5100ff"/><stop offset="0.7075" stop-color="#c200ff"/><stop offset="0.8231" stop-color="#ff00ff"/><stop offset="0.9524" stop-color="#ff00c4"/><stop offset="1.0000" stop-color="#ff00b4"/></linearGradient><linearGradient id="c202" gradientUnits="userSpaceOnUse" x1="1766.0" x2="2050.0" y1="0" y2="0"><stop offset="0.0000" stop-color="#0021ff"/><stop offset="0.2394" stop-color="#010fff"/><stop offset="0.4437" stop-color="#4a00ff"/><stop offset="0.7113" stop-color="#bc00ff"/><stop offset="0.8451" stop-color="#ff00ff"/><stop offset="0.9859" stop-color="#ff00c3"/><stop offset="1.0000" stop-color="#ff00be"/></linearGradient><linearGradient id="c203" gradientUnits="userSpaceOnUse" x1="1768.0" x2="2042.0" y1="0" y2="0"><stop offset="0.0000" stop-color="#001eff"/><stop offset="0.2409" stop-color="#020cff"/><stop offset="0.4307" stop-color="#4200ff"/><stop offset="0.7080" stop-color="#b200ff"/><stop offset="0.8759" stop-color="#ff00fc"/><stop offset="1.0000" stop-color="#ff00c8"/></linearGradient><linearGradient id="c204" gradientUnits="userSpaceOnUse" x1="1770.0" x2="2034.0" y1="0" y2="0"><stop offset="0.0000" stop-color="#001cff"/><stop offset="0.2348" stop-color="#010bff"/><stop offset="0.4167" stop-color="#3c00ff"/><stop offset="0.7121" stop-color="#ac00ff"/><stop offset="0.9015" stop-color="#ff00fc"/><stop offset="1.0000" stop-color="#ff00d3"/></linearGradient><linearGradient id="c205" gradientUnits="userSpaceOnUse" x1="1772.0" x2="2026.0" y1="0" y2="0"><stop offset="0.0000" stop-color="#0019ff"/><stop offset="0.2362" stop-color="#0208ff"/><stop offset="0.4016" stop-color="#3500ff"/><stop offset="0.7165" stop-color="#a600ff"/><stop offset="0.9291" stop-color="#ff00fd"/><stop offset="1.0000" stop-color="#ff00df"/></linearGradient><linearGradient id="c206" gradientUnits="userSpaceOnUse" x1="1774.0" x2="2018.0" y1="0" y2="0"><stop offset="0.0000" stop-color="#0016ff"/><stop offset="0.2295" stop-color="#0107ff"/><stop offset="0.3934" stop-color="#3100ff"/><stop offset="0.7213" stop-color="#a000ff"/><stop offset="0.9590" stop-color="#ff00fd"/><stop offset="1.0000" stop-color="#ff00ec"/></linearGradient><linearGradient id="c207" gradientUnits="userSpaceOnUse" x1="1774.0" x2="2008.0" y1="0" y2="0"><stop offset="0.0000" stop-color="#0014ff"/><stop offset="0.2393" stop-color="#0205ff"/><stop offset="0.4274" stop-color="#3700ff"/><stop offset="0.7692" stop-color="#a600ff"/><stop offset="1.0000" stop-color="#ff00fd"/></linearGradient><linearGradient id="c208" gradientUnits="userSpaceOnUse" x1="1776.0" x2="2000.0" y1="0" y2="0"><stop offset="0.0000" stop-color="#0012ff"/><stop offset="0.2321" stop-color="#0103ff"/><stop offset="0.6250" stop-color="#6f00ff"/><stop offset="0.9554" stop-color="#e100ff"/><stop offset="1.0000" stop-color="#f200ff"/></linearGradient><linearGradient id="c209" gradientUnits="userSpaceOnUse" x1="1778.0" x2="1992.0" y1="0" y2="0"><stop offset="0.0000" stop-color="#000fff"/><stop offset="0.2336" stop-color="#0201ff"/><stop offset="0.6449" stop-color="#7000ff"/><stop offset="0.9907" stop-color="#e100ff"/><stop offset="1.0000" stop-color="#e400ff"/></linearGradient><linearGradient id="c210" gradientUnits="userSpaceOnUse" x1="1780.0" x2="1984.0" y1="0" y2="0"><stop offset="0.0000" stop-color="#000dff"/><stop offset="0.2255" stop-color="#0100ff"/><stop offset="0.6569" stop-color="#6d00ff"/><stop offset="1.0000" stop-color="#d700ff"/></linearGradient><linearGradient id="c211" gradientUnits="userSpaceOnUse" x1="1782.0" x2="1976.0" y1="0" y2="0"><stop offset="0.0000" stop-color="#000aff"/><stop offset="0.2268" stop-color="#0300ff"/><stop offset="0.6804" stop-color="#6e00ff"/><stop offset="1.0000" stop-color="#ca00ff"/></linearGradient><linearGradient id="c212" gradientUnits="userSpaceOnUse" x1="1786.0" x2="1968.0" y1="0" y2="0"><stop offset="0.0000" stop-color="#0007ff"/><stop offset="0.2088" stop-color="#0200ff"/><stop offset="0.7033" stop-color="#6f00ff"/><stop offset="1.0000" stop-color="#bd00ff"/></linearGradient><linearGradient id="c213" gradientUnits="userSpaceOnUse" x1="1788.0" x2="1960.0" y1="0" y2="0"><stop offset="0.0000" stop-color="#0004ff"/><stop offset="0.2093" stop-color="#0300ff"/><stop offset="0.7326" stop-color="#6f00ff"/><stop offset="1.0000" stop-color="#b100ff"/></linearGradient><linearGradient id="c214" gradientUnits="userSpaceOnUse" x1="1790.0" x2="1952.0" y1="0" y2="0"><stop offset="0.0000" stop-color="#0002ff"/><stop offset="0.1975" stop-color="#0200ff"/><stop offset="0.7531" stop-color="#6d00ff"/><stop offset="1.0000" stop-color="#a500ff"/></linearGradient><linearGradient id="c215" gradientUnits="userSpaceOnUse" x1="1792.0" x2="1944.0" y1="0" y2="0"><stop offset="0.0000" stop-color="#0000ff"/><stop offset="0.1974" stop-color="#0300ff"/><stop offset="0.8026" stop-color="#7000ff"/><stop offset="1.0000" stop-color="#9a00ff"/></linearGradient><linearGradient id="c216" gradientUnits="userSpaceOnUse" x1="1794.0" x2="1936.0" y1="0" y2="0"><stop offset="0.0000" stop-color="#0000ff"/><stop offset="0.1831" stop-color="#0200ff"/><stop offset="0.8310" stop-color="#6e00ff"/><stop offset="1.0000" stop-color="#8f00ff"/></linearGradient><linearGradient id="c217" gradientUnits="userSpaceOnUse" x1="1798.0" x2="1928.0" y1="0" y2="0"><stop offset="0.0000" stop-color="#0000ff"/><stop offset="0.1692" stop-color="#0300ff"/><stop offset="0.8769" stop-color="#6f00ff"/><stop offset="1.0000" stop-color="#8400ff"/></linearGradient><linearGradient id="c218" gradientUnits="userSpaceOnUse" x1="1802.0" x2="1920.0" y1="0" y2="0"><stop offset="0.0000" stop-color="#0000ff"/><stop offset="0.1356" stop-color="#0200ff"/><stop offset="0.9322" stop-color="#7000ff"/><stop offset="1.0000" stop-color="#7a00ff"/></linearGradient><linearGradient id="c219" gradientUnits="userSpaceOnUse" x1="1804.0" x2="1912.0" y1="0" y2="0"><stop offset="0.0000" stop-color="#0000ff"/><stop offset="0.1296" stop-color="#0300ff"/><stop offset="1.0000" stop-color="#7000ff"/></linearGradient><linearGradient id="c220" gradientUnits="userSpaceOnUse" x1="1808.0" x2="1904.0" y1="0" y2="0"><stop offset="0.0000" stop-color="#0000ff"/><stop offset="0.1042" stop-color="#0400ff"/><stop offset="1.0000" stop-color="#6700ff"/></linearGradient><linearGradient id="c221" gradientUnits="userSpaceOnUse" x1="1812.0" x2="1896.0" y1="0" y2="0"><stop offset="0.0000" stop-color="#0000ff"/><stop offset="1.0000" stop-color="#5d00ff"/></linearGradient><linearGradient id="c222" gradientUnits="userSpaceOnUse" x1="1816.0" x2="1886.0" y1="0" y2="0"><stop offset="0.0000" stop-color="#0400ff"/><stop offset="1.0000" stop-color="#5200ff"/></linearGradient><linearGradient id="c223" gradientUnits="userSpaceOnUse" x1="1822.0" x2="1878.0" y1="0" y2="0"><stop offset="0.0000" stop-color="#0b00ff"/><stop offset="1.0000" stop-color="#4900ff"/></linearGradient><linearGradient id="c224" gradientUnits="userSpaceOnUse" x1="1826.0" x2="1870.0" y1="0" y2="0"><stop offset="0.0000" stop-color="#1100ff"/><stop offset="1.0000" stop-color="#4100ff"/></linearGradient></defs>
<rect x="1667.0" y="289.2" width="879.3000000000002" height="687.0999999999999" fill="#242424"/>
<g clip-path="url(#loc)"><rect x="1726.0" y="295.0" width="50.0" height="4.6" fill="url(#c0)"/><rect x="1720.0" y="298.0" width="76.0" height="4.6" fill="url(#c1)"/><rect x="1714.0" y="301.0" width="94.0" height="4.6" fill="url(#c2)"/><rect x="1708.0" y="304.0" width="108.0" height="4.6" fill="url(#c3)"/><rect x="1702.0" y="307.0" width="120.0" height="4.6" fill="url(#c4)"/><rect x="1694.0" y="310.0" width="136.0" height="4.6" fill="url(#c5)"/><rect x="1692.0" y="313.0" width="146.0" height="4.6" fill="url(#c6)"/><rect x="1692.0" y="316.0" width="154.0" height="4.6" fill="url(#c7)"/><rect x="1690.0" y="319.0" width="162.0" height="4.6" fill="url(#c8)"/><rect x="1688.0" y="322.0" width="170.0" height="4.6" fill="url(#c9)"/><rect x="1686.0" y="325.0" width="178.0" height="4.6" fill="url(#c10)"/><rect x="1684.0" y="328.0" width="186.0" height="4.6" fill="url(#c11)"/><rect x="1684.0" y="331.0" width="192.0" height="4.6" fill="url(#c12)"/><rect x="1682.0" y="334.0" width="200.0" height="4.6" fill="url(#c13)"/><rect x="1680.0" y="337.0" width="208.0" height="4.6" fill="url(#c14)"/><rect x="1678.0" y="340.0" width="214.0" height="4.6" fill="url(#c15)"/><rect x="1678.0" y="343.0" width="220.0" height="4.6" fill="url(#c16)"/><rect x="1676.0" y="346.0" width="226.0" height="4.6" fill="url(#c17)"/><rect x="1674.0" y="349.0" width="234.0" height="4.6" fill="url(#c18)"/><rect x="1672.0" y="352.0" width="242.0" height="4.6" fill="url(#c19)"/><rect x="1670.0" y="355.0" width="248.0" height="4.6" fill="url(#c20)"/><rect x="1670.0" y="358.0" width="254.0" height="4.6" fill="url(#c21)"/><rect x="1668.0" y="361.0" width="260.0" height="4.6" fill="url(#c22)"/><rect x="1668.0" y="364.0" width="264.0" height="4.6" fill="url(#c23)"/><rect x="1668.0" y="367.0" width="270.0" height="4.6" fill="url(#c24)"/><rect x="1668.0" y="370.0" width="274.0" height="4.6" fill="url(#c25)"/><rect x="1668.0" y="373.0" width="278.0" height="4.6" fill="url(#c26)"/><rect x="1668.0" y="376.0" width="284.0" height="4.6" fill="url(#c27)"/><rect x="1668.0" y="379.0" width="288.0" height="4.6" fill="url(#c28)"/><rect x="1668.0" y="382.0" width="292.0" height="4.6" fill="url(#c29)"/><rect x="1668.0" y="385.0" width="296.0" height="4.6" fill="url(#c30)"/><rect x="1668.0" y="388.0" width="302.0" height="4.6" fill="url(#c31)"/><rect x="1668.0" y="391.0" width="306.0" height="4.6" fill="url(#c32)"/><rect x="1668.0" y="394.0" width="310.0" height="4.6" fill="url(#c33)"/><rect x="1668.0" y="397.0" width="314.0" height="4.6" fill="url(#c34)"/><rect x="1668.0" y="400.0" width="318.0" height="4.6" fill="url(#c35)"/><rect x="1668.0" y="403.0" width="322.0" height="4.6" fill="url(#c36)"/><rect x="1668.0" y="406.0" width="326.0" height="4.6" fill="url(#c37)"/><rect x="1668.0" y="409.0" width="332.0" height="4.6" fill="url(#c38)"/><rect x="1668.0" y="412.0" width="336.0" height="4.6" fill="url(#c39)"/><rect x="1668.0" y="415.0" width="340.0" height="4.6" fill="url(#c40)"/><rect x="1668.0" y="418.0" width="344.0" height="4.6" fill="url(#c41)"/><rect x="1668.0" y="421.0" width="348.0" height="4.6" fill="url(#c42)"/><rect x="1668.0" y="424.0" width="352.0" height="4.6" fill="url(#c43)"/><rect x="1668.0" y="427.0" width="356.0" height="4.6" fill="url(#c44)"/><rect x="1668.0" y="430.0" width="360.0" height="4.6" fill="url(#c45)"/><rect x="1668.0" y="433.0" width="364.0" height="4.6" fill="url(#c46)"/><rect x="1668.0" y="436.0" width="368.0" height="4.6" fill="url(#c47)"/><rect x="1668.0" y="439.0" width="372.0" height="4.6" fill="url(#c48)"/><rect x="1668.0" y="442.0" width="376.0" height="4.6" fill="url(#c49)"/><rect x="1668.0" y="445.0" width="380.0" height="4.6" fill="url(#c50)"/><rect x="1668.0" y="448.0" width="384.0" height="4.6" fill="url(#c51)"/><rect x="1668.0" y="451.0" width="388.0" height="4.6" fill="url(#c52)"/><rect x="1668.0" y="454.0" width="392.0" height="4.6" fill="url(#c53)"/><rect x="1668.0" y="457.0" width="396.0" height="4.6" fill="url(#c54)"/><rect x="1668.0" y="460.0" width="400.0" height="4.6" fill="url(#c55)"/><rect x="1668.0" y="463.0" width="404.0" height="4.6" fill="url(#c56)"/><rect x="1668.0" y="466.0" width="408.0" height="4.6" fill="url(#c57)"/><rect x="1668.0" y="469.0" width="412.0" height="4.6" fill="url(#c58)"/><rect x="1668.0" y="472.0" width="416.0" height="4.6" fill="url(#c59)"/><rect x="1668.0" y="475.0" width="420.0" height="4.6" fill="url(#c60)"/><rect x="1668.0" y="478.0" width="424.0" height="4.6" fill="url(#c61)"/><rect x="1668.0" y="481.0" width="428.0" height="4.6" fill="url(#c62)"/><rect x="1668.0" y="484.0" width="432.0" height="4.6" fill="url(#c63)"/><rect x="1668.0" y="487.0" width="436.0" height="4.6" fill="url(#c64)"/><rect x="1668.0" y="490.0" width="440.0" height="4.6" fill="url(#c65)"/><rect x="1668.0" y="493.0" width="444.0" height="4.6" fill="url(#c66)"/><rect x="1668.0" y="496.0" width="448.0" height="4.6" fill="url(#c67)"/><rect x="1668.0" y="499.0" width="450.0" height="4.6" fill="url(#c68)"/><rect x="1668.0" y="502.0" width="454.0" height="4.6" fill="url(#c69)"/><rect x="1668.0" y="505.0" width="458.0" height="4.6" fill="url(#c70)"/><rect x="1668.0" y="508.0" width="462.0" height="4.6" fill="url(#c71)"/><rect x="1668.0" y="511.0" width="466.0" height="4.6" fill="url(#c72)"/><rect x="1668.0" y="514.0" width="470.0" height="4.6" fill="url(#c73)"/><rect x="1668.0" y="517.0" width="474.0" height="4.6" fill="url(#c74)"/><rect x="1668.0" y="520.0" width="478.0" height="4.6" fill="url(#c75)"/><rect x="1668.0" y="523.0" width="482.0" height="4.6" fill="url(#c76)"/><rect x="1668.0" y="526.0" width="486.0" height="4.6" fill="url(#c77)"/><rect x="1668.0" y="529.0" width="490.0" height="4.6" fill="url(#c78)"/><rect x="1668.0" y="532.0" width="494.0" height="4.6" fill="url(#c79)"/><rect x="1668.0" y="535.0" width="498.0" height="4.6" fill="url(#c80)"/><rect x="1668.0" y="538.0" width="502.0" height="4.6" fill="url(#c81)"/><rect x="1668.0" y="541.0" width="506.0" height="4.6" fill="url(#c82)"/><rect x="1668.0" y="544.0" width="510.0" height="4.6" fill="url(#c83)"/><rect x="1668.0" y="547.0" width="512.0" height="4.6" fill="url(#c84)"/><rect x="1668.0" y="550.0" width="516.0" height="4.6" fill="url(#c85)"/><rect x="1668.0" y="553.0" width="520.0" height="4.6" fill="url(#c86)"/><rect x="1668.0" y="556.0" width="524.0" height="4.6" fill="url(#c87)"/><rect x="1668.0" y="559.0" width="528.0" height="4.6" fill="url(#c88)"/><rect x="1668.0" y="562.0" width="532.0" height="4.6" fill="url(#c89)"/><rect x="1668.0" y="565.0" width="536.0" height="4.6" fill="url(#c90)"/><rect x="1668.0" y="568.0" width="540.0" height="4.6" fill="url(#c91)"/><rect x="1668.0" y="571.0" width="544.0" height="4.6" fill="url(#c92)"/><rect x="1668.0" y="574.0" width="548.0" height="4.6" fill="url(#c93)"/><rect x="1668.0" y="577.0" width="552.0" height="4.6" fill="url(#c94)"/><rect x="1668.0" y="580.0" width="556.0" height="4.6" fill="url(#c95)"/><rect x="1670.0" y="583.0" width="558.0" height="4.6" fill="url(#c96)"/><rect x="1670.0" y="586.0" width="562.0" height="4.6" fill="url(#c97)"/><rect x="1670.0" y="589.0" width="564.0" height="4.6" fill="url(#c98)"/><rect x="1670.0" y="592.0" width="568.0" height="4.6" fill="url(#c99)"/><rect x="1670.0" y="595.0" width="572.0" height="4.6" fill="url(#c100)"/><rect x="1672.0" y="598.0" width="574.0" height="4.6" fill="url(#c101)"/><rect x="1672.0" y="601.0" width="578.0" height="4.6" fill="url(#c102)"/><rect x="1672.0" y="604.0" width="582.0" height="4.6" fill="url(#c103)"/><rect x="1672.0" y="607.0" width="586.0" height="4.6" fill="url(#c104)"/><rect x="1674.0" y="610.0" width="588.0" height="4.6" fill="url(#c105)"/><rect x="1674.0" y="613.0" width="592.0" height="4.6" fill="url(#c106)"/><rect x="1674.0" y="616.0" width="596.0" height="4.6" fill="url(#c107)"/><rect x="1674.0" y="619.0" width="600.0" height="4.6" fill="url(#c108)"/><rect x="1676.0" y="622.0" width="602.0" height="4.6" fill="url(#c109)"/><rect x="1676.0" y="625.0" width="606.0" height="4.6" fill="url(#c110)"/><rect x="1676.0" y="628.0" width="610.0" height="4.6" fill="url(#c111)"/><rect x="1676.0" y="631.0" width="612.0" height="4.6" fill="url(#c112)"/><rect x="1678.0" y="634.0" width="614.0" height="4.6" fill="url(#c113)"/><rect x="1678.0" y="637.0" width="618.0" height="4.6" fill="url(#c114)"/><rect x="1678.0" y="640.0" width="622.0" height="4.6" fill="url(#c115)"/><rect x="1678.0" y="643.0" width="626.0" height="4.6" fill="url(#c116)"/><rect x="1680.0" y="646.0" width="628.0" height="4.6" fill="url(#c117)"/><rect x="1680.0" y="649.0" width="632.0" height="4.6" fill="url(#c118)"/><rect x="1680.0" y="652.0" width="636.0" height="4.6" fill="url(#c119)"/><rect x="1682.0" y="655.0" width="638.0" height="4.6" fill="url(#c120)"/><rect x="1682.0" y="658.0" width="642.0" height="4.6" fill="url(#c121)"/><rect x="1684.0" y="661.0" width="644.0" height="4.6" fill="url(#c122)"/><rect x="1684.0" y="664.0" width="648.0" height="4.6" fill="url(#c123)"/><rect x="1684.0" y="667.0" width="652.0" height="4.6" fill="url(#c124)"/><rect x="1686.0" y="670.0" width="652.0" height="4.6" fill="url(#c125)"/><rect x="1686.0" y="673.0" width="656.0" height="4.6" fill="url(#c126)"/><rect x="1686.0" y="676.0" width="660.0" height="4.6" fill="url(#c127)"/><rect x="1688.0" y="679.0" width="662.0" height="4.6" fill="url(#c128)"/><rect x="1688.0" y="682.0" width="666.0" height="4.6" fill="url(#c129)"/><rect x="1688.0" y="685.0" width="670.0" height="4.6" fill="url(#c130)"/><rect x="1690.0" y="688.0" width="672.0" height="4.6" fill="url(#c131)"/><rect x="1690.0" y="691.0" width="676.0" height="4.6" fill="url(#c132)"/><rect x="1690.0" y="694.0" width="680.0" height="4.6" fill="url(#c133)"/><rect x="1692.0" y="697.0" width="682.0" height="4.6" fill="url(#c134)"/><rect x="1692.0" y="700.0" width="686.0" height="4.6" fill="url(#c135)"/><rect x="1694.0" y="703.0" width="688.0" height="4.6" fill="url(#c136)"/><rect x="1694.0" y="706.0" width="692.0" height="4.6" fill="url(#c137)"/><rect x="1694.0" y="709.0" width="696.0" height="4.6" fill="url(#c138)"/><rect x="1696.0" y="712.0" width="696.0" height="4.6" fill="url(#c139)"/><rect x="1696.0" y="715.0" width="700.0" height="4.6" fill="url(#c140)"/><rect x="1696.0" y="718.0" width="704.0" height="4.6" fill="url(#c141)"/><rect x="1698.0" y="721.0" width="706.0" height="4.6" fill="url(#c142)"/><rect x="1698.0" y="724.0" width="710.0" height="4.6" fill="url(#c143)"/><rect x="1698.0" y="727.0" width="714.0" height="4.6" fill="url(#c144)"/><rect x="1700.0" y="730.0" width="716.0" height="4.6" fill="url(#c145)"/><rect x="1700.0" y="733.0" width="720.0" height="4.6" fill="url(#c146)"/><rect x="1702.0" y="736.0" width="722.0" height="4.6" fill="url(#c147)"/><rect x="1702.0" y="739.0" width="726.0" height="4.6" fill="url(#c148)"/><rect x="1702.0" y="742.0" width="730.0" height="4.6" fill="url(#c149)"/><rect x="1704.0" y="745.0" width="732.0" height="4.6" fill="url(#c150)"/><rect x="1704.0" y="748.0" width="736.0" height="4.6" fill="url(#c151)"/><rect x="1706.0" y="751.0" width="734.0" height="4.6" fill="url(#c152)"/><rect x="1706.0" y="754.0" width="734.0" height="4.6" fill="url(#c153)"/><rect x="1708.0" y="757.0" width="732.0" height="4.6" fill="url(#c154)"/><rect x="1708.0" y="760.0" width="724.0" height="4.6" fill="url(#c155)"/><rect x="1710.0" y="763.0" width="714.0" height="4.6" fill="url(#c156)"/><rect x="1710.0" y="766.0" width="706.0" height="4.6" fill="url(#c157)"/><rect x="1712.0" y="769.0" width="696.0" height="4.6" fill="url(#c158)"/><rect x="1712.0" y="772.0" width="688.0" height="4.6" fill="url(#c159)"/><rect x="1714.0" y="775.0" width="678.0" height="4.6" fill="url(#c160)"/><rect x="1714.0" y="778.0" width="670.0" height="4.6" fill="url(#c161)"/><rect x="1716.0" y="781.0" width="658.0" height="4.6" fill="url(#c162)"/><rect x="1716.0" y="784.0" width="650.0" height="4.6" fill="url(#c163)"/><rect x="1718.0" y="787.0" width="640.0" height="4.6" fill="url(#c164)"/><rect x="1718.0" y="790.0" width="632.0" height="4.6" fill="url(#c165)"/><rect x="1720.0" y="793.0" width="622.0" height="4.6" fill="url(#c166)"/><rect x="1720.0" y="796.0" width="614.0" height="4.6" fill="url(#c167)"/><rect x="1720.0" y="799.0" width="606.0" height="4.6" fill="url(#c168)"/><rect x="1722.0" y="802.0" width="596.0" height="4.6" fill="url(#c169)"/><rect x="1722.0" y="805.0" width="588.0" height="4.6" fill="url(#c170)"/><rect x="1724.0" y="808.0" width="578.0" height="4.6" fill="url(#c171)"/><rect x="1724.0" y="811.0" width="570.0" height="4.6" fill="url(#c172)"/><rect x="1726.0" y="814.0" width="560.0" height="4.6" fill="url(#c173)"/><rect x="1728.0" y="817.0" width="550.0" height="4.6" fill="url(#c174)"/><rect x="1728.0" y="820.0" width="542.0" height="4.6" fill="url(#c175)"/><rect x="1730.0" y="823.0" width="532.0" height="4.6" fill="url(#c176)"/><rect x="1732.0" y="826.0" width="520.0" height="4.6" fill="url(#c177)"/><rect x="1732.0" y="829.0" width="512.0" height="4.6" fill="url(#c178)"/><rect x="1734.0" y="832.0" width="502.0" height="4.6" fill="url(#c179)"/><rect x="1734.0" y="835.0" width="494.0" height="4.6" fill="url(#c180)"/><rect x="1736.0" y="838.0" width="484.0" height="4.6" fill="url(#c181)"/><rect x="1738.0" y="841.0" width="474.0" height="4.6" fill="url(#c182)"/><rect x="1738.0" y="844.0" width="466.0" height="4.6" fill="url(#c183)"/><rect x="1740.0" y="847.0" width="456.0" height="4.6" fill="url(#c184)"/><rect x="1742.0" y="850.0" width="446.0" height="4.6" fill="url(#c185)"/><rect x="1742.0" y="853.0" width="438.0" height="4.6" fill="url(#c186)"/><rect x="1744.0" y="856.0" width="428.0" height="4.6" fill="url(#c187)"/><rect x="1746.0" y="859.0" width="418.0" height="4.6" fill="url(#c188)"/><rect x="1746.0" y="862.0" width="410.0" height="4.6" fill="url(#c189)"/><rect x="1748.0" y="865.0" width="400.0" height="4.6" fill="url(#c190)"/><rect x="1748.0" y="868.0" width="392.0" height="4.6" fill="url(#c191)"/><rect x="1750.0" y="871.0" width="380.0" height="4.6" fill="url(#c192)"/><rect x="1752.0" y="874.0" width="370.0" height="4.6" fill="url(#c193)"/><rect x="1754.0" y="877.0" width="360.0" height="4.6" fill="url(#c194)"/><rect x="1756.0" y="880.0" width="350.0" height="4.6" fill="url(#c195)"/><rect x="1756.0" y="883.0" width="342.0" height="4.6" fill="url(#c196)"/><rect x="1758.0" y="886.0" width="332.0" height="4.6" fill="url(#c197)"/><rect x="1760.0" y="889.0" width="322.0" height="4.6" fill="url(#c198)"/><rect x="1762.0" y="892.0" width="312.0" height="4.6" fill="url(#c199)"/><rect x="1762.0" y="895.0" width="304.0" height="4.6" fill="url(#c200)"/><rect x="1764.0" y="898.0" width="294.0" height="4.6" fill="url(#c201)"/><rect x="1766.0" y="901.0" width="284.0" height="4.6" fill="url(#c202)"/><rect x="1768.0" y="904.0" width="274.0" height="4.6" fill="url(#c203)"/><rect x="1770.0" y="907.0" width="264.0" height="4.6" fill="url(#c204)"/><rect x="1772.0" y="910.0" width="254.0" height="4.6" fill="url(#c205)"/><rect x="1774.0" y="913.0" width="244.0" height="4.6" fill="url(#c206)"/><rect x="1774.0" y="916.0" width="234.0" height="4.6" fill="url(#c207)"/><rect x="1776.0" y="919.0" width="224.0" height="4.6" fill="url(#c208)"/><rect x="1778.0" y="922.0" width="214.0" height="4.6" fill="url(#c209)"/><rect x="1780.0" y="925.0" width="204.0" height="4.6" fill="url(#c210)"/><rect x="1782.0" y="928.0" width="194.0" height="4.6" fill="url(#c211)"/><rect x="1786.0" y="931.0" width="182.0" height="4.6" fill="url(#c212)"/><rect x="1788.0" y="934.0" width="172.0" height="4.6" fill="url(#c213)"/><rect x="1790.0" y="937.0" width="162.0" height="4.6" fill="url(#c214)"/><rect x="1792.0" y="940.0" width="152.0" height="4.6" fill="url(#c215)"/><rect x="1794.0" y="943.0" width="142.0" height="4.6" fill="url(#c216)"/><rect x="1798.0" y="946.0" width="130.0" height="4.6" fill="url(#c217)"/><rect x="1802.0" y="949.0" width="118.0" height="4.6" fill="url(#c218)"/><rect x="1804.0" y="952.0" width="108.0" height="4.6" fill="url(#c219)"/><rect x="1808.0" y="955.0" width="96.0" height="4.6" fill="url(#c220)"/><rect x="1812.0" y="958.0" width="84.0" height="4.6" fill="url(#c221)"/><rect x="1816.0" y="961.0" width="70.0" height="4.6" fill="url(#c222)"/><rect x="1822.0" y="964.0" width="56.0" height="4.6" fill="url(#c223)"/><rect x="1826.0" y="967.0" width="44.0" height="4.6" fill="url(#c224)"/>
<path d="M1600 200H2600V1000H1600Z M2335.8 706.3 L1981.2 486.3 L1824.8 926.4Z" fill="#000" fill-opacity="0.4" fill-rule="evenodd"/></g>
<rect x="1668.15" y="290.35" width="877.00" height="684.80" fill="none" stroke="#9c9c9c" stroke-width="2.3"/>
<rect x="1660.00" y="974.40" width="6.60" height="1.60" fill="#dcdcdc"/>
<text x="1648.4" y="985.0" font-size="18.3" fill="#e6e6e6" textLength="10.9" lengthAdjust="spacingAndGlyphs">0</text>
<rect x="1667.40" y="975.50" width="2.00" height="8.00" fill="#dcdcdc"/>
<text x="1662.9" y="1004.4" font-size="18.3" fill="#e6e6e6" textLength="10.9" lengthAdjust="spacingAndGlyphs">0</text>
<rect x="1660.00" y="894.59" width="6.60" height="1.60" fill="#dcdcdc"/>
<text x="1632.3" y="904.7" font-size="18.3" fill="#e6e6e6" textLength="27.2" lengthAdjust="spacingAndGlyphs">0.1</text>
<rect x="1771.60" y="975.50" width="2.00" height="8.00" fill="#dcdcdc"/>
<text x="1759.1" y="1004.4" font-size="18.3" fill="#e6e6e6" textLength="27.2" lengthAdjust="spacingAndGlyphs">0.1</text>
<rect x="1660.00" y="812.88" width="6.60" height="1.60" fill="#dcdcdc"/>
<text x="1632.3" y="823.0" font-size="18.3" fill="#e6e6e6" textLength="27.2" lengthAdjust="spacingAndGlyphs">0.2</text>
<rect x="1875.90" y="975.50" width="2.00" height="8.00" fill="#dcdcdc"/>
<text x="1863.4" y="1004.4" font-size="18.3" fill="#e6e6e6" textLength="27.2" lengthAdjust="spacingAndGlyphs">0.2</text>
<rect x="1660.00" y="731.17" width="6.60" height="1.60" fill="#dcdcdc"/>
<text x="1632.2" y="741.3" font-size="18.3" fill="#e6e6e6" textLength="27.2" lengthAdjust="spacingAndGlyphs">0.3</text>
<rect x="1980.20" y="975.50" width="2.00" height="8.00" fill="#dcdcdc"/>
<text x="1967.6" y="1004.4" font-size="18.3" fill="#e6e6e6" textLength="27.2" lengthAdjust="spacingAndGlyphs">0.3</text>
<rect x="1660.00" y="649.46" width="6.60" height="1.60" fill="#dcdcdc"/>
<text x="1631.9" y="659.6" font-size="18.3" fill="#e6e6e6" textLength="27.2" lengthAdjust="spacingAndGlyphs">0.4</text>
<rect x="2084.50" y="975.50" width="2.00" height="8.00" fill="#dcdcdc"/>
<text x="2071.8" y="1004.4" font-size="18.3" fill="#e6e6e6" textLength="27.2" lengthAdjust="spacingAndGlyphs">0.4</text>
<rect x="1660.00" y="567.75" width="6.60" height="1.60" fill="#dcdcdc"/>
<text x="1632.2" y="577.8" font-size="18.3" fill="#e6e6e6" textLength="27.2" lengthAdjust="spacingAndGlyphs">0.5</text>
<rect x="2188.80" y="975.50" width="2.00" height="8.00" fill="#dcdcdc"/>
<text x="2176.2" y="1004.4" font-size="18.3" fill="#e6e6e6" textLength="27.2" lengthAdjust="spacingAndGlyphs">0.5</text>
<rect x="1660.00" y="486.04" width="6.60" height="1.60" fill="#dcdcdc"/>
<text x="1632.2" y="496.1" font-size="18.3" fill="#e6e6e6" textLength="27.2" lengthAdjust="spacingAndGlyphs">0.6</text>
<rect x="2293.10" y="975.50" width="2.00" height="8.00" fill="#dcdcdc"/>
<text x="2280.5" y="1004.4" font-size="18.3" fill="#e6e6e6" textLength="27.2" lengthAdjust="spacingAndGlyphs">0.6</text>
<rect x="1660.00" y="404.33" width="6.60" height="1.60" fill="#dcdcdc"/>
<text x="1632.3" y="414.4" font-size="18.3" fill="#e6e6e6" textLength="27.2" lengthAdjust="spacingAndGlyphs">0.7</text>
<rect x="2397.40" y="975.50" width="2.00" height="8.00" fill="#dcdcdc"/>
<text x="2384.9" y="1004.4" font-size="18.3" fill="#e6e6e6" textLength="27.2" lengthAdjust="spacingAndGlyphs">0.7</text>
<rect x="1660.00" y="322.62" width="6.60" height="1.60" fill="#dcdcdc"/>
<text x="1632.2" y="332.7" font-size="18.3" fill="#e6e6e6" textLength="27.2" lengthAdjust="spacingAndGlyphs">0.8</text>
<rect x="2501.70" y="975.50" width="2.00" height="8.00" fill="#dcdcdc"/>
<text x="2489.1" y="1004.4" font-size="18.3" fill="#e6e6e6" textLength="27.2" lengthAdjust="spacingAndGlyphs">0.8</text>
<text x="2037.5" y="283.0" font-size="19" fill="#e6e6e6" textLength="103.2" lengthAdjust="spacingAndGlyphs">CIE 1931 xy</text>
<rect x="1970.6" y="476.4" width="19" height="19" fill="none" stroke="#fff" stroke-opacity="0.96" stroke-width="2.35"/>
<rect x="1974.1" y="524.1" width="19" height="19" fill="none" stroke="#fff" stroke-opacity="0.96" stroke-width="2.35"/>
<rect x="1976.2" y="566.5" width="19" height="19" fill="none" stroke="#fff" stroke-opacity="0.96" stroke-width="2.35"/>
<rect x="1979.9" y="608.8" width="19" height="19" fill="none" stroke="#fff" stroke-opacity="0.96" stroke-width="2.35"/>
<rect x="1981.3" y="652.9" width="19" height="19" fill="none" stroke="#fff" stroke-opacity="0.96" stroke-width="2.35"/>
<rect x="2095.7" y="553.8" width="19" height="19" fill="none" stroke="#fff" stroke-opacity="0.96" stroke-width="2.35"/>
<rect x="2072.0" y="583.2" width="19" height="19" fill="none" stroke="#fff" stroke-opacity="0.96" stroke-width="2.35"/>
<rect x="2051.9" y="608.8" width="19" height="19" fill="none" stroke="#fff" stroke-opacity="0.96" stroke-width="2.35"/>
<rect x="2029.5" y="638.5" width="19" height="19" fill="none" stroke="#fff" stroke-opacity="0.96" stroke-width="2.35"/>
<rect x="2007.5" y="667.8" width="19" height="19" fill="none" stroke="#fff" stroke-opacity="0.96" stroke-width="2.35"/>
<rect x="2325.9" y="696.1" width="19" height="19" fill="none" stroke="#fff" stroke-opacity="0.96" stroke-width="2.35"/>
<rect x="2250.3" y="696.1" width="19" height="19" fill="none" stroke="#fff" stroke-opacity="0.96" stroke-width="2.35"/>
<rect x="2184.4" y="696.1" width="19" height="19" fill="none" stroke="#fff" stroke-opacity="0.96" stroke-width="2.35"/>
<rect x="2121.7" y="696.1" width="19" height="19" fill="none" stroke="#fff" stroke-opacity="0.96" stroke-width="2.35"/>
<rect x="2051.7" y="697.3" width="19" height="19" fill="none" stroke="#fff" stroke-opacity="0.96" stroke-width="2.35"/>
<rect x="1893.1" y="697.5" width="19" height="19" fill="none" stroke="#fff" stroke-opacity="0.96" stroke-width="2.35"/>
<rect x="1911.8" y="697.5" width="19" height="19" fill="none" stroke="#fff" stroke-opacity="0.96" stroke-width="2.35"/>
<rect x="1930.3" y="697.5" width="19" height="19" fill="none" stroke="#fff" stroke-opacity="0.96" stroke-width="2.35"/>
<rect x="1948.7" y="697.5" width="19" height="19" fill="none" stroke="#fff" stroke-opacity="0.96" stroke-width="2.35"/>
<rect x="1967.1" y="697.5" width="19" height="19" fill="none" stroke="#fff" stroke-opacity="0.96" stroke-width="2.35"/>
<rect x="1813.8" y="916.4" width="19" height="19" fill="none" stroke="#fff" stroke-opacity="0.96" stroke-width="2.35"/>
<rect x="1851.0" y="869.1" width="19" height="19" fill="none" stroke="#fff" stroke-opacity="0.96" stroke-width="2.35"/>
<rect x="1883.7" y="826.5" width="19" height="19" fill="none" stroke="#fff" stroke-opacity="0.96" stroke-width="2.35"/>
<rect x="1917.2" y="783.9" width="19" height="19" fill="none" stroke="#fff" stroke-opacity="0.96" stroke-width="2.35"/>
<rect x="1950.5" y="741.5" width="19" height="19" fill="none" stroke="#fff" stroke-opacity="0.96" stroke-width="2.35"/>
<rect x="1992.4" y="839.3" width="19" height="19" fill="none" stroke="#fff" stroke-opacity="0.96" stroke-width="2.35"/>
<rect x="1990.8" y="809.8" width="19" height="19" fill="none" stroke="#fff" stroke-opacity="0.96" stroke-width="2.35"/>
<rect x="1989.9" y="780.6" width="19" height="19" fill="none" stroke="#fff" stroke-opacity="0.96" stroke-width="2.35"/>
<rect x="1989.4" y="754.6" width="19" height="19" fill="none" stroke="#fff" stroke-opacity="0.96" stroke-width="2.35"/>
<rect x="1987.1" y="725.4" width="19" height="19" fill="none" stroke="#fff" stroke-opacity="0.96" stroke-width="2.35"/>
<rect x="1985.6" y="697.7" width="18.4" height="18.8" fill="#fff" fill-opacity="0.55" stroke="#000" stroke-width="1.9"/>
<circle cx="2009.7" cy="513.1" r="5.7" fill="#18a018" stroke="#000" stroke-width="1.5"/>
<circle cx="2007.6" cy="548.3" r="5.7" fill="#4fb04f" stroke="#000" stroke-width="1.5"/>
<circle cx="2004.1" cy="586.9" r="5.7" fill="#72b472" stroke="#000" stroke-width="1.5"/>
<circle cx="2002.3" cy="622.1" r="5.7" fill="#8cb88c" stroke="#000" stroke-width="1.5"/>
<circle cx="2000.2" cy="655.1" r="5.7" fill="#a2bca2" stroke="#000" stroke-width="1.5"/>
<circle cx="2111.0" cy="576.0" r="5.7" fill="#c2b624" stroke="#000" stroke-width="1.5"/>
<circle cx="2088.9" cy="598.1" r="5.7" fill="#c2b84e" stroke="#000" stroke-width="1.5"/>
<circle cx="2066.6" cy="622.1" r="5.7" fill="#c0ba6c" stroke="#000" stroke-width="1.5"/>
<circle cx="2044.4" cy="644.4" r="5.7" fill="#c0bc85" stroke="#000" stroke-width="1.5"/>
<circle cx="2022.3" cy="668.2" r="5.7" fill="#bebf9e" stroke="#000" stroke-width="1.5"/>
<circle cx="2057.7" cy="690.1" r="5.7" fill="#c68e94" stroke="#000" stroke-width="1.5"/>
<circle cx="2116.2" cy="688.2" r="5.7" fill="#c8707a" stroke="#000" stroke-width="1.5"/>
<circle cx="2175.4" cy="686.4" r="5.7" fill="#c4525e" stroke="#000" stroke-width="1.5"/>
<circle cx="2229.0" cy="684.8" r="5.7" fill="#c03444" stroke="#000" stroke-width="1.5"/>
<circle cx="2278.8" cy="682.9" r="5.7" fill="#b81420" stroke="#000" stroke-width="1.5"/>
<circle cx="1917.2" cy="695.5" r="5.7" fill="#22b4be" stroke="#000" stroke-width="1.5"/>
<circle cx="1932.3" cy="695.5" r="5.7" fill="#58b8be" stroke="#000" stroke-width="1.5"/>
<circle cx="1948.6" cy="695.4" r="5.7" fill="#7cbcc0" stroke="#000" stroke-width="1.5"/>
<circle cx="1965.3" cy="693.7" r="5.7" fill="#98bec0" stroke="#000" stroke-width="1.5"/>
<circle cx="1980.0" cy="694.0" r="5.7" fill="#aebfbf" stroke="#000" stroke-width="1.5"/>
<circle cx="1829.1" cy="871.0" r="5.7" fill="#0808c8" stroke="#000" stroke-width="1.5"/>
<circle cx="1860.3" cy="837.7" r="5.7" fill="#5a50c0" stroke="#000" stroke-width="1.5"/>
<circle cx="1895.3" cy="800.9" r="5.7" fill="#7c74c0" stroke="#000" stroke-width="1.5"/>
<circle cx="1930.2" cy="764.1" r="5.7" fill="#948ec0" stroke="#000" stroke-width="1.5"/>
<circle cx="1961.6" cy="731.0" r="5.7" fill="#aaa6c0" stroke="#000" stroke-width="1.5"/>
<circle cx="1991.0" cy="802.3" r="5.7" fill="#c01cb8" stroke="#000" stroke-width="1.5"/>
<circle cx="1991.0" cy="782.2" r="5.7" fill="#c050b8" stroke="#000" stroke-width="1.5"/>
<circle cx="1993.1" cy="758.3" r="5.7" fill="#c274ba" stroke="#000" stroke-width="1.5"/>
<circle cx="1995.1" cy="739.9" r="5.7" fill="#c290bc" stroke="#000" stroke-width="1.5"/>
<circle cx="1996.6" cy="717.7" r="5.7" fill="#c2a8be" stroke="#000" stroke-width="1.5"/>
<circle cx="1994.9" cy="695.5" r="5.7" fill="#fff" stroke="#000" stroke-width="1.5"/>
</svg>
<svg class="a" style="left:2290px;top:285px" width="260" height="262" viewBox="2290 285 260 262"><defs><clipPath id="ins"><rect x="2295.6" y="289.5" width="250.5" height="251.7"/></clipPath><linearGradient id="i0" gradientUnits="userSpaceOnUse" x1="2291.6" x2="2547.6" y1="0" y2="0"><stop offset="0.0000" stop-color="#adff00"/><stop offset="0.5156" stop-color="#e1ff00"/><stop offset="0.7969" stop-color="#ffff00"/><stop offset="1.0000" stop-color="#ffea00"/></linearGradient><linearGradient id="i1" gradientUnits="userSpaceOnUse" x1="2291.6" x2="2547.6" y1="0" y2="0"><stop offset="0.0000" stop-color="#aeff00"/><stop offset="0.5156" stop-color="#e2ff00"/><stop offset="0.7812" stop-color="#feff00"/><stop offset="0.8281" stop-color="#fffb00"/><stop offset="1.0000" stop-color="#ffe900"/></linearGradient><linearGradient id="i2" gradientUnits="userSpaceOnUse" x1="2291.6" x2="2547.6" y1="0" y2="0"><stop offset="0.0000" stop-color="#afff00"/><stop offset="0.5156" stop-color="#e3ff00"/><stop offset="0.7812" stop-color="#ffff00"/><stop offset="1.0000" stop-color="#ffe800"/></linearGradient><linearGradient id="i3" gradientUnits="userSpaceOnUse" x1="2291.6" x2="2547.6" y1="0" y2="0"><stop offset="0.0000" stop-color="#b0ff00"/><stop offset="0.5156" stop-color="#e4ff00"/><stop offset="0.7656" stop-color="#feff00"/><stop offset="1.0000" stop-color="#ffe700"/></linearGradient><linearGradient id="i4" gradientUnits="userSpaceOnUse" x1="2291.6" x2="2547.6" y1="0" y2="0"><stop offset="0.0000" stop-color="#b0ff00"/><stop offset="0.5156" stop-color="#e4ff00"/><stop offset="0.7656" stop-color="#fffe00"/><stop offset="1.0000" stop-color="#ffe700"/></linearGradient><linearGradient id="i5" gradientUnits="userSpaceOnUse" x1="2291.6" x2="2547.6" y1="0" y2="0"><stop offset="0.0000" stop-color="#b1ff00"/><stop offset="0.5156" stop-color="#e5ff00"/><stop offset="0.7500" stop-color="#ffff00"/><stop offset="1.0000" stop-color="#ffe600"/></linearGradient><linearGradient id="i6" gradientUnits="userSpaceOnUse" x1="2291.6" x2="2547.6" y1="0" y2="0"><stop offset="0.0000" stop-color="#b2ff00"/><stop offset="0.5000" stop-color="#e5ff00"/><stop offset="0.7344" stop-color="#feff00"/><stop offset="0.7812" stop-color="#fffb00"/><stop offset="1.0000" stop-color="#ffe500"/></linearGradient><linearGradient id="i7" gradientUnits="userSpaceOnUse" x1="2291.6" x2="2547.6" y1="0" y2="0"><stop offset="0.0000" stop-color="#b3ff01"/><stop offset="0.2500" stop-color="#ccff00"/><stop offset="0.7344" stop-color="#ffff00"/><stop offset="1.0000" stop-color="#ffe400"/></linearGradient><linearGradient id="i8" gradientUnits="userSpaceOnUse" x1="2291.6" x2="2547.6" y1="0" y2="0"><stop offset="0.0000" stop-color="#b3ff01"/><stop offset="0.1250" stop-color="#c0ff00"/><stop offset="0.6250" stop-color="#f4ff00"/><stop offset="0.7188" stop-color="#ffff00"/><stop offset="1.0000" stop-color="#ffe300"/></linearGradient><linearGradient id="i9" gradientUnits="userSpaceOnUse" x1="2291.6" x2="2547.6" y1="0" y2="0"><stop offset="0.0000" stop-color="#b4ff02"/><stop offset="0.1250" stop-color="#c1ff00"/><stop offset="0.6250" stop-color="#f5ff00"/><stop offset="0.7188" stop-color="#fffe00"/><stop offset="0.9844" stop-color="#ffe300"/><stop offset="1.0000" stop-color="#ffe200"/></linearGradient><linearGradient id="i10" gradientUnits="userSpaceOnUse" x1="2291.6" x2="2547.6" y1="0" y2="0"><stop offset="0.0000" stop-color="#b5ff02"/><stop offset="0.1250" stop-color="#c2ff00"/><stop offset="0.6250" stop-color="#f6ff00"/><stop offset="0.7031" stop-color="#ffff00"/><stop offset="0.9688" stop-color="#ffe400"/><stop offset="1.0000" stop-color="#ffe100"/></linearGradient><linearGradient id="i11" gradientUnits="userSpaceOnUse" x1="2291.6" x2="2547.6" y1="0" y2="0"><stop offset="0.0000" stop-color="#b6ff02"/><stop offset="0.1406" stop-color="#c4ff00"/><stop offset="0.6250" stop-color="#f7ff00"/><stop offset="0.6875" stop-color="#feff00"/><stop offset="0.7500" stop-color="#fff900"/><stop offset="1.0000" stop-color="#ffe000"/></linearGradient><linearGradient id="i12" gradientUnits="userSpaceOnUse" x1="2291.6" x2="2547.6" y1="0" y2="0"><stop offset="0.0000" stop-color="#b7ff03"/><stop offset="0.1562" stop-color="#c6ff00"/><stop offset="0.6406" stop-color="#faff00"/><stop offset="0.6875" stop-color="#ffff00"/><stop offset="0.9531" stop-color="#ffe300"/><stop offset="1.0000" stop-color="#ffdf00"/></linearGradient><linearGradient id="i13" gradientUnits="userSpaceOnUse" x1="2291.6" x2="2547.6" y1="0" y2="0"><stop offset="0.0000" stop-color="#b8ff03"/><stop offset="0.1719" stop-color="#c9ff00"/><stop offset="0.6562" stop-color="#fdff00"/><stop offset="0.6719" stop-color="#ffff00"/><stop offset="0.9688" stop-color="#ffe100"/><stop offset="1.0000" stop-color="#ffde00"/></linearGradient><linearGradient id="i14" gradientUnits="userSpaceOnUse" x1="2291.6" x2="2547.6" y1="0" y2="0"><stop offset="0.0000" stop-color="#b8ff04"/><stop offset="0.2031" stop-color="#cdff00"/><stop offset="0.6562" stop-color="#feff00"/><stop offset="0.6875" stop-color="#fffd00"/><stop offset="0.9531" stop-color="#ffe200"/><stop offset="1.0000" stop-color="#ffdd00"/></linearGradient><linearGradient id="i15" gradientUnits="userSpaceOnUse" x1="2291.6" x2="2547.6" y1="0" y2="0"><stop offset="0.0000" stop-color="#b9ff04"/><stop offset="0.2188" stop-color="#d0ff00"/><stop offset="0.6562" stop-color="#ffff00"/><stop offset="0.9219" stop-color="#ffe400"/><stop offset="1.0000" stop-color="#ffdc00"/></linearGradient><linearGradient id="i16" gradientUnits="userSpaceOnUse" x1="2291.6" x2="2547.6" y1="0" y2="0"><stop offset="0.0000" stop-color="#baff05"/><stop offset="0.2344" stop-color="#d2ff00"/><stop offset="0.6406" stop-color="#feff00"/><stop offset="0.7031" stop-color="#fff900"/><stop offset="0.9688" stop-color="#ffde00"/><stop offset="1.0000" stop-color="#ffdb00"/></linearGradient><linearGradient id="i17" gradientUnits="userSpaceOnUse" x1="2291.6" x2="2547.6" y1="0" y2="0"><stop offset="0.0000" stop-color="#bbff05"/><stop offset="0.2500" stop-color="#d5ff00"/><stop offset="0.6406" stop-color="#ffff00"/><stop offset="0.8906" stop-color="#ffe500"/><stop offset="1.0000" stop-color="#ffdb00"/></linearGradient><linearGradient id="i18" gradientUnits="userSpaceOnUse" x1="2291.6" x2="2547.6" y1="0" y2="0"><stop offset="0.0000" stop-color="#bcff06"/><stop offset="0.2656" stop-color="#d7ff00"/><stop offset="0.6250" stop-color="#ffff00"/><stop offset="0.9219" stop-color="#ffe100"/><stop offset="1.0000" stop-color="#ffda00"/></linearGradient><linearGradient id="i19" gradientUnits="userSpaceOnUse" x1="2291.6" x2="2547.6" y1="0" y2="0"><stop offset="0.0000" stop-color="#bdff06"/><stop offset="0.2969" stop-color="#dbff00"/><stop offset="0.6094" stop-color="#feff00"/><stop offset="0.6406" stop-color="#fffd00"/><stop offset="0.8906" stop-color="#ffe300"/><stop offset="1.0000" stop-color="#ffd900"/></linearGradient><linearGradient id="i20" gradientUnits="userSpaceOnUse" x1="2291.6" x2="2547.6" y1="0" y2="0"><stop offset="0.0000" stop-color="#bdff07"/><stop offset="0.3125" stop-color="#deff00"/><stop offset="0.6094" stop-color="#ffff00"/><stop offset="0.8594" stop-color="#ffe500"/><stop offset="1.0000" stop-color="#ffd800"/></linearGradient><linearGradient id="i21" gradientUnits="userSpaceOnUse" x1="2291.6" x2="2547.6" y1="0" y2="0"><stop offset="0.0000" stop-color="#beff07"/><stop offset="0.3281" stop-color="#e1ff00"/><stop offset="0.5938" stop-color="#feff00"/><stop offset="0.6719" stop-color="#fff700"/><stop offset="0.9375" stop-color="#ffdd00"/><stop offset="1.0000" stop-color="#ffd700"/></linearGradient><linearGradient id="i22" gradientUnits="userSpaceOnUse" x1="2291.6" x2="2547.6" y1="0" y2="0"><stop offset="0.0000" stop-color="#bfff07"/><stop offset="0.3438" stop-color="#e3ff00"/><stop offset="0.5938" stop-color="#ffff00"/><stop offset="0.8438" stop-color="#ffe400"/><stop offset="1.0000" stop-color="#ffd600"/></linearGradient><linearGradient id="i23" gradientUnits="userSpaceOnUse" x1="2291.6" x2="2547.6" y1="0" y2="0"><stop offset="0.0000" stop-color="#c0ff08"/><stop offset="0.3750" stop-color="#e8ff00"/><stop offset="0.5781" stop-color="#ffff00"/><stop offset="0.8750" stop-color="#ffe100"/><stop offset="1.0000" stop-color="#ffd500"/></linearGradient><linearGradient id="i24" gradientUnits="userSpaceOnUse" x1="2291.6" x2="2547.6" y1="0" y2="0"><stop offset="0.0000" stop-color="#c1ff08"/><stop offset="0.3906" stop-color="#ebff00"/><stop offset="0.5625" stop-color="#feff00"/><stop offset="0.5938" stop-color="#fffc00"/><stop offset="0.8438" stop-color="#ffe300"/><stop offset="1.0000" stop-color="#ffd400"/></linearGradient><linearGradient id="i25" gradientUnits="userSpaceOnUse" x1="2291.6" x2="2547.6" y1="0" y2="0"><stop offset="0.0000" stop-color="#c2ff09"/><stop offset="0.4062" stop-color="#edff00"/><stop offset="0.5625" stop-color="#ffff00"/><stop offset="0.8125" stop-color="#ffe500"/><stop offset="1.0000" stop-color="#ffd300"/></linearGradient><linearGradient id="i26" gradientUnits="userSpaceOnUse" x1="2291.6" x2="2547.6" y1="0" y2="0"><stop offset="0.0000" stop-color="#c3ff09"/><stop offset="0.4219" stop-color="#f0ff00"/><stop offset="0.5469" stop-color="#feff00"/><stop offset="0.6562" stop-color="#fff400"/><stop offset="0.9219" stop-color="#ffd900"/><stop offset="1.0000" stop-color="#ffd300"/></linearGradient><linearGradient id="i27" gradientUnits="userSpaceOnUse" x1="2291.6" x2="2547.6" y1="0" y2="0"><stop offset="0.0000" stop-color="#c3ff0a"/><stop offset="0.4531" stop-color="#f5ff00"/><stop offset="0.5469" stop-color="#ffff00"/><stop offset="0.7969" stop-color="#ffe400"/><stop offset="1.0000" stop-color="#ffd200"/></linearGradient><linearGradient id="i28" gradientUnits="userSpaceOnUse" x1="2291.6" x2="2547.6" y1="0" y2="0"><stop offset="0.0000" stop-color="#c4ff0a"/><stop offset="0.4688" stop-color="#f8ff00"/><stop offset="0.5312" stop-color="#ffff00"/><stop offset="0.8125" stop-color="#ffe200"/><stop offset="1.0000" stop-color="#ffd100"/></linearGradient><linearGradient id="i29" gradientUnits="userSpaceOnUse" x1="2291.6" x2="2547.6" y1="0" y2="0"><stop offset="0.0000" stop-color="#c5ff0b"/><stop offset="0.4688" stop-color="#f9ff00"/><stop offset="0.5312" stop-color="#fffe00"/><stop offset="0.7812" stop-color="#ffe400"/><stop offset="1.0000" stop-color="#ffd000"/></linearGradient><linearGradient id="i30" gradientUnits="userSpaceOnUse" x1="2291.6" x2="2547.6" y1="0" y2="0"><stop offset="0.0000" stop-color="#c6ff0b"/><stop offset="0.4688" stop-color="#faff00"/><stop offset="0.5156" stop-color="#ffff00"/><stop offset="0.7656" stop-color="#ffe400"/><stop offset="1.0000" stop-color="#ffcf00"/></linearGradient><linearGradient id="i31" gradientUnits="userSpaceOnUse" x1="2291.6" x2="2547.6" y1="0" y2="0"><stop offset="0.0000" stop-color="#c7ff0c"/><stop offset="0.4688" stop-color="#fbff01"/><stop offset="0.5000" stop-color="#feff00"/><stop offset="0.6875" stop-color="#ffeb00"/><stop offset="0.9688" stop-color="#ffd100"/><stop offset="1.0000" stop-color="#ffce00"/></linearGradient><linearGradient id="i32" gradientUnits="userSpaceOnUse" x1="2291.6" x2="2547.6" y1="0" y2="0"><stop offset="0.0000" stop-color="#c8ff0c"/><stop offset="0.4688" stop-color="#fcff01"/><stop offset="0.5000" stop-color="#ffff01"/><stop offset="0.7500" stop-color="#ffe400"/><stop offset="1.0000" stop-color="#ffcd00"/></linearGradient><linearGradient id="i33" gradientUnits="userSpaceOnUse" x1="2291.6" x2="2547.6" y1="0" y2="0"><stop offset="0.0000" stop-color="#c9ff0d"/><stop offset="0.4688" stop-color="#fdff02"/><stop offset="0.4844" stop-color="#ffff01"/><stop offset="0.5781" stop-color="#fff500"/><stop offset="0.8438" stop-color="#ffda00"/><stop offset="1.0000" stop-color="#ffcc00"/></linearGradient><linearGradient id="i34" gradientUnits="userSpaceOnUse" x1="2291.6" x2="2547.6" y1="0" y2="0"><stop offset="0.0000" stop-color="#caff0d"/><stop offset="0.4688" stop-color="#feff02"/><stop offset="0.5000" stop-color="#fffc02"/><stop offset="0.5938" stop-color="#fff200"/><stop offset="0.8594" stop-color="#ffd800"/><stop offset="1.0000" stop-color="#ffcc00"/></linearGradient><linearGradient id="i35" gradientUnits="userSpaceOnUse" x1="2291.6" x2="2547.6" y1="0" y2="0"><stop offset="0.0000" stop-color="#cbff0e"/><stop offset="0.4688" stop-color="#ffff03"/><stop offset="0.6094" stop-color="#ffef00"/><stop offset="0.8750" stop-color="#ffd500"/><stop offset="1.0000" stop-color="#ffcb00"/></linearGradient><linearGradient id="i36" gradientUnits="userSpaceOnUse" x1="2291.6" x2="2547.6" y1="0" y2="0"><stop offset="0.0000" stop-color="#ccff0e"/><stop offset="0.4531" stop-color="#feff04"/><stop offset="0.6250" stop-color="#ffed00"/><stop offset="0.8906" stop-color="#ffd300"/><stop offset="1.0000" stop-color="#ffca00"/></linearGradient><linearGradient id="i37" gradientUnits="userSpaceOnUse" x1="2291.6" x2="2547.6" y1="0" y2="0"><stop offset="0.0000" stop-color="#ccff0f"/><stop offset="0.4531" stop-color="#ffff04"/><stop offset="0.6406" stop-color="#ffea00"/><stop offset="0.9062" stop-color="#ffd100"/><stop offset="1.0000" stop-color="#ffc900"/></linearGradient><linearGradient id="i38" gradientUnits="userSpaceOnUse" x1="2291.6" x2="2547.6" y1="0" y2="0"><stop offset="0.0000" stop-color="#cdff0f"/><stop offset="0.4375" stop-color="#ffff05"/><stop offset="0.6562" stop-color="#ffe700"/><stop offset="0.9375" stop-color="#ffcd00"/><stop offset="1.0000" stop-color="#ffc800"/></linearGradient><linearGradient id="i39" gradientUnits="userSpaceOnUse" x1="2291.6" x2="2547.6" y1="0" y2="0"><stop offset="0.0000" stop-color="#ceff10"/><stop offset="0.4219" stop-color="#feff06"/><stop offset="0.4531" stop-color="#fffc05"/><stop offset="0.6875" stop-color="#ffe300"/><stop offset="0.9688" stop-color="#ffca00"/><stop offset="1.0000" stop-color="#ffc700"/></linearGradient><linearGradient id="i40" gradientUnits="userSpaceOnUse" x1="2291.6" x2="2547.6" y1="0" y2="0"><stop offset="0.0000" stop-color="#cfff10"/><stop offset="0.4219" stop-color="#ffff06"/><stop offset="0.6719" stop-color="#ffe400"/><stop offset="0.9531" stop-color="#ffca00"/><stop offset="1.0000" stop-color="#ffc600"/></linearGradient><linearGradient id="i41" gradientUnits="userSpaceOnUse" x1="2291.6" x2="2547.6" y1="0" y2="0"><stop offset="0.0000" stop-color="#d0ff11"/><stop offset="0.4062" stop-color="#feff07"/><stop offset="0.7031" stop-color="#ffe000"/><stop offset="0.9844" stop-color="#ffc700"/><stop offset="1.0000" stop-color="#ffc600"/></linearGradient><linearGradient id="i42" gradientUnits="userSpaceOnUse" x1="2291.6" x2="2547.6" y1="0" y2="0"><stop offset="0.0000" stop-color="#d1ff11"/><stop offset="0.4062" stop-color="#fffe08"/><stop offset="0.6562" stop-color="#ffe301"/><stop offset="0.7656" stop-color="#ffd900"/><stop offset="1.0000" stop-color="#ffc500"/></linearGradient><linearGradient id="i43" gradientUnits="userSpaceOnUse" x1="2291.6" x2="2547.6" y1="0" y2="0"><stop offset="0.0000" stop-color="#d2ff12"/><stop offset="0.3906" stop-color="#ffff09"/><stop offset="0.6562" stop-color="#ffe202"/><stop offset="0.7812" stop-color="#ffd700"/><stop offset="1.0000" stop-color="#ffc400"/></linearGradient><linearGradient id="i44" gradientUnits="userSpaceOnUse" x1="2291.6" x2="2547.6" y1="0" y2="0"><stop offset="0.0000" stop-color="#d3ff12"/><stop offset="0.3750" stop-color="#feff0a"/><stop offset="0.4062" stop-color="#fffc09"/><stop offset="0.6562" stop-color="#ffe102"/><stop offset="0.7969" stop-color="#ffd400"/><stop offset="1.0000" stop-color="#ffc300"/></linearGradient><linearGradient id="i45" gradientUnits="userSpaceOnUse" x1="2291.6" x2="2547.6" y1="0" y2="0"><stop offset="0.0000" stop-color="#d4ff13"/><stop offset="0.3750" stop-color="#ffff0a"/><stop offset="0.6250" stop-color="#ffe404"/><stop offset="0.8125" stop-color="#ffd200"/><stop offset="1.0000" stop-color="#ffc200"/></linearGradient><linearGradient id="i46" gradientUnits="userSpaceOnUse" x1="2291.6" x2="2547.6" y1="0" y2="0"><stop offset="0.0000" stop-color="#d5ff13"/><stop offset="0.3594" stop-color="#feff0b"/><stop offset="0.6562" stop-color="#ffdf03"/><stop offset="0.8281" stop-color="#ffd000"/><stop offset="1.0000" stop-color="#ffc100"/></linearGradient><linearGradient id="i47" gradientUnits="userSpaceOnUse" x1="2291.6" x2="2547.6" y1="0" y2="0"><stop offset="0.0000" stop-color="#d6ff14"/><stop offset="0.3594" stop-color="#fffe0c"/><stop offset="0.5938" stop-color="#ffe505"/><stop offset="0.8438" stop-color="#ffcd00"/><stop offset="1.0000" stop-color="#ffc100"/></linearGradient><linearGradient id="i48" gradientUnits="userSpaceOnUse" x1="2291.6" x2="2547.6" y1="0" y2="0"><stop offset="0.0000" stop-color="#d7ff15"/><stop offset="0.3438" stop-color="#ffff0d"/><stop offset="0.5938" stop-color="#ffe406"/><stop offset="0.8594" stop-color="#ffcb00"/><stop offset="1.0000" stop-color="#ffc000"/></linearGradient><linearGradient id="i49" gradientUnits="userSpaceOnUse" x1="2291.6" x2="2547.6" y1="0" y2="0"><stop offset="0.0000" stop-color="#d8ff15"/><stop offset="0.3281" stop-color="#feff0d"/><stop offset="0.3750" stop-color="#fffa0c"/><stop offset="0.6250" stop-color="#ffe005"/><stop offset="0.8750" stop-color="#ffc900"/><stop offset="1.0000" stop-color="#ffbf00"/></linearGradient><linearGradient id="i50" gradientUnits="userSpaceOnUse" x1="2291.6" x2="2547.6" y1="0" y2="0"><stop offset="0.0000" stop-color="#d9ff16"/><stop offset="0.3281" stop-color="#ffff0e"/><stop offset="0.5625" stop-color="#ffe507"/><stop offset="0.8438" stop-color="#ffcb01"/><stop offset="1.0000" stop-color="#ffbe00"/></linearGradient><linearGradient id="i51" gradientUnits="userSpaceOnUse" x1="2291.6" x2="2547.6" y1="0" y2="0"><stop offset="0.0000" stop-color="#daff16"/><stop offset="0.3125" stop-color="#ffff0f"/><stop offset="0.5938" stop-color="#ffe107"/><stop offset="0.8750" stop-color="#ffc700"/><stop offset="1.0000" stop-color="#ffbd00"/></linearGradient><linearGradient id="i52" gradientUnits="userSpaceOnUse" x1="2291.6" x2="2547.6" y1="0" y2="0"><stop offset="0.0000" stop-color="#dbff17"/><stop offset="0.2969" stop-color="#feff10"/><stop offset="0.3125" stop-color="#fffe0f"/><stop offset="0.5469" stop-color="#ffe409"/><stop offset="0.8281" stop-color="#ffca02"/><stop offset="0.9531" stop-color="#ffc000"/><stop offset="1.0000" stop-color="#ffbc00"/></linearGradient><linearGradient id="i53" gradientUnits="userSpaceOnUse" x1="2291.6" x2="2547.6" y1="0" y2="0"><stop offset="0.0000" stop-color="#dcff17"/><stop offset="0.2969" stop-color="#ffff10"/><stop offset="0.5469" stop-color="#ffe309"/><stop offset="0.8281" stop-color="#ffc902"/><stop offset="0.9688" stop-color="#ffbe00"/><stop offset="1.0000" stop-color="#ffbc00"/></linearGradient><linearGradient id="i54" gradientUnits="userSpaceOnUse" x1="2291.6" x2="2547.6" y1="0" y2="0"><stop offset="0.0000" stop-color="#ddff18"/><stop offset="0.2812" stop-color="#feff11"/><stop offset="0.3281" stop-color="#fffa10"/><stop offset="0.5781" stop-color="#ffdf09"/><stop offset="0.8594" stop-color="#ffc602"/><stop offset="1.0000" stop-color="#ffbb00"/></linearGradient><linearGradient id="i55" gradientUnits="userSpaceOnUse" x1="2291.6" x2="2547.6" y1="0" y2="0"><stop offset="0.0000" stop-color="#deff18"/><stop offset="0.2812" stop-color="#ffff12"/><stop offset="0.5156" stop-color="#ffe50b"/><stop offset="0.7812" stop-color="#ffcc04"/><stop offset="1.0000" stop-color="#ffba00"/></linearGradient><linearGradient id="i56" gradientUnits="userSpaceOnUse" x1="2291.6" x2="2547.6" y1="0" y2="0"><stop offset="0.0000" stop-color="#dfff19"/><stop offset="0.2656" stop-color="#ffff13"/><stop offset="0.5469" stop-color="#ffe00a"/><stop offset="0.8281" stop-color="#ffc704"/><stop offset="1.0000" stop-color="#ffb900"/></linearGradient><linearGradient id="i57" gradientUnits="userSpaceOnUse" x1="2291.6" x2="2547.6" y1="0" y2="0"><stop offset="0.0000" stop-color="#e0ff19"/><stop offset="0.2500" stop-color="#feff14"/><stop offset="0.2656" stop-color="#fffe13"/><stop offset="0.5000" stop-color="#ffe40c"/><stop offset="0.7656" stop-color="#ffcb05"/><stop offset="1.0000" stop-color="#ffb800"/></linearGradient><linearGradient id="i58" gradientUnits="userSpaceOnUse" x1="2291.6" x2="2547.6" y1="0" y2="0"><stop offset="0.0000" stop-color="#e1ff1a"/><stop offset="0.2500" stop-color="#ffff14"/><stop offset="0.4844" stop-color="#ffe50d"/><stop offset="0.7500" stop-color="#ffcc06"/><stop offset="1.0000" stop-color="#ffb801"/></linearGradient><linearGradient id="i59" gradientUnits="userSpaceOnUse" x1="2291.6" x2="2547.6" y1="0" y2="0"><stop offset="0.0000" stop-color="#e2ff1b"/><stop offset="0.2344" stop-color="#feff15"/><stop offset="0.2812" stop-color="#fffa14"/><stop offset="0.5156" stop-color="#ffe10d"/><stop offset="0.7969" stop-color="#ffc706"/><stop offset="1.0000" stop-color="#ffb701"/></linearGradient><linearGradient id="i60" gradientUnits="userSpaceOnUse" x1="2291.6" x2="2547.6" y1="0" y2="0"><stop offset="0.0000" stop-color="#e3ff1b"/><stop offset="0.2344" stop-color="#ffff16"/><stop offset="0.4688" stop-color="#ffe40e"/><stop offset="0.7344" stop-color="#ffcb07"/><stop offset="1.0000" stop-color="#ffb602"/></linearGradient><linearGradient id="i61" gradientUnits="userSpaceOnUse" x1="2291.6" x2="2547.6" y1="0" y2="0"><stop offset="0.0000" stop-color="#e4ff1c"/><stop offset="0.2188" stop-color="#ffff17"/><stop offset="0.5000" stop-color="#ffe00e"/><stop offset="0.7812" stop-color="#ffc607"/><stop offset="1.0000" stop-color="#ffb502"/></linearGradient><linearGradient id="i62" gradientUnits="userSpaceOnUse" x1="2291.6" x2="2547.6" y1="0" y2="0"><stop offset="0.0000" stop-color="#e5ff1c"/><stop offset="0.2031" stop-color="#feff18"/><stop offset="0.2188" stop-color="#fffe17"/><stop offset="0.4531" stop-color="#ffe410"/><stop offset="0.7188" stop-color="#ffcb09"/><stop offset="1.0000" stop-color="#ffb402"/></linearGradient></defs>
<rect x="2292.0" y="289.0" width="255.0" height="255.50000000000006" fill="#2e2e2e"/>
<g clip-path="url(#ins)"><rect x="2291.6" y="289.5" width="256.0" height="5.6" fill="url(#i0)"/><rect x="2291.6" y="293.5" width="256.0" height="5.6" fill="url(#i1)"/><rect x="2291.6" y="297.5" width="256.0" height="5.6" fill="url(#i2)"/><rect x="2291.6" y="301.5" width="256.0" height="5.6" fill="url(#i3)"/><rect x="2291.6" y="305.5" width="256.0" height="5.6" fill="url(#i4)"/><rect x="2291.6" y="309.5" width="256.0" height="5.6" fill="url(#i5)"/><rect x="2291.6" y="313.5" width="256.0" height="5.6" fill="url(#i6)"/><rect x="2291.6" y="317.5" width="256.0" height="5.6" fill="url(#i7)"/><rect x="2291.6" y="321.5" width="256.0" height="5.6" fill="url(#i8)"/><rect x="2291.6" y="325.5" width="256.0" height="5.6" fill="url(#i9)"/><rect x="2291.6" y="329.5" width="256.0" height="5.6" fill="url(#i10)"/><rect x="2291.6" y="333.5" width="256.0" height="5.6" fill="url(#i11)"/><rect x="2291.6" y="337.5" width="256.0" height="5.6" fill="url(#i12)"/><rect x="2291.6" y="341.5" width="256.0" height="5.6" fill="url(#i13)"/><rect x="2291.6" y="345.5" width="256.0" height="5.6" fill="url(#i14)"/><rect x="2291.6" y="349.5" width="256.0" height="5.6" fill="url(#i15)"/><rect x="2291.6" y="353.5" width="256.0" height="5.6" fill="url(#i16)"/><rect x="2291.6" y="357.5" width="256.0" height="5.6" fill="url(#i17)"/><rect x="2291.6" y="361.5" width="256.0" height="5.6" fill="url(#i18)"/><rect x="2291.6" y="365.5" width="256.0" height="5.6" fill="url(#i19)"/><rect x="2291.6" y="369.5" width="256.0" height="5.6" fill="url(#i20)"/><rect x="2291.6" y="373.5" width="256.0" height="5.6" fill="url(#i21)"/><rect x="2291.6" y="377.5" width="256.0" height="5.6" fill="url(#i22)"/><rect x="2291.6" y="381.5" width="256.0" height="5.6" fill="url(#i23)"/><rect x="2291.6" y="385.5" width="256.0" height="5.6" fill="url(#i24)"/><rect x="2291.6" y="389.5" width="256.0" height="5.6" fill="url(#i25)"/><rect x="2291.6" y="393.5" width="256.0" height="5.6" fill="url(#i26)"/><rect x="2291.6" y="397.5" width="256.0" height="5.6" fill="url(#i27)"/><rect x="2291.6" y="401.5" width="256.0" height="5.6" fill="url(#i28)"/><rect x="2291.6" y="405.5" width="256.0" height="5.6" fill="url(#i29)"/><rect x="2291.6" y="409.5" width="256.0" height="5.6" fill="url(#i30)"/><rect x="2291.6" y="413.5" width="256.0" height="5.6" fill="url(#i31)"/><rect x="2291.6" y="417.5" width="256.0" height="5.6" fill="url(#i32)"/><rect x="2291.6" y="421.5" width="256.0" height="5.6" fill="url(#i33)"/><rect x="2291.6" y="425.5" width="256.0" height="5.6" fill="url(#i34)"/><rect x="2291.6" y="429.5" width="256.0" height="5.6" fill="url(#i35)"/><rect x="2291.6" y="433.5" width="256.0" height="5.6" fill="url(#i36)"/><rect x="2291.6" y="437.5" width="256.0" height="5.6" fill="url(#i37)"/><rect x="2291.6" y="441.5" width="256.0" height="5.6" fill="url(#i38)"/><rect x="2291.6" y="445.5" width="256.0" height="5.6" fill="url(#i39)"/><rect x="2291.6" y="449.5" width="256.0" height="5.6" fill="url(#i40)"/><rect x="2291.6" y="453.5" width="256.0" height="5.6" fill="url(#i41)"/><rect x="2291.6" y="457.5" width="256.0" height="5.6" fill="url(#i42)"/><rect x="2291.6" y="461.5" width="256.0" height="5.6" fill="url(#i43)"/><rect x="2291.6" y="465.5" width="256.0" height="5.6" fill="url(#i44)"/><rect x="2291.6" y="469.5" width="256.0" height="5.6" fill="url(#i45)"/><rect x="2291.6" y="473.5" width="256.0" height="5.6" fill="url(#i46)"/><rect x="2291.6" y="477.5" width="256.0" height="5.6" fill="url(#i47)"/><rect x="2291.6" y="481.5" width="256.0" height="5.6" fill="url(#i48)"/><rect x="2291.6" y="485.5" width="256.0" height="5.6" fill="url(#i49)"/><rect x="2291.6" y="489.5" width="256.0" height="5.6" fill="url(#i50)"/><rect x="2291.6" y="493.5" width="256.0" height="5.6" fill="url(#i51)"/><rect x="2291.6" y="497.5" width="256.0" height="5.6" fill="url(#i52)"/><rect x="2291.6" y="501.5" width="256.0" height="5.6" fill="url(#i53)"/><rect x="2291.6" y="505.5" width="256.0" height="5.6" fill="url(#i54)"/><rect x="2291.6" y="509.5" width="256.0" height="5.6" fill="url(#i55)"/><rect x="2291.6" y="513.5" width="256.0" height="5.6" fill="url(#i56)"/><rect x="2291.6" y="517.5" width="256.0" height="5.6" fill="url(#i57)"/><rect x="2291.6" y="521.5" width="256.0" height="5.6" fill="url(#i58)"/><rect x="2291.6" y="525.5" width="256.0" height="5.6" fill="url(#i59)"/><rect x="2291.6" y="529.5" width="256.0" height="5.6" fill="url(#i60)"/><rect x="2291.6" y="533.5" width="256.0" height="5.6" fill="url(#i61)"/><rect x="2291.6" y="537.5" width="256.0" height="5.3" fill="url(#i62)"/>
<path d="M2012.8 91.4L2828.8 739.4L2828.8 -108.6Z" fill="#000" fill-opacity="0.4"/></g>
<rect x="2296.6" y="290.5" width="248.5" height="249.7" fill="none" stroke="#8c8c8c" stroke-width="2"/>
<rect x="2410.9" y="405.4" width="18.4" height="18.4" fill="none" stroke="#fff" stroke-opacity="0.96" stroke-width="2.35"/>
<circle cx="2442.2" cy="493.7" r="5.7" fill="#c2b624" stroke="#000" stroke-width="1.5"/>
</svg>
<div style="left:1619.3px;top:1033.1px;width:814.9px;height:275.5px;background:#0e0e0e;"></div>
<div style="left:1621.5px;top:1035.1px;width:811.5px;height:42.3px;background:linear-gradient(180deg,#343434 0%,#2e2e2e 49%,#191919 50%,#0f0f0f 100%);"></div>
<span class="t" style="left:1912.5px;top:1046.6px;font-size:21.7px;line-height:21.7px;color:#f2f2f2;transform:scaleX(1.285);">20%</span>
<span class="t" style="left:2022.3px;top:1046.6px;font-size:21.7px;line-height:21.7px;color:#f2f2f2;transform:scaleX(1.284);">40%</span>
<span class="t" style="left:2131.0px;top:1046.6px;font-size:21.7px;line-height:21.7px;color:#f2f2f2;transform:scaleX(1.295);">60%</span>
<span class="t" style="left:2240.4px;top:1046.6px;font-size:21.7px;line-height:21.7px;color:#f2f2f2;transform:scaleX(1.298);">80%</span>
<span class="t" style="left:2341.5px;top:1046.6px;font-size:21.7px;line-height:21.7px;color:#f2f2f2;transform:scaleX(1.292);">100%</span>
<div style="left:1621.5px;top:1077.4px;width:811.5px;height:38.5px;background:#424242;"></div>
<span class="t" style="left:1645.9px;top:1085.0px;font-size:24.6px;line-height:24.6px;color:#f2f2f2;font-weight:700;transform:scaleX(1.204);">x: CIE31</span>
<span class="t" style="left:1892.5px;top:1084.7px;font-size:24.2px;line-height:24.2px;color:#efefef;transform:scaleX(1.263);">0.34</span>
<span class="t" style="left:2001.9px;top:1084.7px;font-size:24.2px;line-height:24.2px;color:#efefef;transform:scaleX(1.273);">0.36</span>
<span class="t" style="left:2111.2px;top:1084.7px;font-size:24.2px;line-height:24.2px;color:#efefef;transform:scaleX(1.273);">0.38</span>
<span class="t" style="left:2220.6px;top:1084.7px;font-size:24.2px;line-height:24.2px;color:#efefef;transform:scaleX(1.269);">0.40</span>
<span class="t" style="left:2329.9px;top:1084.7px;font-size:24.2px;line-height:24.2px;color:#efefef;transform:scaleX(1.276);">0.42</span>
<div style="left:1621.5px;top:1115.8px;width:811.5px;height:38.5px;background:#828282;"></div>
<span class="t" style="left:1645.9px;top:1123.4px;font-size:24.6px;line-height:24.6px;color:#f2f2f2;font-weight:700;transform:scaleX(1.196);">y: CIE31</span>
<span class="t" style="left:1892.5px;top:1123.1px;font-size:24.2px;line-height:24.2px;color:#efefef;transform:scaleX(1.273);">0.38</span>
<span class="t" style="left:2001.9px;top:1123.1px;font-size:24.2px;line-height:24.2px;color:#efefef;transform:scaleX(1.269);">0.40</span>
<span class="t" style="left:2111.2px;top:1123.1px;font-size:24.2px;line-height:24.2px;color:#efefef;transform:scaleX(1.273);">0.43</span>
<span class="t" style="left:2220.6px;top:1123.1px;font-size:24.2px;line-height:24.2px;color:#efefef;transform:scaleX(1.273);">0.46</span>
<span class="t" style="left:2329.9px;top:1123.1px;font-size:24.2px;line-height:24.2px;color:#efefef;transform:scaleX(1.276);">0.49</span>
<div style="left:1621.5px;top:1154.2px;width:811.5px;height:38.5px;background:#424242;"></div>
<span class="t" style="left:1645.6px;top:1161.8px;font-size:24.6px;line-height:24.6px;color:#f2f2f2;font-weight:700;transform:scaleX(1.042);">Y</span>
<span class="t" style="left:1893.8px;top:1161.5px;font-size:24.2px;line-height:24.2px;color:#efefef;transform:scaleX(1.263);">142.74</span>
<span class="t" style="left:2003.1px;top:1161.5px;font-size:24.2px;line-height:24.2px;color:#efefef;transform:scaleX(1.272);">137.71</span>
<span class="t" style="left:2112.5px;top:1161.5px;font-size:24.2px;line-height:24.2px;color:#efefef;transform:scaleX(1.270);">133.76</span>
<span class="t" style="left:2221.8px;top:1161.5px;font-size:24.2px;line-height:24.2px;color:#efefef;transform:scaleX(1.272);">130.22</span>
<span class="t" style="left:2331.2px;top:1161.5px;font-size:24.2px;line-height:24.2px;color:#efefef;transform:scaleX(1.270);">126.73</span>
<div style="left:1621.5px;top:1192.6px;width:811.5px;height:38.5px;background:#828282;"></div>
<span class="t" style="left:1645.7px;top:1200.2px;font-size:24.6px;line-height:24.6px;color:#f2f2f2;font-weight:700;transform:scaleX(1.251);">Target x:CIE31</span>
<span class="t" style="left:1892.5px;top:1199.9px;font-size:24.2px;line-height:24.2px;color:#efefef;transform:scaleX(1.273);">0.33</span>
<span class="t" style="left:2001.9px;top:1199.9px;font-size:24.2px;line-height:24.2px;color:#efefef;transform:scaleX(1.273);">0.36</span>
<span class="t" style="left:2111.2px;top:1199.9px;font-size:24.2px;line-height:24.2px;color:#efefef;transform:scaleX(1.273);">0.38</span>
<span class="t" style="left:2220.6px;top:1199.9px;font-size:24.2px;line-height:24.2px;color:#efefef;transform:scaleX(1.269);">0.40</span>
<span class="t" style="left:2329.9px;top:1199.9px;font-size:24.2px;line-height:24.2px;color:#efefef;transform:scaleX(1.276);">0.42</span>
<div style="left:1621.5px;top:1231px;width:811.5px;height:38.5px;background:#424242;"></div>
<span class="t" style="left:1645.7px;top:1238.6px;font-size:24.6px;line-height:24.6px;color:#f2f2f2;font-weight:700;transform:scaleX(1.246);">Target y:CIE31</span>
<span class="t" style="left:1892.5px;top:1238.3px;font-size:24.2px;line-height:24.2px;color:#efefef;transform:scaleX(1.273);">0.36</span>
<span class="t" style="left:2001.9px;top:1238.3px;font-size:24.2px;line-height:24.2px;color:#efefef;transform:scaleX(1.269);">0.40</span>
<span class="t" style="left:2111.2px;top:1238.3px;font-size:24.2px;line-height:24.2px;color:#efefef;transform:scaleX(1.263);">0.44</span>
<span class="t" style="left:2220.6px;top:1238.3px;font-size:24.2px;line-height:24.2px;color:#efefef;transform:scaleX(1.276);">0.47</span>
<span class="t" style="left:2329.9px;top:1238.3px;font-size:24.2px;line-height:24.2px;color:#efefef;transform:scaleX(1.276);">0.51</span>
<div style="left:1621.5px;top:1269.4px;width:811.5px;height:38px;background:#828282;"></div>
<span class="t" style="left:1645.7px;top:1277.0px;font-size:24.6px;line-height:24.6px;color:#f2f2f2;font-weight:700;transform:scaleX(1.271);">Target Y</span>
<span class="t" style="left:1893.8px;top:1276.7px;font-size:24.2px;line-height:24.2px;color:#efefef;transform:scaleX(1.268);">144.80</span>
<span class="t" style="left:2003.1px;top:1276.7px;font-size:24.2px;line-height:24.2px;color:#efefef;transform:scaleX(1.270);">142.26</span>
<span class="t" style="left:2112.5px;top:1276.7px;font-size:24.2px;line-height:24.2px;color:#efefef;transform:scaleX(1.272);">140.31</span>
<span class="t" style="left:2221.8px;top:1276.7px;font-size:24.2px;line-height:24.2px;color:#efefef;transform:scaleX(1.270);">138.78</span>
<span class="t" style="left:2331.2px;top:1276.7px;font-size:24.2px;line-height:24.2px;color:#efefef;transform:scaleX(1.268);">137.30</span>
<div style="left:300px;top:1435px;width:2260px;height:93px;background:linear-gradient(180deg,#4a4a4a 0%,#3a3a3a 45%,#2a2a2a 100%);"></div>
<div style="left:301.7px;top:1435.6px;width:67.7px;height:92px;background:linear-gradient(180deg,#a4a4a4,#8a8a8a 45%,#585858);border-radius:6px;"></div>
<div style="left:323.8px;top:1438.3px;width:22.6px;height:22.6px;border-radius:50%;background:linear-gradient(180deg,#747474,#a6a6a6);"></div>
<svg class="a" style="left:329.2px;top:1445.5px" width="12" height="6.2"><path d="M0 6.2L6 0L12 6.2z" fill="#2c2c2c"/></svg>
<div style="left:309.2px;top:1474.8px;width:52.5px;height:45.2px;background:#ffff00;border-radius:6px;box-shadow:inset 0 0 0 1px #c9c900;"></div>
<div style="left:378.2px;top:1436.3px;width:225px;height:91.7px;background:linear-gradient(180deg,#ababab 0%,#8a8a8a 45%,#565656 100%);border-radius:6px 6px 0 0;"></div>
<div style="left:386.6px;top:1444.2px;width:208.6px;height:53.2px;background:#c1c1a7;border-radius:6px;box-shadow:inset 0 0 0 1px rgba(110,110,40,.45);"></div>
<span class="t" style="left:476.3px;top:1507.3px;font-size:14.4px;line-height:14.4px;color:#2a2a2a;font-weight:700;">20%</span>
<div style="left:606.45px;top:1436.3px;width:225px;height:91.7px;background:linear-gradient(180deg,#ababab 0%,#8a8a8a 45%,#565656 100%);border-radius:6px 6px 0 0;"></div>
<div style="left:614.85px;top:1444.2px;width:208.6px;height:53.2px;background:#c2c18c;border-radius:6px;box-shadow:inset 0 0 0 1px rgba(110,110,40,.45);"></div>
<span class="t" style="left:704.6px;top:1507.3px;font-size:14.4px;line-height:14.4px;color:#2a2a2a;font-weight:700;">40%</span>
<div style="left:834.7px;top:1436.3px;width:225px;height:91.7px;background:linear-gradient(180deg,#ababab 0%,#8a8a8a 45%,#565656 100%);border-radius:6px 6px 0 0;"></div>
<div style="left:843.1px;top:1444.2px;width:208.6px;height:53.2px;background:#c2c171;border-radius:6px;box-shadow:inset 0 0 0 1px rgba(110,110,40,.45);"></div>
<span class="t" style="left:932.7px;top:1507.3px;font-size:14.4px;line-height:14.4px;color:#2a2a2a;font-weight:700;">60%</span>
<div style="left:1062.95px;top:1436.3px;width:225px;height:91.7px;background:linear-gradient(180deg,#ababab 0%,#8a8a8a 45%,#565656 100%);border-radius:6px 6px 0 0;"></div>
<div style="left:1071.35px;top:1444.2px;width:208.6px;height:53.2px;background:#c3c250;border-radius:6px;box-shadow:inset 0 0 0 1px rgba(110,110,40,.45);"></div>
<span class="t" style="left:1161.0px;top:1507.3px;font-size:14.4px;line-height:14.4px;color:#2a2a2a;font-weight:700;">80%</span>
<div style="left:1291.2px;top:1436.3px;width:225px;height:91.7px;background:linear-gradient(180deg,#1c1c1c,#2a2a2a 60%,#333);border-radius:6px 6px 0 0;"></div>
<div style="left:1299.6px;top:1444.2px;width:208.6px;height:53.2px;background:#c6c400;border-radius:6px;box-shadow:inset 0 0 0 1px rgba(110,110,40,.45);"></div>
<span class="t" style="left:1385.0px;top:1507.3px;font-size:14.4px;line-height:14.4px;color:#fff;font-weight:700;">100%</span>
<div style="left:2075.9px;top:1435.5px;width:72.2px;height:28px;background:linear-gradient(180deg,#a8a8a8,#8c8c8c);border-radius:6px 6px 0 0;"></div>
<div style="left:2075.9px;top:1464px;width:72.2px;height:64px;background:linear-gradient(180deg,#929292,#666);border-radius:0 0 6px 6px;"></div>
<div style="left:2075.9px;top:1463.2px;width:72.2px;height:1.2px;background:#505050;"></div>
<div style="left:2101px;top:1438.6px;width:22px;height:22px;border-radius:50%;background:linear-gradient(180deg,#747474,#a6a6a6);"></div>
<svg class="a" style="left:2105.8px;top:1445.4px" width="12.2" height="6.3"><path d="M0 6.3L6.1 0L12.2 6.3z" fill="#333"/></svg>
<div style="left:2088.2px;top:1472.3px;width:46.9px;height:46.1px;background:linear-gradient(180deg,#ababab 0%,#a4a4a4 51%,#8c8c8c 52%,#909090 100%);border:3.2px solid #2b2b2b;border-radius:7px;"></div>
<div style="left:2102px;top:1485.6px;width:20.2px;height:20.1px;background:linear-gradient(180deg,#1c1c1c 0%,#181818 51%,#000 52%,#000 100%);"></div>
<div style="left:2149.4px;top:1435.1px;width:69px;height:45.2px;background:linear-gradient(180deg,#a9a9a9 0%,#8d8d8d 45%,#5d5d5d 100%);border-radius:6px 0 0 0;"></div>
<div style="left:2168.7px;top:1442.7px;width:31px;height:31px;border-radius:50%;background:linear-gradient(180deg,#747474,#a6a6a6);"></div>
<div style="left:2220px;top:1435.1px;width:65.1px;height:45.2px;background:linear-gradient(180deg,#a9a9a9 0%,#8d8d8d 45%,#5d5d5d 100%);"></div>
<div style="left:2237.4px;top:1442.7px;width:31px;height:31px;border-radius:50%;background:linear-gradient(180deg,#747474,#a6a6a6);"></div>
<div style="left:2286.7px;top:1435.1px;width:66.9px;height:45.2px;background:linear-gradient(180deg,#a9a9a9 0%,#8d8d8d 45%,#5d5d5d 100%);"></div>
<div style="left:2305.1px;top:1442.7px;width:31px;height:31px;border-radius:50%;background:linear-gradient(180deg,#747474,#a6a6a6);"></div>
<div style="left:2355.2px;top:1435.1px;width:66.3px;height:45.2px;background:linear-gradient(180deg,#a9a9a9 0%,#8d8d8d 45%,#5d5d5d 100%);"></div>
<div style="left:2372.3px;top:1442.7px;width:31px;height:31px;border-radius:50%;background:linear-gradient(180deg,#747474,#a6a6a6);"></div>
<div style="left:2421.8px;top:1435.1px;width:67.7px;height:45.2px;background:linear-gradient(180deg,#3e3e3e,#262626);"></div>
<div style="left:2439.8px;top:1442.7px;width:31px;height:31px;border-radius:50%;background:linear-gradient(180deg,#2c2c2c,#343434);"></div>
<div style="left:2489.8px;top:1435.1px;width:66.3px;height:45.2px;background:linear-gradient(180deg,#a9a9a9 0%,#8d8d8d 45%,#5d5d5d 100%);border-radius:0 6px 0 0;"></div>
<div style="left:2509.1px;top:1442.7px;width:31px;height:31px;border-radius:50%;background:linear-gradient(180deg,#747474,#a6a6a6);"></div>
<div style="left:2178px;top:1452.4px;width:12.3px;height:11.4px;background:#333;"></div>
<svg class="a" style="left:2248.2px;top:1452px" width="12.4" height="14.4"><path d="M0 0L12.4 7.2L0 14.4z" fill="#333"/></svg>
<span class="t" style="left:2310.9px;top:1450.5px;font-size:15.5px;line-height:15.5px;color:#333;font-weight:700;transform:scaleX(0.937);text-shadow:0 0 .6px #333;">[··]</span>
<span class="t" style="left:2375.1px;top:1444.5px;font-size:24px;line-height:24px;color:#333;font-weight:700;font-family:'DejaVu Sans',sans-serif;transform:scaleX(1.272);">∞</span>
<svg class="a" style="left:2445.3px;top:1448.2px" width="20" height="20" viewBox="-10 -10 20 20" fill="none" stroke="#161616" stroke-width="2.8"><path d="M-6.3 -1.5A6.5 6.5 0 0 1 5 -4.2"/><path d="M6.3 1.5A6.5 6.5 0 0 1 -5 4.2"/><path d="M2.2 -4.6L7.3 -3.4L6.6 -8.2z" fill="#161616" stroke="none"/><path d="M-2.2 4.6L-7.3 3.4L-6.6 8.2z" fill="#161616" stroke="none"/></svg>
<div style="left:2149.4px;top:1482px;width:203.9px;height:46px;background:linear-gradient(180deg,#b2b2b2 0%,#979797 45%,#6c6c6c 100%);border-radius:6px 0 0 0;"></div>
<div style="left:2355.2px;top:1482px;width:200.9px;height:46px;background:linear-gradient(180deg,#b2b2b2 0%,#979797 45%,#6c6c6c 100%);"></div>
<div style="left:2180.3px;top:1489.4px;width:31.2px;height:31.2px;border-radius:50%;background:linear-gradient(180deg,#747474,#a6a6a6);"></div>
<div style="left:2500.3px;top:1489.4px;width:31.2px;height:31.2px;border-radius:50%;background:linear-gradient(180deg,#747474,#a6a6a6);"></div>
<svg class="a" style="left:2187px;top:1497px" width="18" height="16" fill="none" stroke="#333" stroke-width="2.5"><path d="M8 1L2 7.3L8.6 14.6M14.5 1L8.5 7.3L15.1 14.6"/></svg>
<svg class="a" style="left:2507.5px;top:1497px" width="18" height="16" fill="none" stroke="#333" stroke-width="2.5"><path d="M3 1L9 7.3L2.4 14.6M9.5 1L15.5 7.3L8.9 14.6"/></svg>
<span class="t" style="left:2233.9px;top:1489.4px;font-size:32.1px;line-height:32.1px;color:#333;transform:scaleX(1.075);text-shadow:0 0 1px #333;-webkit-text-stroke:0.5px #333;">Back</span>
<span class="t" style="left:2393.6px;top:1489.6px;font-size:32.1px;line-height:32.1px;color:#333;transform:scaleX(1.196);text-shadow:0 0 1px #333;-webkit-text-stroke:0.5px #333;">Next</span>
<div style="left:2556.1px;top:1435px;width:3.9px;height:93px;background:#262626;"></div>
</body></html>
